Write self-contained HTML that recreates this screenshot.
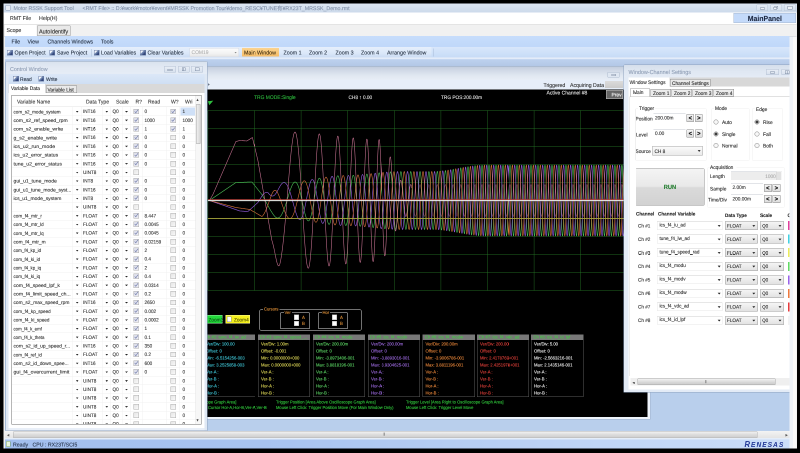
<!DOCTYPE html>
<html><head><meta charset="utf-8"><title>Motor RSSK Support Tool</title>
<style>
html,body{margin:0;padding:0;background:#000;overflow:hidden;}
body{width:800px;height:453px;position:relative;}
#s{position:absolute;left:0;top:0;width:1600px;height:906px;will-change:transform;transform:scale(0.5);filter:blur(0.6px);transform-origin:0 0;overflow:hidden;font-family:"Liberation Sans","Noto Sans CJK JP",sans-serif;}
#s div{position:absolute;}
.t{white-space:nowrap;-webkit-text-stroke:0.16px currentColor;}
</style></head><body><div id="s">
<div style="left:7px;top:7px;width:1587px;height:890.4px;background:#f0f0f0;"></div>
<div style="left:7px;top:7px;width:1587px;height:17.6px;background:linear-gradient(#dfe8f4,#d3dfee 60%,#cddaeb);"></div>
<div style="left:11px;top:10.4px;width:10px;height:10.8px;background:#e9eef6;border:0.5px solid #8fa0bb;border-radius:1px;box-sizing:border-box;"></div>
<div class="t" style="left:27.2px;top:9.3px;height:14.61px;line-height:14.61px;font-size:11.23px;color:#7f8da5;transform:scaleX(0.940) rotate(0.03deg);transform-origin:0 50%;">Motor RSSK Support Tool</div>
<div class="t jp" style="left:165px;top:9.3px;height:14.61px;line-height:14.61px;font-size:11.23px;color:#7f8da5;transform:scaleX(0.940) rotate(0.03deg);transform-origin:0 50%;">&lt;RMT File&gt; :: D:¥work¥motor¥event¥MRSSK Promotion Tour¥demo_RESC¥TUNE有¥RX23T_MRSSK_Demo.rmt</div>
<div style="left:1513px;top:8.6px;width:23.2px;height:13.8px;border:0.5px solid #b9c6d8;background:linear-gradient(#e6edf6,#d6e0ee);box-sizing:border-box;border-radius:1px;"></div>
<div style="left:1541px;top:8.6px;width:23.2px;height:13.8px;border:0.5px solid #b9c6d8;background:linear-gradient(#e6edf6,#d6e0ee);box-sizing:border-box;border-radius:1px;"></div>
<div style="left:1568.4px;top:8.6px;width:23.2px;height:13.8px;border:0.5px solid #b9c6d8;background:linear-gradient(#e6edf6,#d6e0ee);box-sizing:border-box;border-radius:1px;"></div>
<div style="left:1520px;top:14.8px;width:10px;height:4px;border:0.6px solid #7d8aa0;box-sizing:border-box;border-radius:0.8px;background:#eef2f8;"></div>
<div style="left:1549.2px;top:12.4px;width:7.2px;height:4.8px;border:0.6px solid #7d8aa0;box-sizing:border-box;background:#eef2f8;"></div>
<div style="left:1546.8px;top:14.4px;width:7.2px;height:4.8px;border:0.6px solid #7d8aa0;box-sizing:border-box;background:#eef2f8;"></div>
<div style="left:1575.2px;top:11.6px;width:9.6px;height:7.6px;border:0.7px solid #7d8aa0;box-sizing:border-box;background:#eef2f8;"></div>
<div style="left:8.4px;top:24.6px;width:1584.4px;height:24px;background:#fff;"></div>
<div class="t" style="left:19.8px;top:29.37px;height:14.47px;line-height:14.47px;font-size:11.13px;color:#333;transform:scaleX(0.940) rotate(0.03deg);transform-origin:0 50%;">RMT File</div>
<div class="t" style="left:77.8px;top:29.23px;height:14.74px;line-height:14.74px;font-size:11.34px;color:#333;transform:scaleX(0.940) rotate(0.03deg);transform-origin:0 50%;">Help(H)</div>
<div style="left:1467px;top:26.4px;width:125.4px;height:20px;background:#c4dafa;border:0.5px solid #a9b9cf;box-sizing:border-box;"></div>
<div class="t" style="left:1467px;top:27.84px;height:19.11px;line-height:19.11px;font-size:14.7px;color:#1c2740;width:125.4px;text-align:center;transform:scaleX(0.940) rotate(0.03deg);transform-origin:50% 50%;font-weight:bold;">MainPanel</div>
<div style="left:8.4px;top:48.6px;width:1584.4px;height:24px;background:#f1f1f1;border-top:0.5px solid #c9c9c9;border-bottom:0.5px solid #c4c8cf;box-sizing:border-box;"></div>
<div style="left:9.6px;top:49.6px;width:63.6px;height:23.6px;background:#fff;"></div>
<div class="t" style="left:13.4px;top:53.37px;height:14.47px;line-height:14.47px;font-size:11.13px;color:#222;transform:scaleX(0.940) rotate(0.03deg);transform-origin:0 50%;">Scope</div>
<div style="left:74px;top:51.2px;width:67.2px;height:20.4px;background:#e9e9e9;border:0.5px solid #9a9a9a;box-sizing:border-box;border-radius:1px 1px 0 0;"></div>
<div class="t" style="left:78.4px;top:54.56px;height:15.29px;line-height:15.29px;font-size:11.76px;color:#222;transform:scaleX(0.940) rotate(0.03deg);transform-origin:0 50%;">AutoIdentify</div>
<div style="left:9.6px;top:72.6px;width:1569px;height:824.8px;background:#b9cfec;"></div>
<div style="left:1578.6px;top:72.6px;width:7.8px;height:824.8px;background:#eef2f8;"></div>
<div style="left:1586.4px;top:72.6px;width:6.8px;height:824.8px;background:#fafafa;"></div>
<div style="left:9.6px;top:72px;width:1569px;height:22px;background:linear-gradient(#c7ddfc,#c0d8fa);"></div>
<div class="t" style="left:23.2px;top:76.43px;height:14.74px;line-height:14.74px;font-size:11.34px;color:#1e2a3c;transform:scaleX(0.940) rotate(0.03deg);transform-origin:0 50%;">File</div>
<div class="t" style="left:55.2px;top:76.43px;height:14.74px;line-height:14.74px;font-size:11.34px;color:#1e2a3c;transform:scaleX(0.940) rotate(0.03deg);transform-origin:0 50%;">View</div>
<div class="t" style="left:95.2px;top:76.43px;height:14.74px;line-height:14.74px;font-size:11.34px;color:#1e2a3c;transform:scaleX(0.940) rotate(0.03deg);transform-origin:0 50%;">Channels Windows</div>
<div class="t" style="left:201.6px;top:76.43px;height:14.74px;line-height:14.74px;font-size:11.34px;color:#1e2a3c;transform:scaleX(0.940) rotate(0.03deg);transform-origin:0 50%;">Tools</div>
<div style="left:9.6px;top:94px;width:1569px;height:21.6px;background:linear-gradient(#d9e7fb,#cde0f9 60%,#c6dbf6);"></div>
<div style="left:9.6px;top:94px;width:853.6px;height:21.2px;background:linear-gradient(#e6effc,#dbe8f9 60%,#cbdcf3);border-radius:0 1.5px 1.5px 0;"></div>
<div style="left:866.8px;top:97.2px;width:1px;height:15.6px;background:#a9bcd8;"></div>
<div style="left:14.4px;top:99.6px;width:11.2px;height:11.2px;background:linear-gradient(135deg,#f4f6fa 35%,#8aa0c4 36%,#31457a 75%);border:0.4px solid #6d7fa6;box-sizing:border-box;"></div>
<div class="t" style="left:28.8px;top:98.03px;height:14.74px;line-height:14.74px;font-size:11.34px;color:#1e2a3c;transform:scaleX(0.940) rotate(0.03deg);transform-origin:0 50%;">Open Project</div>
<div style="left:98.8px;top:99.6px;width:11.2px;height:11.2px;background:linear-gradient(135deg,#f4f6fa 35%,#8aa0c4 36%,#31457a 75%);border:0.4px solid #6d7fa6;box-sizing:border-box;"></div>
<div class="t" style="left:113.6px;top:98.03px;height:14.74px;line-height:14.74px;font-size:11.34px;color:#1e2a3c;transform:scaleX(0.940) rotate(0.03deg);transform-origin:0 50%;">Save Project</div>
<div style="left:182.4px;top:97.6px;width:1px;height:15.2px;background:#a8bcd8;"></div>
<div style="left:187.6px;top:99.6px;width:11.2px;height:11.2px;background:linear-gradient(135deg,#f4f6fa 35%,#8aa0c4 36%,#31457a 75%);border:0.4px solid #6d7fa6;box-sizing:border-box;"></div>
<div class="t" style="left:202.4px;top:98.03px;height:14.74px;line-height:14.74px;font-size:11.34px;color:#1e2a3c;transform:scaleX(0.940) rotate(0.03deg);transform-origin:0 50%;">Load Variables</div>
<div style="left:280.4px;top:99.6px;width:11.2px;height:11.2px;background:linear-gradient(135deg,#f4f6fa 35%,#8aa0c4 36%,#31457a 75%);border:0.4px solid #6d7fa6;box-sizing:border-box;"></div>
<div class="t" style="left:295.2px;top:98.03px;height:14.74px;line-height:14.74px;font-size:11.34px;color:#1e2a3c;transform:scaleX(0.940) rotate(0.03deg);transform-origin:0 50%;">Clear Variables</div>
<div style="left:379.2px;top:95.6px;width:98.4px;height:18.8px;background:linear-gradient(#fcfcfc,#f3f3f3 60%,#e6e6e6);border:0.4px solid #d5dce8;box-sizing:border-box;"></div>
<div class="t" style="left:382.8px;top:98.17px;height:13.65px;line-height:13.65px;font-size:10.5px;color:#b0b0b0;transform:scaleX(0.940) rotate(0.03deg);transform-origin:0 50%;">COM19</div>
<div style="left:468.6px;top:103.6px;width:5.2px;height:3.2px;background:#8a8a8a;clip-path:polygon(0 0,100% 0,50% 100%);"></div>
<div style="left:483.6px;top:96px;width:74px;height:17.2px;background:linear-gradient(#fbd490,#f8c676 60%,#f6bd68);border-radius:0.8px;"></div>
<div class="t" style="left:488.4px;top:98.03px;height:14.74px;line-height:14.74px;font-size:11.34px;color:#3a2a10;transform:scaleX(0.940) rotate(0.03deg);transform-origin:0 50%;">Main Window</div>
<div class="t" style="left:566.8px;top:98.03px;height:14.74px;line-height:14.74px;font-size:11.34px;color:#1e2a3c;transform:scaleX(0.940) rotate(0.03deg);transform-origin:0 50%;">Zoom 1</div>
<div class="t" style="left:618.4px;top:98.03px;height:14.74px;line-height:14.74px;font-size:11.34px;color:#1e2a3c;transform:scaleX(0.940) rotate(0.03deg);transform-origin:0 50%;">Zoom 2</div>
<div class="t" style="left:670.8px;top:98.03px;height:14.74px;line-height:14.74px;font-size:11.34px;color:#1e2a3c;transform:scaleX(0.940) rotate(0.03deg);transform-origin:0 50%;">Zoom 3</div>
<div class="t" style="left:722.4px;top:98.03px;height:14.74px;line-height:14.74px;font-size:11.34px;color:#1e2a3c;transform:scaleX(0.940) rotate(0.03deg);transform-origin:0 50%;">Zoom 4</div>
<div class="t" style="left:774.4px;top:98.03px;height:14.74px;line-height:14.74px;font-size:11.34px;color:#1e2a3c;transform:scaleX(0.940) rotate(0.03deg);transform-origin:0 50%;">Arrange Window</div>
<div style="left:9.6px;top:115.2px;width:1569px;height:16.8px;background:linear-gradient(#eaf1fb 0,#e2ebf9 16%,#bdd1ee 24%,#b3c8e7 100%);"></div>
<div style="left:9.6px;top:862px;width:1569px;height:14.4px;background:linear-gradient(#f4f4f4,#e4e4e4);"></div>
<div style="left:25.6px;top:862.8px;width:1489.2px;height:12.8px;background:linear-gradient(#f0f0f0,#dcdcdc 50%,#cfcfcf);border:0.5px solid #b4b4b4;box-sizing:border-box;border-radius:1px;"></div>
<div class="t" style="left:14.4px;top:863.52px;height:12.56px;line-height:12.56px;font-size:9.66px;color:#555;transform:scaleX(0.940) rotate(0.03deg);transform-origin:0 50%;">◂</div>
<div class="t" style="left:767.2px;top:864.49px;height:9.83px;line-height:9.83px;font-size:7.56px;color:#777;transform:scaleX(0.940) rotate(0.03deg);transform-origin:0 50%;">⦀</div>
<div class="t" style="left:1571.2px;top:863.52px;height:12.56px;line-height:12.56px;font-size:9.66px;color:#555;transform:scaleX(0.940) rotate(0.03deg);transform-origin:0 50%;">▸</div>
<div style="left:9.6px;top:876.4px;width:1569px;height:2.8px;background:#e4edf9;"></div>
<div style="left:9.6px;top:879.2px;width:1569px;height:18.2px;background:linear-gradient(90deg,#a3bfee 0,#a9c4f0 35%,#c0d5f6 75%,#cbddf9 100%);"></div>
<div style="left:12px;top:882px;width:8.8px;height:12.4px;background:#e8f4e0;border:0.6px solid #6f9a5c;box-sizing:border-box;border-radius:1.5px;"></div>
<div class="t" style="left:26px;top:881.77px;height:14.47px;line-height:14.47px;font-size:11.13px;color:#243148;transform:scaleX(0.940) rotate(0.03deg);transform-origin:0 50%;">Ready</div>
<div class="t" style="left:64.8px;top:881.77px;height:14.47px;line-height:14.47px;font-size:11.13px;color:#243148;transform:scaleX(0.940) rotate(0.03deg);transform-origin:0 50%;">CPU : RX23T/SCI5</div>
<div class="t" style="left:1489.2px;top:878.63px;height:20.75px;line-height:20.75px;font-size:15.96px;color:#2a3f9a;transform:scaleX(0.940) rotate(0.03deg);transform-origin:0 50%;font-weight:bold;font-style:italic;letter-spacing:2.3px;">R<span style="font-size:0.87em">ENESAS</span></div>
<div style="left:300px;top:132px;width:1000.8px;height:707.2px;background:#eef3fa;border:0.5px solid #9fb2cc;box-sizing:border-box;"></div>
<div style="left:300px;top:132.6px;width:1000px;height:27.4px;background:linear-gradient(#b4c1d4 0,#c6d0df 6%,#d4dce9 35%,#e2e9f2 70%,#e8eef7);"></div>
<div style="left:300px;top:160px;width:996px;height:19px;background:#e6eef9;"></div>
<div style="left:1215.2px;top:144px;width:24px;height:11.2px;border:0.5px solid #aebccf;background:#dfe7f2;box-sizing:border-box;border-radius:1px;"></div>
<div style="left:1222.8px;top:148.4px;width:9.2px;height:3.6px;border:0.5px solid #8a97ac;box-sizing:border-box;border-radius:0.8px;"></div>
<div class="t" style="left:1087.2px;top:162.7px;height:14.2px;line-height:14.2px;font-size:10.92px;color:#2a2a2a;transform:scaleX(0.940) rotate(0.03deg);transform-origin:0 50%;">Triggered</div>
<div class="t" style="left:1139.6px;top:162.63px;height:14.33px;line-height:14.33px;font-size:11.03px;color:#2a2a2a;transform:scaleX(0.940) rotate(0.03deg);transform-origin:0 50%;">Acquiring Data</div>
<div style="left:1210px;top:162px;width:36px;height:13.6px;background:linear-gradient(#dcdcdc,#cbcbcb);"></div>
<svg style="position:absolute;left:415.6px;top:165.6px;width:4px;height:6px" viewBox="0 0 4 6"><path d="M0.4 0.4L3.4 3L0.4 5.6Z" fill="#4a5668"/></svg>
<div style="left:415.2px;top:179px;width:880px;height:655.4px;background:#000;"></div>
<div class="t" style="left:508.4px;top:188.18px;height:13.65px;line-height:13.65px;font-size:10.5px;color:#2fbf3f;transform:scaleX(0.940) rotate(0.03deg);transform-origin:0 50%;">TRG MODE:Single</div>
<div class="t" style="left:696.8px;top:188.45px;height:13.1px;line-height:13.1px;font-size:10.08px;color:#e8e8e8;transform:scaleX(0.940) rotate(0.03deg);transform-origin:0 50%;">CH8 ↑ 0.00</div>
<div class="t" style="left:882px;top:188.45px;height:13.1px;line-height:13.1px;font-size:10.08px;color:#e8e8e8;transform:scaleX(0.940) rotate(0.03deg);transform-origin:0 50%;">TRG POS:200.00m</div>
<div class="t" style="left:1092.8px;top:178.84px;height:13.92px;line-height:13.92px;font-size:10.71px;color:#f0f0f0;transform:scaleX(0.940) rotate(0.03deg);transform-origin:0 50%;">Active Channel #8</div>
<div style="left:1212.4px;top:180px;width:33.6px;height:18.4px;background:#666;border:0.6px solid #c4c4c4;box-sizing:border-box;"></div>
<div class="t" style="left:1222.8px;top:182.97px;height:13.65px;line-height:13.65px;font-size:10.5px;color:#fff;transform:scaleX(0.940) rotate(0.03deg);transform-origin:0 50%;">Prev</div>
<svg style="position:absolute;left:415.2px;top:200px;width:880px;height:400px" viewBox="207.6 100 440 200" preserveAspectRatio="none" fill="none"><path d="M208.00 110.5V290.5M254.60 110.5V290.5M301.20 110.5V290.5M347.80 110.5V290.5M394.40 110.5V290.5M441.00 110.5V290.5M487.60 110.5V290.5M534.20 110.5V290.5M580.80 110.5V290.5M627.40 110.5V290.5M674.00 110.5V290.5M208.0 110.50H648M208.0 128.50H648M208.0 146.50H648M208.0 164.50H648M208.0 182.50H648M208.0 200.50H648M208.0 218.50H648M208.0 236.50H648M208.0 254.50H648M208.0 272.50H648M208.0 290.50H648" stroke="#2a802a" stroke-width="0.4"/><polyline points="209.5,200.5 209.7,200.4 209.9,200.2 210.1,200.1 210.3,200.0 210.5,199.8 210.7,199.7 210.9,199.5 211.1,199.4 211.3,199.3 211.5,199.1 211.7,199.0 211.9,198.9 212.1,198.7 212.3,198.6 212.5,198.5 212.7,198.3 212.9,198.2 213.1,198.1 213.3,197.9 213.5,197.8 213.7,197.6 213.9,197.5 214.1,197.4 214.3,197.2 214.5,197.1 214.7,197.0 214.9,196.8 215.1,196.7 215.3,196.6 215.5,196.4 215.7,196.3 215.9,196.2 216.1,196.0 216.3,195.9 216.5,195.7 216.7,195.6 216.9,195.5 217.1,195.3 217.3,195.2 217.5,195.1 217.7,194.9 217.9,194.8 218.1,194.7 218.3,194.5 218.5,194.4 218.7,194.3 218.9,194.1 219.1,194.0 219.3,193.8 219.5,193.7 219.7,193.6 219.9,193.4 220.1,193.3 220.3,193.2 220.5,193.0 220.7,192.9 220.9,192.8 221.1,192.6 221.3,192.5 221.5,192.3 221.7,192.2 221.9,192.1 222.1,191.9 222.3,191.8 222.5,191.7 222.7,191.5 222.9,191.4 223.1,191.3 223.3,191.1 223.5,191.0 223.7,190.9 223.9,190.7 224.1,190.6 224.3,190.4 224.5,190.3 224.7,190.2 224.9,190.0 225.1,189.9 225.3,189.8 225.5,189.6 225.7,189.5 225.9,189.4 226.1,189.2 226.3,189.1 226.5,189.0 226.7,188.8 226.9,188.7 227.1,188.5 227.3,188.4 227.5,188.3 227.7,188.1 227.9,188.0 228.1,187.9 228.3,187.7 228.5,187.6 228.7,187.5 228.9,187.3 229.1,187.2 229.3,187.1 229.5,186.9 229.7,186.8 229.9,186.6 230.1,186.5 230.3,186.4 230.5,186.2 230.7,186.1 230.9,186.0 231.1,185.8 231.3,185.7 231.5,185.6 231.7,185.4 231.9,185.3 232.1,185.1 232.3,185.0 232.5,184.9 232.7,184.7 232.9,184.6 233.1,184.5 233.3,184.3 233.5,184.2 233.7,184.1 233.9,183.9 234.1,183.8 234.3,183.7 234.5,183.5 234.7,183.4 234.9,183.2 235.1,183.1 235.3,183.0 235.5,182.8 235.7,182.7 235.9,182.6 236.1,182.5 236.3,182.5 236.5,182.5 236.7,182.5 236.9,182.5 237.1,182.5 237.3,182.5 237.5,182.5 237.7,182.4 237.9,182.4 238.1,182.4 238.3,182.4 238.5,182.4 238.7,182.4 238.9,182.4 239.1,182.4 239.3,182.4 239.5,182.4 239.7,182.4 239.9,182.4 240.1,182.4 240.3,182.4 240.5,182.4 240.7,182.4 240.9,182.3 241.1,182.3 241.3,182.3 241.5,182.3 241.7,182.3 241.9,182.3 242.1,182.3 242.3,182.3 242.5,182.3 242.7,182.3 242.9,182.3 243.1,182.3 243.3,182.3 243.5,182.3 243.7,182.3 243.9,182.3 244.1,182.2 244.3,182.2 244.5,182.2 244.7,182.2 244.9,182.2 245.1,182.2 245.3,182.2 245.5,182.2 245.7,182.2 245.9,182.2 246.1,182.2 246.3,182.2 246.5,182.2 246.7,182.2 246.9,182.2 247.1,182.2 247.3,182.1 247.5,182.1 247.7,182.1 247.9,182.1 248.1,182.1 248.3,182.1 248.5,182.1 248.7,182.1 248.9,182.1 249.1,182.1 249.3,182.1 249.5,182.1 249.7,182.1 249.9,182.1 250.1,182.1 250.3,182.1 250.5,182.0 250.7,182.0 250.9,182.0 251.1,182.0 251.3,182.0 251.5,182.0 251.7,182.0 251.9,182.0 252.1,182.1 252.3,182.4 252.5,182.6 252.7,182.9 252.9,183.1 253.1,183.4 253.3,183.6 253.5,183.9 253.7,184.1 253.9,184.4 254.1,184.6 254.3,184.9 254.5,185.1 254.7,185.4 254.9,185.6 255.1,185.9 255.3,186.1 255.5,186.4 255.7,186.6 255.9,186.9 256.1,187.1 256.3,187.4 256.5,187.6 256.7,187.9 256.9,188.1 257.1,188.4 257.3,188.6 257.5,188.9 257.7,189.1 257.9,189.4 258.1,189.6 258.3,189.9 258.5,190.1 258.7,190.4 258.9,190.6 259.1,190.9 259.3,191.1 259.5,191.4 259.7,191.6 259.9,191.9 260.1,192.1 260.3,192.4 260.5,192.6 260.7,192.9 260.9,193.1 261.1,193.4 261.3,193.6 261.5,193.9 261.7,194.1 261.9,194.4 262.1,194.7 262.3,195.0 262.5,195.4 262.7,195.7 262.9,196.1 263.1,196.5 263.3,196.8 263.5,197.2 263.7,197.5 263.9,197.9 264.1,198.3 264.3,198.6 264.5,199.0 264.7,199.4 264.9,199.7 265.1,200.1 265.3,200.5 265.5,200.8 265.7,201.2 265.9,201.6 266.1,202.0 266.3,202.3 266.5,202.7 266.7,203.1 266.9,203.4 267.1,203.8 267.3,204.2 267.5,204.6 267.7,204.9 267.9,205.3 268.1,205.7 268.3,206.0 268.5,206.4 268.7,206.8 268.9,207.2 269.1,207.5 269.3,207.9 269.5,208.3 269.7,208.6 269.9,209.0 270.1,209.3 270.3,209.7 270.5,210.0 270.7,210.3 270.9,210.6 271.1,211.0 271.3,211.3 271.5,211.6 271.7,211.9 271.9,212.2 272.1,212.5 272.3,212.9 272.5,213.2 272.7,213.5 272.9,213.8 273.1,214.1 273.3,214.4 273.5,214.7 273.7,214.9 273.9,215.2 274.1,215.5 274.3,215.7 274.5,216.0 274.7,216.2 274.9,216.4 275.1,216.6 275.3,216.8 275.5,217.0 275.7,217.2 275.9,217.4 276.1,217.5 276.3,217.6 276.5,217.7 276.7,217.8 276.9,217.8 277.1,217.9 277.3,217.9 277.5,218.0 277.7,218.0 277.9,218.0 278.1,218.0 278.3,217.9 278.5,217.9 278.7,217.8 278.9,217.7 279.1,217.6 279.3,217.5 279.5,217.4 279.7,217.2 279.9,217.0 280.1,216.8 280.3,216.6 280.5,216.4 280.7,216.1 280.9,215.9 281.1,215.6 281.3,215.3 281.5,215.0 281.7,214.6 281.9,214.3 282.1,213.9 282.3,213.5 282.5,213.1 282.7,212.7 282.9,212.3 283.1,211.9 283.3,211.4 283.5,210.9 283.7,210.4 283.9,209.9 284.1,209.4 284.3,208.9 284.5,208.3 284.7,207.8 284.9,207.2 285.1,206.6 285.3,206.0 285.5,205.4 285.7,204.8 285.9,204.2 286.1,203.6 286.3,203.0 286.5,202.3 286.7,201.7 286.9,201.0 287.1,200.4 287.3,199.7 287.5,199.1 287.7,198.4 287.9,197.8 288.1,197.1 288.3,196.5 288.5,195.8 288.7,195.2 288.9,194.5 289.1,193.9 289.3,193.3 289.5,192.6 289.7,192.0 289.9,191.4 290.1,190.8 290.3,190.2 290.5,189.6 290.7,189.1 290.9,188.5 291.1,188.0 291.3,187.5 291.5,187.0 291.7,186.5 291.9,186.0 292.1,185.6 292.3,185.2 292.5,184.8 292.7,184.4 292.9,184.0 293.1,183.7 293.3,183.4 293.5,183.1 293.7,182.9 293.9,182.7 294.1,182.5 294.3,182.3 294.5,182.2 294.7,182.1 294.9,182.0 295.1,182.0 295.3,182.0 295.5,182.0 295.7,182.1 295.9,182.2 296.1,182.3 296.3,182.5 296.5,182.7 296.7,182.9 296.9,183.2 297.1,183.5 297.3,183.8 297.5,184.2 297.7,184.6 297.9,185.0 298.1,185.5 298.3,186.0 298.5,186.5 298.7,187.1 298.9,187.7 299.1,188.3 299.3,189.0 299.5,189.7 299.7,190.4 299.9,191.1 300.1,191.9 300.3,192.7 300.5,193.5 300.7,194.3 300.9,195.2 301.1,196.0 301.3,196.9 301.5,197.8 301.7,198.7 301.9,199.6 302.1,200.5 302.3,201.4 302.5,202.4 302.7,203.3 302.9,204.2 303.1,205.2 303.3,206.1 303.5,207.0 303.7,207.9 303.9,208.8 304.1,209.7 304.3,210.5 304.5,211.4 304.7,212.2 304.9,213.0 305.1,213.8 305.3,214.5 305.5,215.2 305.7,215.9 305.9,216.5 306.1,217.1 306.3,217.7 306.5,218.2 306.7,218.7 306.9,219.2 307.1,219.6 307.3,219.9 307.5,220.2 307.7,220.4 307.9,220.6 308.1,220.8 308.3,220.8 308.5,220.9 308.7,220.8 308.9,220.8 309.1,220.6 309.3,220.4 309.5,220.1 309.7,219.8 309.9,219.5 310.1,219.0 310.3,218.5 310.5,218.0 310.7,217.4 310.9,216.7 311.1,216.0 311.3,215.3 311.5,214.5 311.7,213.6 311.9,212.7 312.1,211.8 312.3,210.8 312.5,209.8 312.7,208.7 312.9,207.6 313.1,206.5 313.3,205.4 313.5,204.2 313.7,203.0 313.9,201.8 314.1,200.6 314.3,199.4 314.5,198.2 314.7,197.0 314.9,195.8 315.1,194.6 315.3,193.4 315.5,192.2 315.7,191.0 315.9,189.9 316.1,188.8 316.3,187.7 316.5,186.7 316.7,185.7 316.9,184.8 317.1,183.9 317.3,183.0 317.5,182.3 317.7,181.5 317.9,180.9 318.1,180.3 318.3,179.8 318.5,179.3 318.7,178.9 318.9,178.6 319.1,178.4 319.3,178.3 319.5,178.2 319.7,178.2 319.9,178.4 320.1,178.6 320.3,178.8 320.5,179.2 320.7,179.6 320.9,180.2 321.1,180.8 321.3,181.5 321.5,182.3 321.7,183.1 321.9,184.0 322.1,185.0 322.3,186.1 322.5,187.2 322.7,188.4 322.9,189.6 323.1,190.9 323.3,192.2 323.5,193.6 323.7,195.0 323.9,196.5 324.1,197.9 324.3,199.4 324.5,200.9 324.7,202.4 324.9,203.9 325.1,205.4 325.3,206.9 325.5,208.3 325.7,209.8 325.9,211.2 326.1,212.5 326.3,213.9 326.5,215.1 326.7,216.3 326.9,217.5 327.1,218.5 327.3,219.5 327.5,220.4 327.7,221.3 327.9,222.0 328.1,222.6 328.3,223.2 328.5,223.6 328.7,223.9 328.9,224.2 329.1,224.3 329.3,224.3 329.5,224.2 329.7,224.0 329.9,223.6 330.1,223.2 330.3,222.6 330.5,221.9 330.7,221.2 330.9,220.3 331.1,219.3 331.3,218.2 331.5,217.1 331.7,215.8 331.9,214.5 332.1,213.1 332.3,211.6 332.5,210.0 332.7,208.4 332.9,206.8 333.1,205.1 333.3,203.4 333.5,201.7 333.7,199.9 333.9,198.2 334.1,196.4 334.3,194.7 334.5,193.0 334.7,191.3 334.9,189.7 335.1,188.1 335.3,186.6 335.5,185.1 335.7,183.7 335.9,182.5 336.1,181.3 336.3,180.2 336.5,179.2 336.7,178.3 336.9,177.6 337.1,176.9 337.3,176.4 337.5,176.1 337.7,175.9 337.9,175.8 338.1,175.8 338.3,176.0 338.5,176.4 338.7,176.8 338.9,177.4 339.1,178.2 339.3,179.1 339.5,180.1 339.7,181.2 339.9,182.5 340.1,183.8 340.3,185.3 340.5,186.8 340.7,188.5 340.9,190.2 341.1,192.0 341.3,193.8 341.5,195.7 341.7,197.6 341.9,199.6 342.1,201.5 342.3,203.5 342.5,205.4 342.7,207.4 342.9,209.2 343.1,211.1 343.3,212.8 343.5,214.5 343.7,216.1 343.9,217.6 344.1,219.0 344.3,220.3 344.5,221.5 344.7,222.5 344.9,223.4 345.1,224.1 345.3,224.7 345.5,225.1 345.7,225.4 345.9,225.5 346.1,225.4 346.3,225.2 346.5,224.8 346.7,224.3 346.9,223.5 347.1,222.7 347.3,221.7 347.5,220.5 347.7,219.2 347.9,217.7 348.1,216.2 348.3,214.5 348.5,212.7 348.7,210.9 348.9,208.9 349.1,206.9 349.3,204.9 349.5,202.8 349.7,200.7 349.9,198.5 350.1,196.4 350.3,194.4 350.5,192.3 350.7,190.3 350.9,188.4 351.1,186.6 351.3,184.8 351.5,183.2 351.7,181.7 351.9,180.3 352.1,179.1 352.3,178.0 352.5,177.1 352.7,176.4 352.9,175.8 353.1,175.5 353.3,175.3 353.5,175.3 353.7,175.5 353.9,175.9 354.1,176.5 354.3,177.2 354.5,178.2 354.7,179.3 354.9,180.6 355.1,182.1 355.3,183.7 355.5,185.4 355.7,187.3 355.9,189.2 356.1,191.3 356.3,193.4 356.5,195.7 356.7,197.9 356.9,200.2 357.1,202.5 357.3,204.8 357.5,207.0 357.7,209.2 357.9,211.4 358.1,213.4 358.3,215.4 358.5,217.2 358.7,218.9 358.9,220.5 359.1,221.9 359.3,223.1 359.5,224.1 359.7,225.0 359.9,225.6 360.1,226.0 360.3,226.2 360.5,226.2 360.7,226.0 360.9,225.5 361.1,224.9 361.3,224.0 361.5,222.9 361.7,221.6 361.9,220.1 362.1,218.4 362.3,216.6 362.5,214.6 362.7,212.5 362.9,210.3 363.1,208.0 363.3,205.6 363.5,203.2 363.7,200.7 363.9,198.2 364.1,195.8 364.3,193.3 364.5,191.0 364.7,188.7 364.9,186.5 365.1,184.4 365.3,182.5 365.5,180.7 365.7,179.1 365.9,177.7 366.1,176.5 366.3,175.6 366.5,174.8 366.7,174.4 366.9,174.1 367.1,174.1 367.3,174.4 367.5,174.9 367.7,175.7 367.9,176.7 368.1,177.9 368.3,179.4 368.5,181.0 368.7,182.9 368.9,185.0 369.1,187.2 369.3,189.5 369.5,192.0 369.7,194.5 369.9,197.1 370.1,199.8 370.3,202.5 370.5,205.1 370.7,207.8 370.9,210.3 371.1,212.8 371.3,215.2 371.5,217.4 371.7,219.4 371.9,221.3 372.1,222.9 372.3,224.3 372.5,225.5 372.7,226.4 372.9,227.1 373.1,227.5 373.3,227.6 373.5,227.4 373.7,226.9 373.9,226.2 374.1,225.1 374.3,223.8 374.5,222.3 374.7,220.5 374.9,218.5 375.1,216.3 375.3,213.9 375.5,211.4 375.7,208.7 375.9,206.0 376.1,203.1 376.3,200.3 376.5,197.4 376.7,194.5 376.9,191.8 377.1,189.1 377.3,186.5 377.5,184.0 377.7,181.8 377.9,179.7 378.1,177.9 378.3,176.3 378.5,175.0 378.7,174.0 378.9,173.3 379.1,172.9 379.3,172.8 379.5,173.0 379.7,173.5 379.9,174.4 380.1,175.6 380.3,177.0 380.5,178.7 380.7,180.7 380.9,183.0 381.1,185.4 381.3,188.0 381.5,190.8 381.7,193.7 381.9,196.7 382.1,199.7 382.3,202.8 382.5,205.8 382.7,208.8 382.9,211.7 383.1,214.5 383.3,217.1 383.5,219.5 383.7,221.7 383.9,223.6 384.1,225.3 384.3,226.6 384.5,227.7 384.7,228.4 384.9,228.7 385.1,228.7 385.3,228.4 385.5,227.7 385.7,226.6 385.9,225.3 386.1,223.6 386.3,221.6 386.5,219.4 386.7,216.9 386.9,214.1 387.1,211.2 387.3,208.2 387.5,205.1 387.7,201.8 387.9,198.6 388.1,195.4 388.3,192.2 388.5,189.2 388.7,186.2 388.9,183.5 389.1,181.0 389.3,178.7 389.5,176.7 389.7,175.0 389.9,173.7 390.1,172.7 390.3,172.1 390.5,171.8 390.7,172.0 390.9,172.5 391.1,173.4 391.3,174.7 391.5,176.3 391.7,178.3 391.9,180.5 392.1,183.1 392.3,185.9 392.5,188.8 392.7,192.0 392.9,195.3 393.1,198.7 393.3,202.1 393.5,205.4 393.7,208.8 393.9,212.0 394.1,215.0 394.3,217.9 394.5,220.5 394.7,222.8 394.9,224.9 395.1,226.5 395.3,227.9 395.5,228.8 395.7,229.3 395.9,229.4 396.1,229.1 396.3,228.4 396.5,227.3 396.7,225.8 396.9,223.9 397.1,221.6 397.3,219.1 397.5,216.3 397.7,213.2 397.9,210.0 398.1,206.6 398.3,203.1 398.5,199.6 398.7,196.1 398.9,192.6 399.1,189.2 399.3,186.1 399.5,183.1 399.7,180.4 399.9,178.0 400.1,175.9 400.3,174.2 400.5,172.9 400.7,172.0 400.9,171.6 401.1,171.6 401.3,172.0 401.5,172.9 401.7,174.2 401.9,175.9 402.1,178.0 402.3,180.4 402.5,183.2 402.7,186.2 402.9,189.5 403.1,193.0 403.3,196.5 403.5,200.2 403.7,203.8 403.9,207.4 404.1,210.9 404.3,214.2 404.5,217.3 404.7,220.2 404.9,222.7 405.1,224.9 405.3,226.7 405.5,228.1 405.7,229.0 405.9,229.4 406.1,229.4 406.3,229.0 406.5,228.0 406.7,226.6 406.9,224.8 407.1,222.5 407.3,219.9 407.5,217.0 407.7,213.8 407.9,210.4 408.1,206.8 408.3,203.1 408.5,199.3 408.7,195.6 408.9,191.9 409.1,188.4 409.3,185.1 409.5,182.0 409.7,179.3 409.9,176.9 410.1,174.9 410.3,173.3 410.5,172.2 410.7,171.6 410.9,171.5 411.1,171.9 411.3,172.8 411.5,174.2 411.7,176.0 411.9,178.3 412.1,180.9 412.3,183.9 412.5,187.2 412.7,190.7 412.9,194.5 413.1,198.3 413.3,202.1 413.5,206.0 413.7,209.7 413.9,213.3 414.1,216.7 414.3,219.7 414.5,222.5 414.7,224.8 414.9,226.7 415.1,228.1 415.3,229.1 415.5,229.5 415.7,229.4 415.9,228.7 416.1,227.6 416.3,225.9 416.5,223.8 416.7,221.2 416.9,218.2 417.1,215.0 417.3,211.4 417.5,207.7 417.7,203.8 417.9,199.8 418.1,195.8 418.3,192.0 418.5,188.3 418.7,184.8 418.9,181.6 419.1,178.7 419.3,176.3 419.5,174.3 419.7,172.9 419.9,171.9 420.1,171.5 420.3,171.7 420.5,172.4 420.7,173.6 420.9,175.4 421.1,177.7 421.3,180.4 421.5,183.5 421.7,186.9 421.9,190.6 422.1,194.5 422.3,198.6 422.5,202.6 422.7,206.7 422.9,210.6 423.1,214.3 423.3,217.7 423.5,220.8 423.7,223.6 423.9,225.8 424.1,227.6 424.3,228.8 424.5,229.4 424.7,229.5 424.9,228.9 425.1,227.8 425.3,226.2 425.5,224.0 425.7,221.3 425.9,218.2 426.1,214.8 426.3,211.0 426.5,207.0 426.7,202.9 426.9,198.8 427.1,194.6 427.3,190.6 427.5,186.8 427.7,183.3 427.9,180.1 428.1,177.3 428.3,175.0 428.5,173.3 428.7,172.1 428.9,171.6 429.1,171.6 429.3,172.2 429.5,173.5 429.7,175.3 429.9,177.7 430.1,180.5 430.3,183.8 430.5,187.5 430.7,191.4 430.9,195.5 431.1,199.8 431.3,204.0 431.5,208.2 431.7,212.2 431.9,216.0 432.1,219.4 432.3,222.5 432.5,225.0 432.7,227.1 432.9,228.5 433.1,229.3 433.3,229.5 433.5,229.0 433.7,228.0 433.9,226.3 434.1,224.0 434.3,221.2 434.5,217.9 434.7,214.3 434.9,210.3 435.1,206.1 435.3,201.8 435.5,197.4 435.7,193.1 435.9,188.9 436.1,185.0 436.3,181.5 436.5,178.4 436.7,175.8 436.9,173.7 437.1,172.3 437.3,171.5 437.5,171.3 437.7,171.9 437.9,173.1 438.1,174.9 438.3,177.4 438.5,180.4 438.7,183.8 438.9,187.7 439.1,191.8 439.3,196.2 439.5,200.7 439.7,205.2 439.9,209.6 440.1,213.8 440.3,217.7 440.5,221.2 440.7,224.2 440.9,226.6 441.1,228.4 441.3,229.6 441.5,230.0 441.7,229.8 441.9,228.9 442.1,227.2 442.3,224.9 442.5,222.0 442.7,218.6 442.9,214.8 443.1,210.5 443.3,206.1 443.5,201.4 443.7,196.8 443.9,192.2 444.1,187.8 444.3,183.7 444.5,180.0 444.7,176.8 444.9,174.2 445.1,172.3 445.3,171.0 445.5,170.5 445.7,170.7 445.9,171.6 446.1,173.3 446.3,175.7 446.5,178.7 446.7,182.3 446.9,186.4 447.1,190.8 447.3,195.5 447.5,200.3 447.7,205.1 447.9,209.8 448.1,214.3 448.3,218.5 448.5,222.2 448.7,225.4 448.9,227.9 449.1,229.8 449.3,230.9 449.5,231.1 449.7,230.6 449.9,229.4 450.1,227.3 450.3,224.6 450.5,221.2 450.7,217.2 450.9,212.8 451.1,208.1 451.3,203.1 451.5,198.1 451.7,193.1 451.9,188.3 452.1,183.8 452.3,179.7 452.5,176.2 452.7,173.3 452.9,171.2 453.1,169.8 453.3,169.2 453.5,169.5 453.7,170.6 453.9,172.5 454.1,175.2 454.3,178.6 454.5,182.6 454.7,187.1 454.9,192.0 455.1,197.1 455.3,202.4 455.5,207.6 455.7,212.6 455.9,217.3 456.1,221.5 456.3,225.2 456.5,228.3 456.7,230.5 456.9,231.9 457.1,232.5 457.3,232.2 457.5,230.9 457.7,228.8 457.9,226.0 458.1,222.4 458.3,218.1 458.5,213.4 458.7,208.2 458.9,202.9 459.1,197.4 459.3,192.0 459.5,186.9 459.7,182.1 459.9,177.8 460.1,174.2 460.3,171.3 460.5,169.3 460.7,168.1 460.9,167.8 461.1,168.6 461.3,170.2 461.5,172.7 461.7,176.1 461.9,180.1 462.1,184.8 462.3,189.9 462.5,195.4 462.7,201.0 462.9,206.7 463.1,212.1 463.3,217.3 463.5,221.9 463.7,226.0 463.9,229.3 464.1,231.7 464.3,233.3 464.5,233.8 464.7,233.4 464.9,232.0 465.1,229.6 465.3,226.4 465.5,222.3 465.7,217.6 465.9,212.4 466.1,206.8 466.3,200.9 466.5,195.1 466.7,189.4 466.9,184.0 467.1,179.1 467.3,174.9 467.5,171.4 467.7,168.8 467.9,167.2 468.1,166.6 468.3,167.0 468.5,168.5 468.7,170.9 468.9,174.3 469.1,178.5 469.3,183.5 469.5,188.9 469.7,194.7 469.9,200.8 470.1,206.8 470.3,212.6 470.5,218.1 470.7,223.1 470.9,227.3 471.1,230.7 471.3,233.2 471.5,234.6 471.7,235.0 471.9,234.2 472.1,232.4 472.3,229.5 472.5,225.8 472.7,221.2 472.9,215.9 473.1,210.1 473.3,204.0 473.5,197.8 473.7,191.6 473.9,185.8 474.1,180.4 474.3,175.6 474.5,171.6 474.7,168.6 474.9,166.6 475.1,165.6 475.3,165.8 475.5,167.2 475.7,169.5 475.9,172.9 476.1,177.2 476.3,182.3 476.5,187.9 476.7,193.9 476.9,200.2 477.1,206.5 477.3,212.6 477.5,218.3 477.7,223.4 477.9,227.8 478.1,231.4 478.3,233.9 478.5,235.4 478.7,235.7 478.9,234.9 479.1,233.0 479.3,230.1 479.5,226.2 479.7,221.4 479.9,216.0 480.1,210.1 480.3,203.9 480.5,197.5 480.7,191.3 480.9,185.3 481.1,179.8 481.3,175.0 481.5,171.0 481.7,168.0 481.9,166.0 482.1,165.1 482.3,165.4 482.5,166.7 482.7,169.2 482.9,172.7 483.1,177.1 483.3,182.2 483.5,187.9 483.7,194.1 483.9,200.4 484.1,206.8 484.3,212.9 484.5,218.7 484.7,223.8 484.9,228.2 485.1,231.7 485.3,234.3 485.5,235.7 485.7,236.0 485.9,235.1 486.1,233.1 486.3,230.1 486.5,226.2 486.7,221.4 486.9,215.9 487.1,209.9 487.3,203.7 487.5,197.3 487.7,191.0 487.9,185.1 488.1,179.6 488.3,174.8 488.5,170.8 488.7,167.8 488.9,165.9 489.1,165.0 489.3,165.3 489.5,166.8 489.7,169.3 489.9,172.8 490.1,177.2 490.3,182.4 490.5,188.1 490.7,194.3 490.9,200.6 491.1,207.0 491.3,213.1 491.5,218.8 491.7,224.0 491.9,228.4 492.1,231.8 492.3,234.3 492.5,235.7 492.7,236.0 492.9,235.1 493.1,233.1 493.3,230.0 493.5,226.0 493.7,221.2 493.9,215.7 494.1,209.7 494.3,203.4 494.5,197.1 494.7,190.8 494.9,184.9 495.1,179.4 495.3,174.6 495.5,170.7 495.7,167.7 495.9,165.8 496.1,165.0 496.3,165.4 496.5,166.8 496.7,169.4 496.9,173.0 497.1,177.4 497.3,182.6 497.5,188.4 497.7,194.5 497.9,200.9 498.1,207.2 498.3,213.3 498.5,219.0 498.7,224.2 498.9,228.5 499.1,232.0 499.3,234.4 499.5,235.7 499.7,235.9 499.9,235.0 500.1,233.0 500.3,229.9 500.5,225.8 500.7,221.0 500.9,215.5 501.1,209.5 501.3,203.2 501.5,196.8 501.7,190.6 501.9,184.7 502.1,179.2 502.3,174.5 502.5,170.6 502.7,167.7 502.9,165.8 503.1,165.0 503.3,165.4 503.5,166.9 503.7,169.5 503.9,173.1 504.1,177.6 504.3,182.8 504.5,188.6 504.7,194.7 504.9,201.1 505.1,207.4 505.3,213.5 505.5,219.2 505.7,224.3 505.9,228.6 506.1,232.1 506.3,234.5 506.5,235.8 506.7,235.9 506.9,235.0 507.1,232.9 507.3,229.8 507.5,225.7 507.7,220.8 507.9,215.3 508.1,209.3 508.3,203.0 508.5,196.6 508.7,190.4 508.9,184.5 509.1,179.1 509.3,174.3 509.5,170.5 509.7,167.6 509.9,165.7 510.1,165.0 510.3,165.4 510.5,167.0 510.7,169.6 510.9,173.2 511.1,177.7 511.3,183.0 511.5,188.8 511.7,195.0 511.9,201.3 512.1,207.6 512.3,213.7 512.5,219.4 512.7,224.5 512.9,228.8 513.1,232.2 513.3,234.5 513.5,235.8 513.7,235.9 513.9,234.9 514.1,232.8 514.3,229.6 514.5,225.5 514.7,220.6 514.9,215.1 515.1,209.1 515.3,202.8 515.5,196.4 515.7,190.2 515.9,184.3 516.1,178.9 516.3,174.2 516.5,170.4 516.7,167.5 516.9,165.7 517.1,165.0 517.3,165.5 517.5,167.1 517.7,169.7 517.9,173.4 518.1,177.9 518.3,183.2 518.5,189.0 518.7,195.2 518.9,201.5 519.1,207.9 519.3,214.0 519.5,219.6 519.7,224.6 519.9,228.9 520.1,232.3 520.3,234.6 520.5,235.8 520.7,235.9 520.9,234.8 521.1,232.7 521.3,229.5 521.5,225.4 521.7,220.4 521.9,214.9 522.1,208.8 522.3,202.5 522.5,196.2 522.7,189.9 522.9,184.1 523.1,178.7 523.3,174.0 523.5,170.2 523.7,167.4 523.9,165.6 524.1,165.0 524.3,165.5 524.5,167.1 524.7,169.8 524.9,173.5 525.1,178.1 525.3,183.4 525.5,189.2 525.7,195.4 525.9,201.8 526.1,208.1 526.3,214.2 526.5,219.8 526.7,224.8 526.9,229.0 527.1,232.4 527.3,234.6 527.5,235.8 527.7,235.9 527.9,234.8 528.1,232.6 528.3,229.4 528.5,225.2 528.7,220.3 528.9,214.7 529.1,208.6 529.3,202.3 529.5,196.0 529.7,189.7 529.9,183.9 530.1,178.5 530.3,173.9 530.5,170.1 530.7,167.3 530.9,165.6 531.1,165.0 531.3,165.5 531.5,167.2 531.7,169.9 531.9,173.7 532.1,178.3 532.3,183.6 532.5,189.4 532.7,195.6 532.9,202.0 533.1,208.3 533.3,214.4 533.5,220.0 533.7,225.0 533.9,229.2 534.1,232.5 534.3,234.7 534.5,235.9 534.7,235.9 534.9,234.7 535.1,232.5 535.3,229.2 535.5,225.1 535.7,220.1 535.9,214.5 536.1,208.4 536.3,202.1 536.5,195.7 536.7,189.5 536.9,183.7 537.1,178.3 537.3,173.7 537.5,170.0 537.7,167.2 537.9,165.6 538.1,165.0 538.3,165.6 538.5,167.3 538.7,170.1 538.9,173.8 539.1,178.4 539.3,183.8 539.5,189.6 539.7,195.8 539.9,202.2 540.1,208.5 540.3,214.6 540.5,220.2 540.7,225.1 540.9,229.3 541.1,232.5 541.3,234.8 541.5,235.9 541.7,235.8 541.9,234.7 542.1,232.4 542.3,229.1 542.5,224.9 542.7,219.9 542.9,214.3 543.1,208.2 543.3,201.9 543.5,195.5 543.7,189.3 543.9,183.5 544.1,178.2 544.3,173.6 544.5,169.9 544.7,167.2 544.9,165.5 545.1,165.0 545.3,165.6 545.5,167.4 545.7,170.2 545.9,174.0 546.1,178.6 546.3,184.0 546.5,189.8 546.7,196.1 546.9,202.4 547.1,208.7 547.3,214.8 547.5,220.4 547.7,225.3 547.9,229.4 548.1,232.6 548.3,234.8 548.5,235.9 548.7,235.8 548.9,234.6 549.1,232.3 549.3,229.0 549.5,224.7 549.7,219.7 549.9,214.1 550.1,208.0 550.3,201.6 550.5,195.3 550.7,189.1 550.9,183.3 551.1,178.0 551.3,173.5 551.5,169.8 551.7,167.1 551.9,165.5 552.1,165.0 552.3,165.7 552.5,167.4 552.7,170.3 552.9,174.1 553.1,178.8 553.3,184.2 553.5,190.1 553.7,196.3 553.9,202.7 554.1,208.9 554.3,215.0 554.5,220.5 554.7,225.5 554.9,229.6 555.1,232.7 555.3,234.9 555.5,235.9 555.7,235.8 555.9,234.5 556.1,232.2 556.3,228.8 556.5,224.6 556.7,219.5 556.9,213.8 557.1,207.8 557.3,201.4 557.5,195.1 557.7,188.9 557.9,183.1 558.1,177.8 558.3,173.3 558.5,169.7 558.7,167.0 558.9,165.4 559.1,165.0 559.3,165.7 559.5,167.5 559.7,170.4 559.9,174.3 560.1,179.0 560.3,184.4 560.5,190.3 560.7,196.5 560.9,202.9 561.1,209.2 561.3,215.2 561.5,220.7 561.7,225.6 561.9,229.7 562.1,232.8 562.3,234.9 562.5,235.9 562.7,235.8 562.9,234.5 563.1,232.1 563.3,228.7 563.5,224.4 563.7,219.3 563.9,213.6 564.1,207.5 564.3,201.2 564.5,194.8 564.7,188.7 564.9,182.9 565.1,177.7 565.3,173.2 565.5,169.6 565.7,166.9 565.9,165.4 566.1,165.0 566.3,165.8 566.5,167.6 566.7,170.5 566.9,174.4 567.1,179.1 567.3,184.6 567.5,190.5 567.7,196.7 567.9,203.1 568.1,209.4 568.3,215.4 568.5,220.9 568.7,225.8 568.9,229.8 569.1,232.9 569.3,235.0 569.5,235.9 569.7,235.7 569.9,234.4 570.1,232.0 570.3,228.6 570.5,224.2 570.7,219.1 570.9,213.4 571.1,207.3 571.3,201.0 571.5,194.6 571.7,188.5 571.9,182.7 572.1,177.5 572.3,173.0 572.5,169.5 572.7,166.9 572.9,165.4 573.1,165.0 573.3,165.8 573.5,167.7 573.7,170.7 573.9,174.6 574.1,179.3 574.3,184.8 574.5,190.7 574.7,196.9 574.9,203.3 575.1,209.6 575.3,215.6 575.5,221.1 575.7,225.9 575.9,229.9 576.1,233.0 576.3,235.0 576.5,235.9 576.7,235.7 576.9,234.4 577.1,231.9 577.3,228.4 577.5,224.1 577.7,218.9 577.9,213.2 578.1,207.1 578.3,200.8 578.5,194.4 578.7,188.3 578.9,182.5 579.1,177.3 579.3,172.9 579.5,169.3 579.7,166.8 579.9,165.3 580.1,165.0 580.3,165.8 580.5,167.8 580.7,170.8 580.9,174.7 581.1,179.5 581.3,185.0 581.5,190.9 581.7,197.2 581.9,203.5 582.1,209.8 582.3,215.8 582.5,221.3 582.7,226.1 582.9,230.1 583.1,233.1 583.3,235.1 583.5,236.0 583.7,235.7 583.9,234.3 584.1,231.8 584.3,228.3 584.5,223.9 584.7,218.8 584.9,213.0 585.1,206.9 585.3,200.5 585.5,194.2 585.7,188.0 585.9,182.3 586.1,177.1 586.3,172.7 586.5,169.2 586.7,166.7 586.9,165.3 587.1,165.0 587.3,165.9 587.5,167.9 587.7,170.9 587.9,174.9 588.1,179.7 588.3,185.2 588.5,191.1 588.7,197.4 588.9,203.8 589.1,210.0 589.3,216.0 589.5,221.4 589.7,226.2 589.9,230.2 590.1,233.2 590.3,235.1 590.5,236.0 590.7,235.7 590.9,234.2 591.1,231.7 591.3,228.2 591.5,223.7 591.7,218.6 591.9,212.8 592.1,206.7 592.3,200.3 592.5,194.0 592.7,187.8 592.9,182.1 593.1,177.0 593.3,172.6 593.5,169.1 593.7,166.7 593.9,165.3 594.1,165.0 594.3,165.9 594.5,168.0 594.7,171.0 594.9,175.0 595.1,179.9 595.3,185.4 595.5,191.3 595.7,197.6 595.9,204.0 596.1,210.2 596.3,216.2 596.5,221.6 596.7,226.4 596.9,230.3 597.1,233.3 597.3,235.2 597.5,236.0 597.7,235.6 597.9,234.1 598.1,231.6 598.3,228.0 598.5,223.6 598.7,218.4 598.9,212.6 599.1,206.4 599.3,200.1 599.5,193.7 599.7,187.6 599.9,181.9 600.1,176.8 600.3,172.5 600.5,169.0 600.7,166.6 600.9,165.3 601.1,165.1 601.3,166.0 601.5,168.0 601.7,171.1 601.9,175.2 602.1,180.0 602.3,185.6 602.5,191.6 602.7,197.8 602.9,204.2 603.1,210.5 603.3,216.4 603.5,221.8 603.7,226.5 603.9,230.4 604.1,233.4 604.3,235.2 604.5,236.0 604.7,235.6 604.9,234.1 605.1,231.5 605.3,227.9 605.5,223.4 605.7,218.2 605.9,212.4 606.1,206.2 606.3,199.9 606.5,193.5 606.7,187.4 606.9,181.7 607.1,176.6 607.3,172.3 607.5,168.9 607.7,166.5 607.9,165.2 608.1,165.1 608.3,166.1 608.5,168.1 608.7,171.3 608.9,175.3 609.1,180.2 609.3,185.8 609.5,191.8 609.7,198.1 609.9,204.4 610.1,210.7 610.3,216.6 610.5,222.0 610.7,226.7 610.9,230.6 611.1,233.4 611.3,235.3 611.5,236.0 611.7,235.6 611.9,234.0 612.1,231.4 612.3,227.7 612.5,223.2 612.7,218.0 612.9,212.2 613.1,206.0 613.3,199.6 613.5,193.3 613.7,187.2 613.9,181.5 614.1,176.5 614.3,172.2 614.5,168.8 614.7,166.5 614.9,165.2 615.1,165.1 615.3,166.1 615.5,168.2 615.7,171.4 615.9,175.5 616.1,180.4 616.3,186.0 616.5,192.0 616.7,198.3 616.9,204.7 617.1,210.9 617.3,216.8 617.5,222.2 617.7,226.8 617.9,230.7 618.1,233.5 618.3,235.3 618.5,236.0 618.7,235.5 618.9,233.9 619.1,231.3 619.3,227.6 619.5,223.1 619.7,217.8 619.9,212.0 620.1,205.8 620.3,199.4 620.5,193.1 620.7,187.0 620.9,181.4 621.1,176.3 621.3,172.1 621.5,168.7 621.7,166.4 621.9,165.2 622.1,165.1 622.3,166.2 622.5,168.3 622.7,171.5 622.9,175.7 623.1,180.6 623.3,186.2 623.5,192.2 623.7,198.5 623.9,204.9 624.1,211.1 624.3,217.0 624.5,222.3 624.7,227.0 624.9,230.8 625.1,233.6 625.3,235.4 625.5,236.0 625.7,235.5 625.9,233.9 626.1,231.1 626.3,227.4 626.5,222.9 626.7,217.6 626.9,211.8 627.1,205.6 627.3,199.2 627.5,192.9 627.7,186.8 627.9,181.2 628.1,176.2 628.3,171.9 628.5,168.6 628.7,166.3 628.9,165.2 629.1,165.1 629.3,166.2 629.5,168.4 629.7,171.7 629.9,175.8 630.1,180.8 630.3,186.4 630.5,192.4 630.7,198.7 630.9,205.1 631.1,211.3 631.3,217.2 631.5,222.5 631.7,227.1 631.9,230.9 632.1,233.7 632.3,235.4 632.5,236.0 632.7,235.5 632.9,233.8 633.1,231.0 633.3,227.3 633.5,222.7 633.7,217.4 633.9,211.5 634.1,205.3 634.3,199.0 634.5,192.7 634.7,186.6 634.9,181.0 635.1,176.0 635.3,171.8 635.5,168.5 635.7,166.3 635.9,165.1 636.1,165.1 636.3,166.3 636.5,168.5 636.7,171.8 636.9,176.0 637.1,181.0 637.3,186.6 637.5,192.6 637.7,198.9 637.9,205.3 638.1,211.5 638.3,217.4 638.5,222.7 638.7,227.3 638.9,231.0 639.1,233.8 639.3,235.4 639.5,236.0 639.7,235.4 639.9,233.7 640.1,230.9 640.3,227.2 640.5,222.5 640.7,217.2 640.9,211.3 641.1,205.1 641.3,198.8 641.5,192.4 641.7,186.4 641.9,180.8 642.1,175.8 642.3,171.7 642.5,168.4 642.7,166.2 642.9,165.1 643.1,165.2 643.3,166.3 643.5,168.6 643.7,171.9 643.9,176.1 644.1,181.1 644.3,186.8 644.5,192.9 644.7,199.2 644.9,205.5 645.1,211.7 645.3,217.6 645.5,222.9 645.7,227.4 645.9,231.1 646.1,233.8 646.3,235.5 646.5,236.0 646.7,235.4 646.9,233.6 647.1,230.8 647.3,227.0 647.5,222.4 647.7,217.0 647.9,211.1" stroke="#4cc058" stroke-width="0.6" stroke-opacity="1.0" stroke-linejoin="round"/><polyline points="209.5,200.5 209.7,200.6 209.9,200.6 210.1,200.7 210.3,200.8 210.5,200.8 210.7,200.9 210.9,201.0 211.1,201.1 211.3,201.1 211.5,201.2 211.7,201.3 211.9,201.3 212.1,201.4 212.3,201.5 212.5,201.5 212.7,201.6 212.9,201.7 213.1,201.7 213.3,201.8 213.5,201.9 213.7,201.9 213.9,202.0 214.1,202.1 214.3,202.2 214.5,202.2 214.7,202.3 214.9,202.4 215.1,202.4 215.3,202.5 215.5,202.6 215.7,202.6 215.9,202.7 216.1,202.8 216.3,202.8 216.5,202.9 216.7,203.0 216.9,203.0 217.1,203.1 217.3,203.2 217.5,203.3 217.7,203.3 217.9,203.4 218.1,203.5 218.3,203.5 218.5,203.6 218.7,203.7 218.9,203.7 219.1,203.8 219.3,203.9 219.5,203.9 219.7,204.0 219.9,204.1 220.1,204.1 220.3,204.2 220.5,204.3 220.7,204.4 220.9,204.4 221.1,204.5 221.3,204.6 221.5,204.6 221.7,204.7 221.9,204.8 222.1,204.8 222.3,204.9 222.5,205.0 222.7,205.0 222.9,205.1 223.1,205.2 223.3,205.3 223.5,205.3 223.7,205.4 223.9,205.5 224.1,205.5 224.3,205.6 224.5,205.7 224.7,205.7 224.9,205.8 225.1,205.9 225.3,205.9 225.5,206.0 225.7,206.1 225.9,206.1 226.1,206.2 226.3,206.3 226.5,206.4 226.7,206.4 226.9,206.5 227.1,206.6 227.3,206.6 227.5,206.7 227.7,206.8 227.9,206.8 228.1,206.9 228.3,207.0 228.5,207.0 228.7,207.1 228.9,207.2 229.1,207.2 229.3,207.3 229.5,207.4 229.7,207.5 229.9,207.5 230.1,207.6 230.3,207.7 230.5,207.7 230.7,207.8 230.9,207.9 231.1,207.9 231.3,208.0 231.5,208.1 231.7,208.1 231.9,208.2 232.1,208.3 232.3,208.3 232.5,208.4 232.7,208.5 232.9,208.6 233.1,208.6 233.3,208.7 233.5,208.8 233.7,208.8 233.9,208.9 234.1,209.0 234.3,209.0 234.5,209.1 234.7,209.2 234.9,209.2 235.1,209.3 235.3,209.4 235.5,209.5 235.7,209.5 235.9,209.6 236.1,209.7 236.3,209.7 236.5,209.8 236.7,209.9 236.9,209.9 237.1,210.0 237.3,210.1 237.5,210.1 237.7,210.2 237.9,210.3 238.1,210.3 238.3,210.4 238.5,210.5 238.7,210.6 238.9,210.6 239.1,210.7 239.3,210.8 239.5,210.8 239.7,210.9 239.9,211.0 240.1,211.0 240.3,211.0 240.5,211.0 240.7,211.0 240.9,211.1 241.1,211.1 241.3,211.1 241.5,211.1 241.7,211.1 241.9,211.1 242.1,211.1 242.3,211.1 242.5,211.2 242.7,211.2 242.9,211.2 243.1,211.2 243.3,211.2 243.5,211.2 243.7,211.2 243.9,211.2 244.1,211.3 244.3,211.3 244.5,211.3 244.7,211.3 244.9,211.3 245.1,211.3 245.3,211.3 245.5,211.3 245.7,211.4 245.9,211.4 246.1,211.4 246.3,211.4 246.5,211.4 246.7,211.4 246.9,211.4 247.1,211.4 247.3,211.5 247.5,211.5 247.7,211.5 247.9,211.5 248.1,211.4 248.3,211.2 248.5,211.1 248.7,210.9 248.9,210.7 249.1,210.5 249.3,210.3 249.5,210.2 249.7,210.0 249.9,209.8 250.1,209.6 250.3,209.4 250.5,209.3 250.7,209.1 250.9,208.9 251.1,208.7 251.3,208.5 251.5,208.4 251.7,208.2 251.9,208.0 252.1,207.8 252.3,207.6 252.5,207.5 252.7,207.3 252.9,207.1 253.1,206.9 253.3,206.7 253.5,206.6 253.7,206.4 253.9,206.2 254.1,206.0 254.3,205.8 254.5,205.7 254.7,205.5 254.9,205.3 255.1,205.1 255.3,204.9 255.5,204.8 255.7,204.6 255.9,204.4 256.1,204.2 256.3,204.0 256.5,203.9 256.7,203.7 256.9,203.5 257.1,203.3 257.3,203.1 257.5,203.0 257.7,202.8 257.9,202.6 258.1,202.3 258.3,202.0 258.5,201.7 258.7,201.4 258.9,201.1 259.1,200.7 259.3,200.4 259.5,200.1 259.7,199.8 259.9,199.5 260.1,199.1 260.3,198.8 260.5,198.5 260.7,198.2 260.9,197.9 261.1,197.5 261.3,197.2 261.5,196.9 261.7,196.6 261.9,196.3 262.1,195.9 262.3,195.6 262.5,195.3 262.7,195.1 262.9,194.8 263.1,194.5 263.3,194.3 263.5,194.1 263.7,193.9 263.9,193.7 264.1,193.5 264.3,193.4 264.5,193.2 264.7,193.1 264.9,192.9 265.1,192.8 265.3,192.7 265.5,192.7 265.7,192.6 265.9,192.5 266.1,192.5 266.3,192.5 266.5,192.4 266.7,192.4 266.9,192.4 267.1,192.4 267.3,192.5 267.5,192.5 267.7,192.5 267.9,192.6 268.1,192.7 268.3,193.0 268.5,193.2 268.7,193.4 268.9,193.7 269.1,193.9 269.3,194.1 269.5,194.3 269.7,194.5 269.9,194.7 270.1,194.9 270.3,195.1 270.5,195.2 270.7,195.4 270.9,195.5 271.1,195.6 271.3,195.7 271.5,195.8 271.7,195.9 271.9,196.0 272.1,196.0 272.3,196.0 272.5,196.1 272.7,196.0 272.9,196.0 273.1,196.0 273.3,195.9 273.5,195.8 273.7,195.8 273.9,195.6 274.1,195.5 274.3,195.4 274.5,195.2 274.7,195.0 274.9,194.8 275.1,194.6 275.3,194.4 275.5,194.1 275.7,193.9 275.9,193.6 276.1,193.3 276.3,193.0 276.5,192.7 276.7,192.4 276.9,192.0 277.1,191.7 277.3,191.3 277.5,191.0 277.7,190.6 277.9,190.2 278.1,189.9 278.3,189.5 278.5,189.1 278.7,188.7 278.9,188.4 279.1,188.0 279.3,187.6 279.5,187.2 279.7,186.9 279.9,186.5 280.1,186.2 280.3,185.9 280.5,185.5 280.7,185.2 280.9,184.9 281.1,184.7 281.3,184.4 281.5,184.1 281.7,183.9 281.9,183.7 282.1,183.5 282.3,183.3 282.5,183.1 282.7,183.0 282.9,182.9 283.1,182.8 283.3,182.7 283.5,182.6 283.7,182.5 283.9,182.5 284.1,182.5 284.3,182.5 284.5,182.6 284.7,182.6 284.9,182.7 285.1,182.8 285.3,182.9 285.5,183.0 285.7,183.2 285.9,183.4 286.1,183.6 286.3,183.8 286.5,184.1 286.7,184.3 286.9,184.6 287.1,184.9 287.3,185.3 287.5,185.6 287.7,186.0 287.9,186.4 288.1,186.8 288.3,187.3 288.5,187.7 288.7,188.2 288.9,188.7 289.1,189.2 289.3,189.8 289.5,190.3 289.7,190.9 289.9,191.5 290.1,192.1 290.3,192.7 290.5,193.3 290.7,194.0 290.9,194.6 291.1,195.3 291.3,196.0 291.5,196.7 291.7,197.4 291.9,198.1 292.1,198.8 292.3,199.5 292.5,200.3 292.7,201.0 292.9,201.8 293.1,202.5 293.3,203.2 293.5,204.0 293.7,204.7 293.9,205.5 294.1,206.2 294.3,206.9 294.5,207.7 294.7,208.4 294.9,209.1 295.1,209.8 295.3,210.4 295.5,211.1 295.7,211.8 295.9,212.4 296.1,213.0 296.3,213.6 296.5,214.2 296.7,214.7 296.9,215.3 297.1,215.8 297.3,216.3 297.5,216.7 297.7,217.1 297.9,217.5 298.1,217.9 298.3,218.2 298.5,218.5 298.7,218.8 298.9,219.0 299.1,219.2 299.3,219.4 299.5,219.5 299.7,219.5 299.9,219.6 300.1,219.6 300.3,219.5 300.5,219.4 300.7,219.3 300.9,219.2 301.1,218.9 301.3,218.7 301.5,218.4 301.7,218.1 301.9,217.7 302.1,217.3 302.3,216.8 302.5,216.3 302.7,215.8 302.9,215.2 303.1,214.6 303.3,213.9 303.5,213.3 303.7,212.5 303.9,211.8 304.1,211.0 304.3,210.2 304.5,209.3 304.7,208.5 304.9,207.6 305.1,206.6 305.3,205.7 305.5,204.7 305.7,203.8 305.9,202.8 306.1,201.8 306.3,200.8 306.5,199.7 306.7,198.7 306.9,197.7 307.1,196.7 307.3,195.6 307.5,194.6 307.7,193.6 307.9,192.6 308.1,191.6 308.3,190.7 308.5,189.7 308.7,188.8 308.9,187.9 309.1,187.1 309.3,186.3 309.5,185.5 309.7,184.7 309.9,184.0 310.1,183.3 310.3,182.7 310.5,182.1 310.7,181.6 310.9,181.1 311.1,180.7 311.3,180.4 311.5,180.1 311.7,179.8 311.9,179.6 312.1,179.5 312.3,179.5 312.5,179.5 312.7,179.6 312.9,179.7 313.1,179.9 313.3,180.2 313.5,180.5 313.7,180.9 313.9,181.4 314.1,181.9 314.3,182.5 314.5,183.2 314.7,183.9 314.9,184.7 315.1,185.6 315.3,186.5 315.5,187.4 315.7,188.4 315.9,189.4 316.1,190.5 316.3,191.7 316.5,192.8 316.7,194.0 316.9,195.3 317.1,196.5 317.3,197.8 317.5,199.1 317.7,200.4 317.9,201.7 318.1,203.0 318.3,204.3 318.5,205.6 318.7,206.9 318.9,208.2 319.1,209.5 319.3,210.7 319.5,211.9 319.7,213.1 319.9,214.2 320.1,215.3 320.3,216.3 320.5,217.3 320.7,218.2 320.9,219.1 321.1,219.8 321.3,220.6 321.5,221.2 321.7,221.8 321.9,222.2 322.1,222.6 322.3,222.9 322.5,223.2 322.7,223.3 322.9,223.3 323.1,223.3 323.3,223.1 323.5,222.9 323.7,222.6 323.9,222.1 324.1,221.6 324.3,221.0 324.5,220.3 324.7,219.5 324.9,218.6 325.1,217.7 325.3,216.7 325.5,215.5 325.7,214.4 325.9,213.1 326.1,211.8 326.3,210.4 326.5,209.0 326.7,207.6 326.9,206.1 327.1,204.5 327.3,203.0 327.5,201.4 327.7,199.8 327.9,198.2 328.1,196.7 328.3,195.1 328.5,193.5 328.7,192.0 328.9,190.5 329.1,189.0 329.3,187.6 329.5,186.2 329.7,185.0 329.9,183.7 330.1,182.6 330.3,181.5 330.5,180.5 330.7,179.6 330.9,178.8 331.1,178.1 331.3,177.5 331.5,177.1 331.7,176.7 331.9,176.5 332.1,176.3 332.3,176.3 332.5,176.5 332.7,176.7 332.9,177.1 333.1,177.5 333.3,178.2 333.5,178.9 333.7,179.7 333.9,180.7 334.1,181.7 334.3,182.9 334.5,184.1 334.7,185.5 334.9,186.9 335.1,188.4 335.3,190.0 335.5,191.7 335.7,193.4 335.9,195.1 336.1,196.9 336.3,198.7 336.5,200.5 336.7,202.3 336.9,204.1 337.1,206.0 337.3,207.7 337.5,209.5 337.7,211.2 337.9,212.8 338.1,214.4 338.3,215.9 338.5,217.4 338.7,218.7 338.9,219.9 339.1,221.1 339.3,222.1 339.5,223.0 339.7,223.7 339.9,224.3 340.1,224.8 340.3,225.2 340.5,225.3 340.7,225.4 340.9,225.3 341.1,225.0 341.3,224.6 341.5,224.1 341.7,223.4 341.9,222.5 342.1,221.6 342.3,220.5 342.5,219.2 342.7,217.9 342.9,216.4 343.1,214.8 343.3,213.2 343.5,211.4 343.7,209.6 343.9,207.7 344.1,205.8 344.3,203.8 344.5,201.8 344.7,199.8 344.9,197.8 345.1,195.8 345.3,193.8 345.5,191.9 345.7,190.0 345.9,188.2 346.1,186.5 346.3,184.8 346.5,183.3 346.7,181.9 346.9,180.6 347.1,179.4 347.3,178.3 347.5,177.5 347.7,176.7 347.9,176.2 348.1,175.8 348.3,175.5 348.5,175.5 348.7,175.6 348.9,175.9 349.1,176.3 349.3,176.9 349.5,177.7 349.7,178.7 349.9,179.8 350.1,181.1 350.3,182.5 350.5,184.0 350.7,185.7 350.9,187.5 351.1,189.4 351.3,191.3 351.5,193.3 351.7,195.4 351.9,197.6 352.1,199.7 352.3,201.9 352.5,204.1 352.7,206.2 352.9,208.3 353.1,210.4 353.3,212.4 353.5,214.3 353.7,216.1 353.9,217.8 354.1,219.3 354.3,220.7 354.5,222.0 354.7,223.1 354.9,224.0 355.1,224.8 355.3,225.4 355.5,225.7 355.7,225.9 355.9,225.9 356.1,225.6 356.3,225.2 356.5,224.6 356.7,223.7 356.9,222.7 357.1,221.5 357.3,220.1 357.5,218.6 357.7,216.9 357.9,215.1 358.1,213.1 358.3,211.1 358.5,208.9 358.7,206.7 358.9,204.4 359.1,202.1 359.3,199.7 359.5,197.4 359.7,195.0 359.9,192.7 360.1,190.5 360.3,188.3 360.5,186.3 360.7,184.3 360.9,182.5 361.1,180.9 361.3,179.4 361.5,178.1 361.7,177.0 361.9,176.0 362.1,175.3 362.3,174.8 362.5,174.6 362.7,174.5 362.9,174.7 363.1,175.2 363.3,175.8 363.5,176.7 363.7,177.8 363.9,179.1 364.1,180.6 364.3,182.3 364.5,184.2 364.7,186.2 364.9,188.4 365.1,190.6 365.3,193.0 365.5,195.5 365.7,198.0 365.9,200.5 366.1,203.1 366.3,205.6 366.5,208.1 366.7,210.5 366.9,212.8 367.1,215.1 367.3,217.2 367.5,219.1 367.7,220.9 367.9,222.5 368.1,223.8 368.3,225.0 368.5,225.9 368.7,226.6 368.9,227.0 369.1,227.1 369.3,227.0 369.5,226.7 369.7,226.0 369.9,225.1 370.1,224.0 370.3,222.6 370.5,221.0 370.7,219.2 370.9,217.2 371.1,215.0 371.3,212.7 371.5,210.2 371.7,207.6 371.9,205.0 372.1,202.3 372.3,199.5 372.5,196.8 372.7,194.1 372.9,191.4 373.1,188.9 373.3,186.4 373.5,184.1 373.7,182.0 373.9,180.0 374.1,178.3 374.3,176.7 374.5,175.5 374.7,174.5 374.9,173.8 375.1,173.3 375.3,173.2 375.5,173.4 375.7,173.8 375.9,174.5 376.1,175.6 376.3,176.9 376.5,178.4 376.7,180.3 376.9,182.3 377.1,184.6 377.3,187.0 377.5,189.6 377.7,192.3 377.9,195.2 378.1,198.1 378.3,201.0 378.5,203.9 378.7,206.8 378.9,209.7 379.1,212.4 379.3,215.0 379.5,217.5 379.7,219.8 379.9,221.8 380.1,223.6 380.3,225.2 380.5,226.4 380.7,227.4 380.9,228.0 381.1,228.4 381.3,228.4 381.5,228.0 381.7,227.4 381.9,226.4 382.1,225.1 382.3,223.5 382.5,221.7 382.7,219.5 382.9,217.2 383.1,214.6 383.3,211.9 383.5,209.0 383.7,206.0 383.9,202.9 384.1,199.8 384.3,196.6 384.5,193.6 384.7,190.6 384.9,187.7 385.1,184.9 385.3,182.4 385.5,180.1 385.7,178.0 385.9,176.2 386.1,174.7 386.3,173.5 386.5,172.7 386.7,172.2 386.9,172.1 387.1,172.3 387.3,172.9 387.5,173.9 387.7,175.2 387.9,176.8 388.1,178.8 388.3,181.0 388.5,183.5 388.7,186.2 388.9,189.1 389.1,192.2 389.3,195.4 389.5,198.6 389.7,201.9 389.9,205.2 390.1,208.4 390.3,211.6 390.5,214.6 390.7,217.4 390.9,219.9 391.1,222.3 391.3,224.3 391.5,226.0 391.7,227.4 391.9,228.4 392.1,229.0 392.3,229.3 392.5,229.1 392.7,228.6 392.9,227.6 393.1,226.3 393.3,224.7 393.5,222.6 393.7,220.3 393.9,217.7 394.1,214.8 394.3,211.8 394.5,208.6 394.7,205.2 394.9,201.8 395.1,198.3 395.3,194.9 395.5,191.6 395.7,188.3 395.9,185.3 396.1,182.4 396.3,179.9 396.5,177.6 396.7,175.6 396.9,174.0 397.1,172.8 397.3,172.0 397.5,171.6 397.7,171.6 397.9,172.0 398.1,172.9 398.3,174.2 398.5,175.9 398.7,177.9 398.9,180.3 399.1,183.0 399.3,185.9 399.5,189.1 399.7,192.5 399.9,195.9 400.1,199.5 400.3,203.1 400.5,206.6 400.7,210.1 400.9,213.4 401.1,216.5 401.3,219.4 401.5,221.9 401.7,224.2 401.9,226.1 402.1,227.6 402.3,228.7 402.5,229.3 402.7,229.5 402.9,229.2 403.1,228.5 403.3,227.4 403.5,225.8 403.7,223.8 403.9,221.4 404.1,218.8 404.3,215.8 404.5,212.5 404.7,209.1 404.9,205.5 405.1,201.9 405.3,198.2 405.5,194.5 405.7,191.0 405.9,187.6 406.1,184.4 406.3,181.4 406.5,178.8 406.7,176.5 406.9,174.6 407.1,173.2 407.3,172.1 407.5,171.6 407.7,171.5 407.9,171.9 408.1,172.8 408.3,174.2 408.5,176.0 408.7,178.2 408.9,180.8 409.1,183.7 409.3,186.9 409.5,190.4 409.7,194.0 409.9,197.8 410.1,201.6 410.3,205.3 410.5,209.0 410.7,212.6 410.9,215.9 411.1,219.0 411.3,221.8 411.5,224.2 411.7,226.2 411.9,227.7 412.1,228.8 412.3,229.4 412.5,229.5 412.7,229.0 412.9,228.1 413.1,226.7 413.3,224.8 413.5,222.4 413.7,219.7 413.9,216.6 414.1,213.3 414.3,209.7 414.5,205.9 414.7,202.0 414.9,198.1 415.1,194.3 415.3,190.5 415.5,186.9 415.7,183.6 415.9,180.6 416.1,177.9 416.3,175.7 416.5,173.9 416.7,172.6 416.9,171.8 417.1,171.5 417.3,171.8 417.5,172.6 417.7,173.9 417.9,175.7 418.1,178.0 418.3,180.8 418.5,183.9 418.7,187.3 418.9,190.9 419.1,194.8 419.3,198.7 419.5,202.7 419.7,206.7 419.9,210.6 420.1,214.2 420.3,217.6 420.5,220.7 420.7,223.4 420.9,225.6 421.1,227.4 421.3,228.6 421.5,229.3 421.7,229.5 421.9,229.1 422.1,228.1 422.3,226.5 422.5,224.5 422.7,222.0 422.9,219.0 423.1,215.7 423.3,212.1 423.5,208.2 423.7,204.2 423.9,200.1 424.1,196.0 424.3,192.0 424.5,188.2 424.7,184.6 424.9,181.3 425.1,178.4 425.3,176.0 425.5,174.0 425.7,172.6 425.9,171.8 426.1,171.5 426.3,171.8 426.5,172.8 426.7,174.3 426.9,176.3 427.1,178.8 427.3,181.8 427.5,185.2 427.7,188.9 427.9,192.9 428.1,197.0 428.3,201.2 428.5,205.4 428.7,209.5 428.9,213.4 429.1,217.0 429.3,220.3 429.5,223.2 429.7,225.5 429.9,227.4 430.1,228.7 430.3,229.4 430.5,229.5 430.7,228.9 430.9,227.7 431.1,226.0 431.3,223.7 431.5,220.9 431.7,217.6 431.9,214.0 432.1,210.0 432.3,205.9 432.5,201.6 432.7,197.3 432.9,193.1 433.1,189.0 433.3,185.2 433.5,181.7 433.7,178.6 433.9,176.0 434.1,174.0 434.3,172.5 434.5,171.7 434.7,171.5 434.9,171.9 435.1,173.0 435.3,174.7 435.5,177.0 435.7,179.9 435.9,183.2 436.1,186.9 436.3,190.9 436.5,195.1 436.7,199.5 436.9,203.9 437.1,208.3 437.3,212.4 437.5,216.3 437.7,219.9 437.9,223.0 438.1,225.6 438.3,227.6 438.5,229.0 438.7,229.7 438.9,229.7 439.1,229.1 439.3,227.8 439.5,225.8 439.7,223.3 439.9,220.2 440.1,216.6 440.3,212.6 440.5,208.4 440.7,203.9 440.9,199.3 441.1,194.8 441.3,190.4 441.5,186.2 441.7,182.4 441.9,179.0 442.1,176.1 442.3,173.7 442.5,172.1 442.7,171.1 442.9,170.8 443.1,171.2 443.3,172.4 443.5,174.3 443.7,176.8 443.9,179.8 444.1,183.5 444.3,187.5 444.5,191.9 444.7,196.5 444.9,201.2 445.1,205.9 445.3,210.5 445.5,214.8 445.7,218.8 445.9,222.4 446.1,225.4 446.3,227.8 446.5,229.5 446.7,230.5 446.9,230.7 447.1,230.2 447.3,228.9 447.5,226.9 447.7,224.2 447.9,220.9 448.1,217.0 448.3,212.8 448.5,208.2 448.7,203.3 448.9,198.4 449.1,193.6 449.3,188.9 449.5,184.5 449.7,180.4 449.9,176.9 450.1,174.0 450.3,171.8 450.5,170.4 450.7,169.7 450.9,169.8 451.1,170.7 451.3,172.5 451.5,174.9 451.7,178.1 451.9,181.9 452.1,186.1 452.3,190.8 452.5,195.7 452.7,200.8 452.9,205.9 453.1,210.9 453.3,215.6 453.5,219.9 453.7,223.7 453.9,226.9 454.1,229.3 454.3,231.0 454.5,231.9 454.7,231.9 454.9,231.1 455.1,229.4 455.3,226.9 455.5,223.7 455.7,219.9 455.9,215.5 456.1,210.6 456.3,205.5 456.5,200.2 456.7,194.9 456.9,189.8 457.1,184.9 457.3,180.4 457.5,176.5 457.7,173.3 457.9,170.8 458.1,169.1 458.3,168.3 458.5,168.5 458.7,169.5 458.9,171.4 459.1,174.1 459.3,177.6 459.5,181.8 459.7,186.5 459.9,191.6 460.1,197.0 460.3,202.6 460.5,208.0 460.7,213.3 460.9,218.2 461.1,222.6 461.3,226.4 461.5,229.5 461.7,231.7 461.9,233.0 462.1,233.4 462.3,232.8 462.5,231.3 462.7,228.8 462.9,225.5 463.1,221.5 463.3,216.8 463.5,211.7 463.7,206.2 463.9,200.5 464.1,194.8 464.3,189.2 464.5,184.0 464.7,179.2 464.9,175.1 465.1,171.7 465.3,169.2 465.5,167.6 465.7,167.0 465.9,167.4 466.1,168.8 466.3,171.1 466.5,174.4 466.7,178.5 466.9,183.2 467.1,188.5 467.3,194.2 467.5,200.1 467.7,206.0 467.9,211.8 468.1,217.2 468.3,222.1 468.5,226.4 468.7,229.9 468.9,232.5 469.1,234.1 469.3,234.6 469.5,234.1 469.7,232.6 469.9,230.0 470.1,226.5 470.3,222.2 470.5,217.2 470.7,211.6 470.9,205.7 471.1,199.6 471.3,193.5 471.5,187.7 471.7,182.2 471.9,177.3 472.1,173.1 472.3,169.8 472.5,167.4 472.7,166.1 472.9,165.9 473.1,166.9 473.3,168.9 473.5,171.9 473.7,175.8 473.9,180.6 474.1,186.0 474.3,191.9 474.5,198.0 474.7,204.3 474.9,210.4 475.1,216.3 475.3,221.6 475.5,226.2 475.7,230.1 475.9,233.0 476.1,234.8 476.3,235.5 476.5,235.1 476.7,233.6 476.9,231.0 477.1,227.5 477.3,223.0 477.5,217.9 477.7,212.1 477.9,206.0 478.1,199.7 478.3,193.4 478.5,187.4 478.7,181.7 478.9,176.7 479.1,172.4 479.3,169.0 479.5,166.7 479.7,165.4 479.9,165.3 480.1,166.2 480.3,168.3 480.5,171.5 480.7,175.5 480.9,180.4 481.1,185.9 481.3,191.9 481.5,198.2 481.7,204.6 481.9,210.8 482.1,216.7 482.3,222.1 482.5,226.8 482.7,230.6 482.9,233.5 483.1,235.3 483.3,236.0 483.5,235.5 483.7,233.9 483.9,231.3 484.1,227.6 484.3,223.1 484.5,217.8 484.7,212.0 484.9,205.8 485.1,199.5 485.3,193.2 485.5,187.1 485.7,181.4 485.9,176.4 486.1,172.1 486.3,168.8 486.5,166.4 486.7,165.2 486.9,165.1 487.1,166.1 487.3,168.3 487.5,171.5 487.7,175.6 487.9,180.5 488.1,186.1 488.3,192.1 488.5,198.4 488.7,204.8 488.9,211.0 489.1,216.9 489.3,222.3 489.5,226.9 489.7,230.8 489.9,233.6 490.1,235.4 490.3,236.0 490.5,235.5 490.7,233.9 490.9,231.2 491.1,227.5 491.3,222.9 491.5,217.6 491.7,211.8 491.9,205.6 492.1,199.3 492.3,192.9 492.5,186.9 492.7,181.2 492.9,176.2 493.1,172.0 493.3,168.7 493.5,166.4 493.7,165.2 493.9,165.1 494.1,166.2 494.3,168.4 494.5,171.6 494.7,175.8 494.9,180.7 495.1,186.3 495.3,192.4 495.5,198.7 495.7,205.0 495.9,211.3 496.1,217.1 496.3,222.5 496.5,227.1 496.7,230.9 496.9,233.7 497.1,235.4 497.3,236.0 497.5,235.5 497.7,233.8 497.9,231.1 498.1,227.3 498.3,222.8 498.5,217.4 498.7,211.6 498.9,205.4 499.1,199.0 499.3,192.7 499.5,186.7 499.7,181.0 499.9,176.0 500.1,171.8 500.3,168.6 500.5,166.3 500.7,165.1 500.9,165.1 501.1,166.3 501.3,168.5 501.5,171.8 501.7,175.9 501.9,180.9 502.1,186.5 502.3,192.6 502.5,198.9 502.7,205.3 502.9,211.5 503.1,217.3 503.3,222.6 503.5,227.2 503.7,231.0 503.9,233.7 504.1,235.4 504.3,236.0 504.5,235.4 504.7,233.7 504.9,230.9 505.1,227.2 505.3,222.6 505.5,217.3 505.7,211.4 505.9,205.2 506.1,198.8 506.3,192.5 506.5,186.4 506.7,180.8 506.9,175.9 507.1,171.7 507.3,168.5 507.5,166.2 507.7,165.1 507.9,165.2 508.1,166.3 508.3,168.6 508.5,171.9 508.7,176.1 508.9,181.1 509.1,186.7 509.3,192.8 509.5,199.1 509.7,205.5 509.9,211.7 510.1,217.5 510.3,222.8 510.5,227.4 510.7,231.1 510.9,233.8 511.1,235.5 511.3,236.0 511.5,235.4 511.7,233.6 511.9,230.8 512.1,227.0 512.3,222.4 512.5,217.1 512.7,211.2 512.9,205.0 513.1,198.6 513.3,192.3 513.5,186.2 513.7,180.7 513.9,175.7 514.1,171.6 514.3,168.4 514.5,166.2 514.7,165.1 514.9,165.2 515.1,166.4 515.3,168.7 515.5,172.0 515.7,176.3 515.9,181.3 516.1,186.9 516.3,193.0 516.5,199.3 516.7,205.7 516.9,211.9 517.1,217.7 517.3,223.0 517.5,227.5 517.7,231.2 517.9,233.9 518.1,235.5 518.3,236.0 518.5,235.3 518.7,233.6 518.9,230.7 519.1,226.9 519.3,222.2 519.5,216.9 519.7,211.0 519.9,204.7 520.1,198.4 520.3,192.1 520.5,186.0 520.7,180.5 520.9,175.6 521.1,171.4 521.3,168.3 521.5,166.1 521.7,165.1 521.9,165.2 522.1,166.4 522.3,168.8 522.5,172.1 522.7,176.4 522.9,181.5 523.1,187.1 523.3,193.2 523.5,199.6 523.7,205.9 523.9,212.1 524.1,217.9 524.3,223.2 524.5,227.7 524.7,231.3 524.9,234.0 525.1,235.5 525.3,236.0 525.5,235.3 525.7,233.5 525.9,230.6 526.1,226.7 526.3,222.0 526.5,216.7 526.7,210.8 526.9,204.5 527.1,198.1 527.3,191.8 527.5,185.8 527.7,180.3 527.9,175.4 528.1,171.3 528.3,168.2 528.5,166.1 528.7,165.1 528.9,165.2 529.1,166.5 529.3,168.9 529.5,172.3 529.7,176.6 529.9,181.7 530.1,187.3 530.3,193.4 530.5,199.8 530.7,206.1 530.9,212.3 531.1,218.1 531.3,223.3 531.5,227.8 531.7,231.4 531.9,234.0 532.1,235.6 532.3,236.0 532.5,235.2 532.7,233.4 532.9,230.5 533.1,226.6 533.3,221.9 533.5,216.5 533.7,210.5 533.9,204.3 534.1,197.9 534.3,191.6 534.5,185.6 534.7,180.1 534.9,175.2 535.1,171.2 535.3,168.1 535.5,166.0 535.7,165.1 535.9,165.3 536.1,166.6 536.3,169.0 536.5,172.4 536.7,176.8 536.9,181.9 537.1,187.6 537.3,193.7 537.5,200.0 537.7,206.4 537.9,212.5 538.1,218.3 538.3,223.5 538.5,228.0 538.7,231.5 538.9,234.1 539.1,235.6 539.3,236.0 539.5,235.2 539.7,233.3 539.9,230.4 540.1,226.4 540.3,221.7 540.5,216.3 540.7,210.3 540.9,204.1 541.1,197.7 541.3,191.4 541.5,185.4 541.7,179.9 541.9,175.1 542.1,171.1 542.3,168.0 542.5,166.0 542.7,165.1 542.9,165.3 543.1,166.6 543.3,169.1 543.5,172.6 543.7,176.9 543.9,182.0 544.1,187.8 544.3,193.9 544.5,200.2 544.7,206.6 544.9,212.7 545.1,218.5 545.3,223.7 545.5,228.1 545.7,231.6 545.9,234.2 546.1,235.6 546.3,236.0 546.5,235.2 546.7,233.2 546.9,230.2 547.1,226.3 547.3,221.5 547.5,216.1 547.7,210.1 547.9,203.8 548.1,197.5 548.3,191.2 548.5,185.2 548.7,179.7 548.9,174.9 549.1,170.9 549.3,167.9 549.5,165.9 549.7,165.0 549.9,165.3 550.1,166.7 550.3,169.2 550.5,172.7 550.7,177.1 550.9,182.2 551.1,188.0 551.3,194.1 551.5,200.5 551.7,206.8 551.9,212.9 552.1,218.7 552.3,223.8 552.5,228.2 552.7,231.8 552.9,234.3 553.1,235.7 553.3,236.0 553.5,235.1 553.7,233.1 553.9,230.1 554.1,226.1 554.3,221.3 554.5,215.9 554.7,209.9 554.9,203.6 555.1,197.3 555.3,191.0 555.5,185.0 555.7,179.6 555.9,174.8 556.1,170.8 556.3,167.8 556.5,165.9 556.7,165.0 556.9,165.3 557.1,166.8 557.3,169.3 557.5,172.8 557.7,177.3 557.9,182.4 558.1,188.2 558.3,194.3 558.5,200.7 558.7,207.0 558.9,213.1 559.1,218.9 559.3,224.0 559.5,228.4 559.7,231.9 559.9,234.3 560.1,235.7 560.3,236.0 560.5,235.1 560.7,233.0 560.9,230.0 561.1,226.0 561.3,221.2 561.5,215.7 561.7,209.7 561.9,203.4 562.1,197.0 562.3,190.8 562.5,184.8 562.7,179.4 562.9,174.6 563.1,170.7 563.3,167.7 563.5,165.8 563.7,165.0 563.9,165.4 564.1,166.8 564.3,169.4 564.5,173.0 564.7,177.4 564.9,182.6 565.1,188.4 565.3,194.5 565.5,200.9 565.7,207.2 565.9,213.4 566.1,219.1 566.3,224.2 566.5,228.5 566.7,232.0 566.9,234.4 567.1,235.7 567.3,235.9 567.5,235.0 567.7,233.0 567.9,229.9 568.1,225.8 568.3,221.0 568.5,215.5 568.7,209.5 568.9,203.2 569.1,196.8 569.3,190.6 569.5,184.6 569.7,179.2 569.9,174.5 570.1,170.6 570.3,167.6 570.5,165.8 570.7,165.0 570.9,165.4 571.1,166.9 571.3,169.5 571.5,173.1 571.7,177.6 571.9,182.8 572.1,188.6 572.3,194.8 572.5,201.1 572.7,207.5 572.9,213.6 573.1,219.3 573.3,224.3 573.5,228.7 573.7,232.1 573.9,234.5 574.1,235.8 574.3,235.9 574.5,235.0 574.7,232.9 574.9,229.7 575.1,225.7 575.3,220.8 575.5,215.3 575.7,209.2 575.9,203.0 576.1,196.6 576.3,190.3 576.5,184.4 576.7,179.0 576.9,174.3 577.1,170.5 577.3,167.6 577.5,165.7 577.7,165.0 577.9,165.4 578.1,167.0 578.3,169.6 578.5,173.3 578.7,177.8 578.9,183.0 579.1,188.8 579.3,195.0 579.5,201.3 579.7,207.7 579.9,213.8 580.1,219.4 580.3,224.5 580.5,228.8 580.7,232.2 580.9,234.5 581.1,235.8 581.3,235.9 581.5,234.9 581.7,232.8 581.9,229.6 582.1,225.5 582.3,220.6 582.5,215.1 582.7,209.0 582.9,202.7 583.1,196.4 583.3,190.1 583.5,184.2 583.7,178.9 583.9,174.2 584.1,170.3 584.3,167.5 584.5,165.7 584.7,165.0 584.9,165.5 585.1,167.1 585.3,169.7 585.5,173.4 585.7,177.9 585.9,183.2 586.1,189.0 586.3,195.2 586.5,201.6 586.7,207.9 586.9,214.0 587.1,219.6 587.3,224.7 587.5,228.9 587.7,232.3 587.9,234.6 588.1,235.8 588.3,235.9 588.5,234.8 588.7,232.7 588.9,229.5 589.1,225.4 589.3,220.4 589.5,214.8 589.7,208.8 589.9,202.5 590.1,196.1 590.3,189.9 590.5,184.0 590.7,178.7 590.9,174.0 591.1,170.2 591.3,167.4 591.5,165.6 591.7,165.0 591.9,165.5 592.1,167.1 592.3,169.9 592.5,173.5 592.7,178.1 592.9,183.4 593.1,189.2 593.3,195.4 593.5,201.8 593.7,208.1 593.9,214.2 594.1,219.8 594.3,224.8 594.5,229.1 594.7,232.4 594.9,234.7 595.1,235.8 595.3,235.9 595.5,234.8 595.7,232.6 595.9,229.4 596.1,225.2 596.3,220.2 596.5,214.6 596.7,208.6 596.9,202.3 597.1,195.9 597.3,189.7 597.5,183.8 597.7,178.5 597.9,173.9 598.1,170.1 598.3,167.3 598.5,165.6 598.7,165.0 598.9,165.5 599.1,167.2 599.3,170.0 599.5,173.7 599.7,178.3 599.9,183.6 600.1,189.4 600.3,195.6 600.5,202.0 600.7,208.3 600.9,214.4 601.1,220.0 601.3,225.0 601.5,229.2 601.7,232.5 601.9,234.7 602.1,235.9 602.3,235.9 602.5,234.7 602.7,232.5 602.9,229.2 603.1,225.0 603.3,220.0 603.5,214.4 603.7,208.4 603.9,202.1 604.1,195.7 604.3,189.5 604.5,183.6 604.7,178.3 604.9,173.7 605.1,170.0 605.3,167.2 605.5,165.6 605.7,165.0 605.9,165.6 606.1,167.3 606.3,170.1 606.5,173.8 606.7,178.5 606.9,183.8 607.1,189.7 607.3,195.9 607.5,202.2 607.7,208.5 607.9,214.6 608.1,220.2 608.3,225.2 608.5,229.3 608.7,232.6 608.9,234.8 609.1,235.9 609.3,235.8 609.5,234.7 609.7,232.4 609.9,229.1 610.1,224.9 610.3,219.9 610.5,214.2 610.7,208.2 610.9,201.8 611.1,195.5 611.3,189.3 611.5,183.4 611.7,178.2 611.9,173.6 612.1,169.9 612.3,167.2 612.5,165.5 612.7,165.0 612.9,165.6 613.1,167.4 613.3,170.2 613.5,174.0 613.7,178.6 613.9,184.0 614.1,189.9 614.3,196.1 614.5,202.5 614.7,208.8 614.9,214.8 615.1,220.4 615.3,225.3 615.5,229.5 615.7,232.7 615.9,234.8 616.1,235.9 616.3,235.8 616.5,234.6 616.7,232.3 616.9,229.0 617.1,224.7 617.3,219.7 617.5,214.0 617.7,207.9 617.9,201.6 618.1,195.3 618.3,189.1 618.5,183.2 618.7,178.0 618.9,173.4 619.1,169.8 619.3,167.1 619.5,165.5 619.7,165.0 619.9,165.7 620.1,167.5 620.3,170.3 620.5,174.1 620.7,178.8 620.9,184.2 621.1,190.1 621.3,196.3 621.5,202.7 621.7,209.0 621.9,215.0 622.1,220.6 622.3,225.5 622.5,229.6 622.7,232.8 622.9,234.9 623.1,235.9 623.3,235.8 623.5,234.5 623.7,232.2 623.9,228.8 624.1,224.5 624.3,219.5 624.5,213.8 624.7,207.7 624.9,201.4 625.1,195.0 625.3,188.9 625.5,183.1 625.7,177.8 625.9,173.3 626.1,169.7 626.3,167.0 626.5,165.4 626.7,165.0 626.9,165.7 627.1,167.5 627.3,170.4 627.5,174.3 627.7,179.0 627.9,184.4 628.1,190.3 628.3,196.5 628.5,202.9 628.7,209.2 628.9,215.2 629.1,220.7 629.3,225.6 629.5,229.7 629.7,232.8 629.9,234.9 630.1,235.9 630.3,235.8 630.5,234.5 630.7,232.1 630.9,228.7 631.1,224.4 631.3,219.3 631.5,213.6 631.7,207.5 631.9,201.2 632.1,194.8 632.3,188.6 632.5,182.9 632.7,177.6 632.9,173.1 633.1,169.5 633.3,166.9 633.5,165.4 633.7,165.0 633.9,165.8 634.1,167.6 634.3,170.5 634.5,174.4 634.7,179.2 634.9,184.6 635.1,190.5 635.3,196.8 635.5,203.1 635.7,209.4 635.9,215.4 636.1,220.9 636.3,225.8 636.5,229.8 636.7,232.9 636.9,235.0 637.1,235.9 637.3,235.7 637.5,234.4 637.7,232.0 637.9,228.6 638.1,224.2 638.3,219.1 638.5,213.4 638.7,207.3 638.9,201.0 639.1,194.6 639.3,188.4 639.5,182.7 639.7,177.5 639.9,173.0 640.1,169.4 640.3,166.9 640.5,165.4 640.7,165.0 640.9,165.8 641.1,167.7 641.3,170.7 641.5,174.6 641.7,179.3 641.9,184.8 642.1,190.7 642.3,197.0 642.5,203.3 642.7,209.6 642.9,215.6 643.1,221.1 643.3,225.9 643.5,230.0 643.7,233.0 643.9,235.0 644.1,236.0 644.3,235.7 644.5,234.3 644.7,231.9 644.9,228.4 645.1,224.0 645.3,218.9 645.5,213.2 645.7,207.1 645.9,200.7 646.1,194.4 646.3,188.2 646.5,182.5 646.7,177.3 646.9,172.9 647.1,169.3 647.3,166.8 647.5,165.3 647.7,165.0 647.9,165.9" stroke="#965fe2" stroke-width="0.6" stroke-opacity="1.0" stroke-linejoin="round"/><polyline points="209.5,200.5 209.7,200.6 209.9,200.6 210.1,200.7 210.3,200.7 210.5,200.8 210.7,200.8 210.9,200.9 211.1,200.9 211.3,201.0 211.5,201.0 211.7,201.1 211.9,201.1 212.1,201.2 212.3,201.2 212.5,201.3 212.7,201.3 212.9,201.4 213.1,201.5 213.3,201.5 213.5,201.6 213.7,201.6 213.9,201.7 214.1,201.7 214.3,201.8 214.5,201.8 214.7,201.9 214.9,201.9 215.1,202.0 215.3,202.0 215.5,202.1 215.7,202.1 215.9,202.2 216.1,202.2 216.3,202.3 216.5,202.3 216.7,202.4 216.9,202.5 217.1,202.5 217.3,202.6 217.5,202.6 217.7,202.7 217.9,202.7 218.1,202.8 218.3,202.8 218.5,202.9 218.7,202.9 218.9,203.0 219.1,203.0 219.3,203.1 219.5,203.1 219.7,203.2 219.9,203.2 220.1,203.3 220.3,203.4 220.5,203.4 220.7,203.5 220.9,203.5 221.1,203.6 221.3,203.6 221.5,203.7 221.7,203.7 221.9,203.8 222.1,203.8 222.3,203.9 222.5,203.9 222.7,204.0 222.9,204.0 223.1,204.1 223.3,204.1 223.5,204.2 223.7,204.3 223.9,204.3 224.1,204.4 224.3,204.4 224.5,204.5 224.7,204.5 224.9,204.6 225.1,204.6 225.3,204.7 225.5,204.7 225.7,204.8 225.9,204.8 226.1,204.9 226.3,204.9 226.5,205.0 226.7,205.0 226.9,205.1 227.1,205.1 227.3,205.2 227.5,205.3 227.7,205.3 227.9,205.4 228.1,205.4 228.3,205.5 228.5,205.5 228.7,205.6 228.9,205.6 229.1,205.7 229.3,205.7 229.5,205.8 229.7,205.8 229.9,205.9 230.1,205.9 230.3,206.0 230.5,206.0 230.7,206.1 230.9,206.2 231.1,206.2 231.3,206.3 231.5,206.3 231.7,206.4 231.9,206.4 232.1,206.5 232.3,206.5 232.5,206.6 232.7,206.6 232.9,206.7 233.1,206.7 233.3,206.8 233.5,206.8 233.7,206.9 233.9,206.9 234.1,207.0 234.3,207.1 234.5,207.1 234.7,207.2 234.9,207.2 235.1,207.3 235.3,207.3 235.5,207.4 235.7,207.4 235.9,207.5 236.1,207.5 236.3,207.5 236.5,207.6 236.7,207.6 236.9,207.6 237.1,207.7 237.3,207.7 237.5,207.7 237.7,207.7 237.9,207.8 238.1,207.8 238.3,207.8 238.5,207.9 238.7,207.9 238.9,207.9 239.1,207.9 239.3,208.0 239.5,208.0 239.7,208.0 239.9,208.1 240.1,208.1 240.3,208.1 240.5,208.1 240.7,208.2 240.9,208.2 241.1,208.2 241.3,208.3 241.5,208.3 241.7,208.3 241.9,208.3 242.1,208.4 242.3,208.4 242.5,208.4 242.7,208.5 242.9,208.5 243.1,208.5 243.3,208.5 243.5,208.6 243.7,208.6 243.9,208.6 244.1,208.7 244.3,208.7 244.5,208.7 244.7,208.7 244.9,208.8 245.1,208.8 245.3,208.8 245.5,208.9 245.7,208.9 245.9,208.9 246.1,208.9 246.3,209.0 246.5,209.0 246.7,209.0 246.9,209.1 247.1,209.1 247.3,209.1 247.5,209.1 247.7,209.2 247.9,209.2 248.1,209.2 248.3,209.3 248.5,209.3 248.7,209.3 248.9,209.3 249.1,209.4 249.3,209.4 249.5,209.4 249.7,209.5 249.9,209.5 250.1,209.6 250.3,209.7 250.5,209.8 250.7,209.9 250.9,210.0 251.1,210.1 251.3,210.3 251.5,210.4 251.7,210.5 251.9,210.6 252.1,210.7 252.3,210.8 252.5,211.0 252.7,211.1 252.9,211.2 253.1,211.3 253.3,211.4 253.5,211.5 253.7,211.7 253.9,211.8 254.1,211.9 254.3,212.0 254.5,212.1 254.7,212.2 254.9,212.4 255.1,212.5 255.3,212.6 255.5,212.7 255.7,212.8 255.9,212.9 256.1,213.1 256.3,213.2 256.5,213.3 256.7,213.4 256.9,213.5 257.1,213.6 257.3,213.8 257.5,213.9 257.7,214.0 257.9,214.1 258.1,214.2 258.3,214.3 258.5,214.5 258.7,214.6 258.9,214.7 259.1,214.8 259.3,214.9 259.5,215.0 259.7,215.2 259.9,215.3 260.1,215.4 260.3,215.5 260.5,215.6 260.7,215.7 260.9,215.9 261.1,216.0 261.3,216.1 261.5,216.2 261.7,216.3 261.9,216.4 262.1,216.4 262.3,216.3 262.5,216.1 262.7,215.9 262.9,215.6 263.1,215.4 263.3,215.1 263.5,214.8 263.7,214.5 263.9,214.2 264.1,213.9 264.3,213.5 264.5,213.2 264.7,212.8 264.9,212.4 265.1,212.0 265.3,211.6 265.5,211.1 265.7,210.7 265.9,210.2 266.1,209.8 266.3,209.3 266.5,208.8 266.7,208.3 266.9,207.8 267.1,207.3 267.3,206.8 267.5,206.2 267.7,205.7 267.9,205.2 268.1,204.6 268.3,204.1 268.5,203.6 268.7,203.0 268.9,202.5 269.1,201.9 269.3,201.4 269.5,200.9 269.7,200.3 269.9,199.8 270.1,199.2 270.3,198.6 270.5,198.0 270.7,197.4 270.9,196.8 271.1,196.3 271.3,195.7 271.5,195.2 271.7,194.7 271.9,194.2 272.1,193.8 272.3,193.4 272.5,193.0 272.7,192.6 272.9,192.2 273.1,191.9 273.3,191.6 273.5,191.3 273.7,191.1 273.9,190.9 274.1,190.7 274.3,190.6 274.5,190.4 274.7,190.4 274.9,190.3 275.1,190.3 275.3,190.3 275.5,190.3 275.7,190.4 275.9,190.5 276.1,190.6 276.3,190.8 276.5,191.0 276.7,191.2 276.9,191.5 277.1,191.7 277.3,192.0 277.5,192.4 277.7,192.7 277.9,193.1 278.1,193.5 278.3,194.0 278.5,194.4 278.7,194.9 278.9,195.4 279.1,195.9 279.3,196.4 279.5,196.9 279.7,197.4 279.9,197.9 280.1,198.5 280.3,199.0 280.5,199.6 280.7,200.1 280.9,200.7 281.1,201.2 281.3,201.8 281.5,202.4 281.7,202.9 281.9,203.5 282.1,204.1 282.3,204.6 282.5,205.2 282.7,205.8 282.9,206.3 283.1,206.9 283.3,207.4 283.5,208.0 283.7,208.5 283.9,209.1 284.1,209.6 284.3,210.1 284.5,210.6 284.7,211.1 284.9,211.6 285.1,212.1 285.3,212.6 285.5,213.0 285.7,213.5 285.9,213.9 286.1,214.3 286.3,214.7 286.5,215.1 286.7,215.5 286.9,215.8 287.1,216.2 287.3,216.5 287.5,216.8 287.7,217.1 287.9,217.3 288.1,217.5 288.3,217.8 288.5,218.0 288.7,218.1 288.9,218.3 289.1,218.4 289.3,218.5 289.5,218.6 289.7,218.6 289.9,218.6 290.1,218.6 290.3,218.6 290.5,218.5 290.7,218.5 290.9,218.3 291.1,218.2 291.3,218.0 291.5,217.8 291.7,217.6 291.9,217.4 292.1,217.1 292.3,216.8 292.5,216.5 292.7,216.1 292.9,215.7 293.1,215.3 293.3,214.9 293.5,214.4 293.7,213.9 293.9,213.4 294.1,212.8 294.3,212.3 294.5,211.7 294.7,211.1 294.9,210.4 295.1,209.8 295.3,209.1 295.5,208.4 295.7,207.7 295.9,206.9 296.1,206.2 296.3,205.4 296.5,204.7 296.7,203.9 296.9,203.1 297.1,202.3 297.3,201.4 297.5,200.6 297.7,199.8 297.9,199.0 298.1,198.1 298.3,197.3 298.5,196.4 298.7,195.6 298.9,194.8 299.1,194.0 299.3,193.2 299.5,192.4 299.7,191.6 299.9,190.8 300.1,190.0 300.3,189.3 300.5,188.6 300.7,187.9 300.9,187.2 301.1,186.5 301.3,185.9 301.5,185.3 301.7,184.7 301.9,184.2 302.1,183.7 302.3,183.2 302.5,182.8 302.7,182.4 302.9,182.1 303.1,181.7 303.3,181.5 303.5,181.3 303.7,181.1 303.9,180.9 304.1,180.8 304.3,180.8 304.5,180.8 304.7,180.8 304.9,181.0 305.1,181.1 305.3,181.3 305.5,181.5 305.7,181.8 305.9,182.2 306.1,182.6 306.3,183.0 306.5,183.5 306.7,184.1 306.9,184.7 307.1,185.3 307.3,186.0 307.5,186.7 307.7,187.5 307.9,188.3 308.1,189.1 308.3,190.0 308.5,190.9 308.7,191.8 308.9,192.8 309.1,193.8 309.3,194.8 309.5,195.9 309.7,197.0 309.9,198.0 310.1,199.1 310.3,200.3 310.5,201.4 310.7,202.5 310.9,203.6 311.1,204.7 311.3,205.9 311.5,207.0 311.7,208.1 311.9,209.1 312.1,210.2 312.3,211.2 312.5,212.2 312.7,213.2 312.9,214.2 313.1,215.1 313.3,215.9 313.5,216.7 313.7,217.5 313.9,218.2 314.1,218.9 314.3,219.5 314.5,220.1 314.7,220.6 314.9,221.0 315.1,221.4 315.3,221.7 315.5,221.9 315.7,222.1 315.9,222.2 316.1,222.2 316.3,222.1 316.5,222.0 316.7,221.8 316.9,221.5 317.1,221.1 317.3,220.7 317.5,220.2 317.7,219.6 317.9,218.9 318.1,218.2 318.3,217.4 318.5,216.6 318.7,215.6 318.9,214.6 319.1,213.6 319.3,212.5 319.5,211.4 319.7,210.2 319.9,208.9 320.1,207.7 320.3,206.3 320.5,205.0 320.7,203.6 320.9,202.3 321.1,200.9 321.3,199.5 321.5,198.0 321.7,196.6 321.9,195.2 322.1,193.8 322.3,192.5 322.5,191.1 322.7,189.8 322.9,188.5 323.1,187.3 323.3,186.1 323.5,185.0 323.7,183.9 323.9,182.9 324.1,182.0 324.3,181.1 324.5,180.3 324.7,179.6 324.9,178.9 325.1,178.4 325.3,178.0 325.5,177.6 325.7,177.4 325.9,177.2 326.1,177.1 326.3,177.2 326.5,177.4 326.7,177.6 326.9,178.0 327.1,178.4 327.3,179.0 327.5,179.7 327.7,180.4 327.9,181.3 328.1,182.2 328.3,183.3 328.5,184.4 328.7,185.6 328.9,186.9 329.1,188.2 329.3,189.6 329.5,191.1 329.7,192.6 329.9,194.2 330.1,195.8 330.3,197.4 330.5,199.0 330.7,200.7 330.9,202.4 331.1,204.1 331.3,205.7 331.5,207.4 331.7,209.0 331.9,210.6 332.1,212.1 332.3,213.6 332.5,215.0 332.7,216.4 332.9,217.6 333.1,218.8 333.3,219.9 333.5,221.0 333.7,221.9 333.9,222.7 334.1,223.4 334.3,223.9 334.5,224.4 334.7,224.7 334.9,224.9 335.1,225.0 335.3,224.9 335.5,224.7 335.7,224.4 335.9,224.0 336.1,223.4 336.3,222.7 336.5,221.8 336.7,220.9 336.9,219.8 337.1,218.6 337.3,217.3 337.5,215.9 337.7,214.4 337.9,212.9 338.1,211.2 338.3,209.5 338.5,207.8 338.7,206.0 338.9,204.1 339.1,202.2 339.3,200.4 339.5,198.5 339.7,196.6 339.9,194.7 340.1,192.9 340.3,191.1 340.5,189.3 340.7,187.6 340.9,186.0 341.1,184.5 341.3,183.0 341.5,181.7 341.7,180.5 341.9,179.4 342.1,178.4 342.3,177.5 342.5,176.8 342.7,176.3 342.9,175.9 343.1,175.6 343.3,175.5 343.5,175.6 343.7,175.8 343.9,176.2 344.1,176.7 344.3,177.4 344.5,178.2 344.7,179.2 344.9,180.3 345.1,181.6 345.3,183.0 345.5,184.5 345.7,186.1 345.9,187.8 346.1,189.6 346.3,191.4 346.5,193.4 346.7,195.4 346.9,197.4 347.1,199.4 347.3,201.5 347.5,203.6 347.7,205.6 347.9,207.6 348.1,209.6 348.3,211.5 348.5,213.3 348.7,215.1 348.9,216.7 349.1,218.3 349.3,219.7 349.5,221.0 349.7,222.1 349.9,223.1 350.1,224.0 350.3,224.7 350.5,225.2 350.7,225.5 350.9,225.6 351.1,225.6 351.3,225.4 351.5,225.0 351.7,224.4 351.9,223.6 352.1,222.7 352.3,221.6 352.5,220.3 352.7,218.9 352.9,217.4 353.1,215.7 353.3,213.9 353.5,211.9 353.7,209.9 353.9,207.9 354.1,205.7 354.3,203.5 354.5,201.3 354.7,199.1 354.9,196.9 355.1,194.7 355.3,192.5 355.5,190.4 355.7,188.4 355.9,186.4 356.1,184.6 356.3,182.9 356.5,181.3 356.7,179.9 356.9,178.6 357.1,177.5 357.3,176.6 357.5,175.9 357.7,175.3 357.9,175.0 358.1,174.9 358.3,175.0 358.5,175.3 358.7,175.9 358.9,176.6 359.1,177.5 359.3,178.7 359.5,180.0 359.7,181.5 359.9,183.1 360.1,185.0 360.3,186.9 360.5,189.0 360.7,191.2 360.9,193.4 361.1,195.8 361.3,198.1 361.5,200.6 361.7,203.0 361.9,205.4 362.1,207.7 362.3,210.0 362.5,212.3 362.7,214.4 362.9,216.4 363.1,218.3 363.3,220.0 363.5,221.6 363.7,223.0 363.9,224.1 364.1,225.1 364.3,225.8 364.5,226.4 364.7,226.6 364.9,226.7 365.1,226.5 365.3,226.0 365.5,225.3 365.7,224.4 365.9,223.3 366.1,221.9 366.3,220.3 366.5,218.6 366.7,216.6 366.9,214.5 367.1,212.3 367.3,209.9 367.5,207.5 367.7,205.0 367.9,202.4 368.1,199.8 368.3,197.2 368.5,194.6 368.7,192.0 368.9,189.6 369.1,187.2 369.3,185.0 369.5,182.9 369.7,181.0 369.9,179.2 370.1,177.7 370.3,176.4 370.5,175.3 370.7,174.5 370.9,174.0 371.1,173.7 371.3,173.7 371.5,173.9 371.7,174.5 371.9,175.3 372.1,176.3 372.3,177.6 372.5,179.2 372.7,181.0 372.9,183.0 373.1,185.2 373.3,187.5 373.5,190.0 373.7,192.6 373.9,195.3 374.1,198.1 374.3,200.9 374.5,203.7 374.7,206.5 374.9,209.2 375.1,211.9 375.3,214.4 375.5,216.8 375.7,219.0 375.9,221.0 376.1,222.8 376.3,224.4 376.5,225.7 376.7,226.7 376.9,227.4 377.1,227.9 377.3,228.0 377.5,227.9 377.7,227.4 377.9,226.6 378.1,225.5 378.3,224.2 378.5,222.5 378.7,220.7 378.9,218.5 379.1,216.2 379.3,213.7 379.5,211.0 379.7,208.2 379.9,205.3 380.1,202.3 380.3,199.3 380.5,196.3 380.7,193.4 380.9,190.5 381.1,187.7 381.3,185.1 381.5,182.7 381.7,180.4 381.9,178.4 382.1,176.6 382.3,175.2 382.5,174.0 382.7,173.1 382.9,172.6 383.1,172.4 383.3,172.5 383.5,173.0 383.7,173.9 383.9,175.0 384.1,176.5 384.3,178.2 384.5,180.3 384.7,182.6 384.9,185.1 385.1,187.8 385.3,190.7 385.5,193.7 385.7,196.9 385.9,200.0 386.1,203.2 386.3,206.4 386.5,209.5 386.7,212.4 386.9,215.3 387.1,217.9 387.3,220.4 387.5,222.6 387.7,224.5 387.9,226.1 388.1,227.4 388.3,228.3 388.5,228.9 388.7,229.1 388.9,228.9 389.1,228.3 389.3,227.4 389.5,226.2 389.7,224.6 389.9,222.6 390.1,220.4 390.3,217.9 390.5,215.1 390.7,212.2 390.9,209.1 391.1,205.8 391.3,202.5 391.5,199.2 391.7,195.9 391.9,192.6 392.1,189.4 392.3,186.4 392.5,183.5 392.7,180.9 392.9,178.6 393.1,176.5 393.3,174.8 393.5,173.4 393.7,172.4 393.9,171.8 394.1,171.6 394.3,171.8 394.5,172.4 394.7,173.5 394.9,174.9 395.1,176.6 395.3,178.7 395.5,181.1 395.7,183.8 395.9,186.8 396.1,189.9 396.3,193.2 396.5,196.7 396.7,200.1 396.9,203.6 397.1,207.1 397.3,210.4 397.5,213.7 397.7,216.7 397.9,219.5 398.1,222.0 398.3,224.2 398.5,226.1 398.7,227.5 398.9,228.6 399.1,229.3 399.3,229.5 399.5,229.3 399.7,228.6 399.9,227.6 400.1,226.1 400.3,224.2 400.5,222.0 400.7,219.4 400.9,216.6 401.1,213.5 401.3,210.2 401.5,206.7 401.7,203.1 401.9,199.5 402.1,195.9 402.3,192.4 402.5,189.0 402.7,185.8 402.9,182.8 403.1,180.0 403.3,177.6 403.5,175.6 403.7,173.9 403.9,172.7 404.1,171.9 404.3,171.5 404.5,171.6 404.7,172.2 404.9,173.3 405.1,174.7 405.3,176.6 405.5,178.9 405.7,181.5 405.9,184.5 406.1,187.7 406.3,191.1 406.5,194.7 406.7,198.4 406.9,202.1 407.1,205.8 407.3,209.4 407.5,212.9 407.7,216.2 407.9,219.2 408.1,221.9 408.3,224.2 408.5,226.2 408.7,227.7 408.9,228.8 409.1,229.4 409.3,229.5 409.5,229.1 409.7,228.2 409.9,226.9 410.1,225.1 410.3,222.8 410.5,220.2 410.7,217.3 410.9,214.0 411.1,210.6 411.3,206.9 411.5,203.1 411.7,199.3 411.9,195.5 412.1,191.8 412.3,188.2 412.5,184.8 412.7,181.7 412.9,179.0 413.1,176.6 413.3,174.6 413.5,173.1 413.7,172.1 413.9,171.6 414.1,171.6 414.3,172.1 414.5,173.1 414.7,174.7 414.9,176.7 415.1,179.1 415.3,181.9 415.5,185.1 415.7,188.5 415.9,192.2 416.1,196.0 416.3,199.9 416.5,203.9 416.7,207.7 416.9,211.5 417.1,215.0 417.3,218.3 417.5,221.3 417.7,223.8 417.9,226.0 418.1,227.6 418.3,228.8 418.5,229.4 418.7,229.5 418.9,229.0 419.1,228.0 419.3,226.4 419.5,224.4 419.7,221.9 419.9,219.0 420.1,215.8 420.3,212.2 420.5,208.4 420.7,204.5 420.9,200.5 421.1,196.4 421.3,192.5 421.5,188.7 421.7,185.1 421.9,181.8 422.1,178.9 422.3,176.4 422.5,174.4 422.7,172.9 422.9,171.9 423.1,171.5 423.3,171.7 423.5,172.4 423.7,173.7 423.9,175.6 424.1,177.9 424.3,180.7 424.5,183.9 424.7,187.5 424.9,191.3 425.1,195.3 425.3,199.4 425.5,203.5 425.7,207.6 425.9,211.5 426.1,215.2 426.3,218.7 426.5,221.7 426.7,224.3 426.9,226.4 427.1,228.0 427.3,229.1 427.5,229.5 427.7,229.3 427.9,228.5 428.1,227.2 428.3,225.3 428.5,222.8 428.7,219.9 428.9,216.6 429.1,212.9 429.3,209.0 429.5,204.8 429.7,200.6 429.9,196.4 430.1,192.3 430.3,188.3 430.5,184.6 430.7,181.2 430.9,178.2 431.1,175.8 431.3,173.8 431.5,172.4 431.7,171.7 431.9,171.5 432.1,172.0 432.3,173.1 432.5,174.8 432.7,177.1 432.9,179.9 433.1,183.2 433.3,186.8 433.5,190.7 433.7,194.9 433.9,199.2 434.1,203.5 434.3,207.8 434.5,211.9 434.7,215.8 434.9,219.3 435.1,222.4 435.3,225.0 435.5,227.1 435.7,228.6 435.9,229.4 436.1,229.6 436.3,229.1 436.5,228.0 436.7,226.2 436.9,223.9 437.1,221.0 437.3,217.6 437.5,213.8 437.7,209.7 437.9,205.4 438.1,201.0 438.3,196.5 438.5,192.2 438.7,188.0 438.9,184.1 439.1,180.6 439.3,177.5 439.5,175.0 439.7,173.0 439.9,171.7 440.1,171.1 440.3,171.2 440.5,172.0 440.7,173.5 440.9,175.6 441.1,178.3 441.3,181.5 441.5,185.2 441.7,189.3 441.9,193.7 442.1,198.2 442.3,202.8 442.5,207.4 442.7,211.8 442.9,215.9 443.1,219.7 443.3,223.0 443.5,225.8 443.7,228.0 443.9,229.5 444.1,230.3 444.3,230.3 444.5,229.6 444.7,228.2 444.9,226.1 445.1,223.4 445.3,220.0 445.5,216.2 445.7,212.0 445.9,207.5 446.1,202.8 446.3,198.0 446.5,193.2 446.7,188.7 446.9,184.4 447.1,180.5 447.3,177.1 447.5,174.3 447.7,172.2 447.9,170.8 448.1,170.1 448.3,170.2 448.5,171.1 448.7,172.8 448.9,175.1 449.1,178.2 449.3,181.8 449.5,185.9 449.7,190.4 449.9,195.2 450.1,200.1 450.3,205.1 450.5,210.0 450.7,214.6 450.9,218.9 451.1,222.7 451.3,225.9 451.5,228.5 451.7,230.3 451.9,231.3 452.1,231.6 452.3,231.0 452.5,229.6 452.7,227.4 452.9,224.4 453.1,220.9 453.3,216.7 453.5,212.1 453.7,207.2 453.9,202.1 454.1,196.9 454.3,191.8 454.5,187.0 454.7,182.5 454.9,178.4 455.1,175.0 455.3,172.2 455.5,170.2 455.7,169.0 455.9,168.7 456.1,169.3 456.3,170.8 456.5,173.0 456.7,176.1 456.9,179.8 457.1,184.1 457.3,188.9 457.5,194.0 457.7,199.4 457.9,204.8 458.1,210.0 458.3,215.0 458.5,219.7 458.7,223.8 458.9,227.2 459.1,229.9 459.3,231.8 459.5,232.8 459.7,232.9 459.9,232.0 460.1,230.3 460.3,227.6 460.5,224.2 460.7,220.1 460.9,215.4 461.1,210.3 461.3,204.9 461.5,199.3 461.7,193.7 461.9,188.4 462.1,183.3 462.3,178.8 462.5,174.8 462.7,171.6 462.9,169.3 463.1,167.9 463.3,167.4 463.5,167.9 463.7,169.3 463.9,171.7 464.1,175.0 464.3,179.0 464.5,183.7 464.7,188.9 464.9,194.4 465.1,200.2 465.3,206.0 465.5,211.6 465.7,216.9 465.9,221.8 466.1,226.0 466.3,229.4 466.5,232.0 466.7,233.6 466.9,234.2 467.1,233.8 467.3,232.4 467.5,230.0 467.7,226.7 467.9,222.6 468.1,217.7 468.3,212.4 468.5,206.6 468.7,200.7 468.9,194.7 469.1,188.9 469.3,183.4 469.5,178.5 469.7,174.2 469.9,170.7 470.1,168.2 470.3,166.7 470.5,166.2 470.7,166.8 470.9,168.5 471.1,171.2 471.3,174.8 471.5,179.2 471.7,184.4 471.9,190.0 472.1,196.0 472.3,202.2 472.5,208.3 472.7,214.2 472.9,219.7 473.1,224.5 473.3,228.6 473.5,231.8 473.7,234.0 473.9,235.1 474.1,235.1 474.3,234.0 474.5,231.8 474.7,228.6 474.9,224.5 475.1,219.6 475.3,214.1 475.5,208.1 475.7,201.9 475.9,195.6 476.1,189.5 476.3,183.7 476.5,178.5 476.7,173.9 476.9,170.3 477.1,167.5 477.3,165.9 477.5,165.4 477.7,165.9 477.9,167.7 478.1,170.4 478.3,174.2 478.5,178.8 478.7,184.0 478.9,189.9 479.1,196.1 479.3,202.4 479.5,208.7 479.7,214.7 479.9,220.2 480.1,225.2 480.3,229.3 480.5,232.5 480.7,234.7 480.9,235.8 481.1,235.7 481.3,234.5 481.5,232.2 481.7,228.9 481.9,224.7 482.1,219.7 482.3,214.1 482.5,208.0 482.7,201.7 482.9,195.3 483.1,189.1 483.3,183.3 483.5,178.0 483.7,173.5 483.9,169.8 484.1,167.1 484.3,165.5 484.5,165.0 484.7,165.7 484.9,167.4 485.1,170.3 485.3,174.1 485.5,178.8 485.7,184.1 485.9,190.0 486.1,196.3 486.3,202.6 486.5,208.9 486.7,214.9 486.9,220.5 487.1,225.4 487.3,229.5 487.5,232.7 487.7,234.9 487.9,235.9 488.1,235.8 488.3,234.6 488.5,232.2 488.7,228.9 488.9,224.6 489.1,219.5 489.3,213.9 489.5,207.8 489.7,201.5 489.9,195.1 490.1,188.9 490.3,183.1 490.5,177.9 490.7,173.3 490.9,169.7 491.1,167.0 491.3,165.5 491.5,165.0 491.7,165.7 491.9,167.5 492.1,170.4 492.3,174.2 492.5,178.9 492.7,184.3 492.9,190.2 493.1,196.5 493.3,202.8 493.5,209.1 493.7,215.2 493.9,220.7 494.1,225.6 494.3,229.7 494.5,232.8 494.7,234.9 494.9,235.9 495.1,235.8 495.3,234.5 495.5,232.1 495.7,228.7 495.9,224.4 496.1,219.3 496.3,213.7 496.5,207.6 496.7,201.2 496.9,194.9 497.1,188.7 497.3,182.9 497.5,177.7 497.7,173.2 497.9,169.6 498.1,167.0 498.3,165.4 498.5,165.0 498.7,165.7 498.9,167.6 499.1,170.5 499.3,174.4 499.5,179.1 499.7,184.5 499.9,190.4 500.1,196.7 500.3,203.1 500.5,209.4 500.7,215.4 500.9,220.9 501.1,225.7 501.3,229.8 501.5,232.9 501.7,235.0 501.9,235.9 502.1,235.7 502.3,234.4 502.5,232.0 502.7,228.6 502.9,224.3 503.1,219.2 503.3,213.5 503.5,207.3 503.7,201.0 503.9,194.7 504.1,188.5 504.3,182.7 504.5,177.5 504.7,173.0 504.9,169.5 505.1,166.9 505.3,165.4 505.5,165.0 505.7,165.8 505.9,167.7 506.1,170.6 506.3,174.5 506.5,179.3 506.7,184.7 506.9,190.7 507.1,196.9 507.3,203.3 507.5,209.6 507.7,215.6 507.9,221.1 508.1,225.9 508.3,229.9 508.5,233.0 508.7,235.0 508.9,235.9 509.1,235.7 509.3,234.4 509.5,231.9 509.7,228.5 509.9,224.1 510.1,219.0 510.3,213.3 510.5,207.1 510.7,200.8 510.9,194.4 511.1,188.3 511.3,182.5 511.5,177.3 511.7,172.9 511.9,169.4 512.1,166.8 512.3,165.4 512.5,165.0 512.7,165.8 512.9,167.8 513.1,170.8 513.3,174.7 513.5,179.5 513.7,184.9 513.9,190.9 514.1,197.1 514.3,203.5 514.5,209.8 514.7,215.8 514.9,221.2 515.1,226.1 515.3,230.0 515.5,233.1 515.7,235.1 515.9,236.0 516.1,235.7 516.3,234.3 516.5,231.8 516.7,228.3 516.9,223.9 517.1,218.8 517.3,213.0 517.5,206.9 517.7,200.6 517.9,194.2 518.1,188.1 518.3,182.3 518.5,177.2 518.7,172.8 518.9,169.3 519.1,166.7 519.3,165.3 519.5,165.0 519.7,165.9 519.9,167.9 520.1,170.9 520.3,174.9 520.5,179.7 520.7,185.1 520.9,191.1 521.1,197.4 521.3,203.7 521.5,210.0 521.7,216.0 521.9,221.4 522.1,226.2 522.3,230.2 522.5,233.2 522.7,235.1 522.9,236.0 523.1,235.7 523.3,234.2 523.5,231.7 523.7,228.2 523.9,223.8 524.1,218.6 524.3,212.8 524.5,206.7 524.7,200.3 524.9,194.0 525.1,187.9 525.3,182.1 525.5,177.0 525.7,172.6 525.9,169.1 526.1,166.7 526.3,165.3 526.5,165.0 526.7,165.9 526.9,167.9 527.1,171.0 527.3,175.0 527.5,179.8 527.7,185.3 527.9,191.3 528.1,197.6 528.3,204.0 528.5,210.2 528.7,216.2 528.9,221.6 529.1,226.4 529.3,230.3 529.5,233.3 529.7,235.2 529.9,236.0 530.1,235.6 530.3,234.2 530.5,231.6 530.7,228.0 530.9,223.6 531.1,218.4 531.3,212.6 531.5,206.5 531.7,200.1 531.9,193.8 532.1,187.7 532.3,181.9 532.5,176.8 532.7,172.5 532.9,169.0 533.1,166.6 533.3,165.3 533.5,165.1 533.7,166.0 533.9,168.0 534.1,171.1 534.3,175.2 534.5,180.0 534.7,185.5 534.9,191.5 535.1,197.8 535.3,204.2 535.5,210.4 535.7,216.4 535.9,221.8 536.1,226.5 536.3,230.4 536.5,233.3 536.7,235.2 536.9,236.0 537.1,235.6 537.3,234.1 537.5,231.5 537.7,227.9 537.9,223.4 538.1,218.2 538.3,212.4 538.5,206.2 538.7,199.9 538.9,193.6 539.1,187.4 539.3,181.8 539.5,176.7 539.7,172.4 539.9,168.9 540.1,166.5 540.3,165.2 540.5,165.1 540.7,166.0 540.9,168.1 541.1,171.3 541.3,175.3 541.5,180.2 541.7,185.7 541.9,191.7 542.1,198.0 542.3,204.4 542.5,210.6 542.7,216.6 542.9,222.0 543.1,226.7 543.3,230.5 543.5,233.4 543.7,235.3 543.9,236.0 544.1,235.6 544.3,234.0 544.5,231.4 544.7,227.8 544.9,223.2 545.1,218.0 545.3,212.2 545.5,206.0 545.7,199.7 545.9,193.3 546.1,187.2 546.3,181.6 546.5,176.5 546.7,172.2 546.9,168.8 547.1,166.5 547.3,165.2 547.5,165.1 547.7,166.1 547.9,168.2 548.1,171.4 548.3,175.5 548.5,180.4 548.7,185.9 548.9,192.0 549.1,198.3 549.3,204.6 549.5,210.9 549.7,216.8 549.9,222.1 550.1,226.8 550.3,230.7 550.5,233.5 550.7,235.3 550.9,236.0 551.1,235.5 551.3,233.9 551.5,231.3 551.7,227.6 551.9,223.1 552.1,217.8 552.3,212.0 552.5,205.8 552.7,199.4 552.9,193.1 553.1,187.0 553.3,181.4 553.5,176.3 553.7,172.1 553.9,168.7 554.1,166.4 554.3,165.2 554.5,165.1 554.7,166.2 554.9,168.3 555.1,171.5 555.3,175.6 555.5,180.6 555.7,186.1 555.9,192.2 556.1,198.5 556.3,204.8 556.5,211.1 556.7,217.0 556.9,222.3 557.1,227.0 557.3,230.8 557.5,233.6 557.7,235.4 557.9,236.0 558.1,235.5 558.3,233.9 558.5,231.2 558.7,227.5 558.9,222.9 559.1,217.6 559.3,211.8 559.5,205.6 559.7,199.2 559.9,192.9 560.1,186.8 560.3,181.2 560.5,176.2 560.7,171.9 560.9,168.6 561.1,166.4 561.3,165.2 561.5,165.1 561.7,166.2 561.9,168.4 562.1,171.6 562.3,175.8 562.5,180.8 562.7,186.3 562.9,192.4 563.1,198.7 563.3,205.1 563.5,211.3 563.7,217.2 563.9,222.5 564.1,227.1 564.3,230.9 564.5,233.7 564.7,235.4 564.9,236.0 565.1,235.5 565.3,233.8 565.5,231.0 565.7,227.3 565.9,222.7 566.1,217.4 566.3,211.6 566.5,205.4 566.7,199.0 566.9,192.7 567.1,186.6 567.3,181.0 567.5,176.0 567.7,171.8 567.9,168.5 568.1,166.3 568.3,165.1 568.5,165.1 568.7,166.3 568.9,168.5 569.1,171.8 569.3,176.0 569.5,180.9 569.7,186.5 569.9,192.6 570.1,198.9 570.3,205.3 570.5,211.5 570.7,217.4 570.9,222.7 571.1,227.3 571.3,231.0 571.5,233.8 571.7,235.4 571.9,236.0 572.1,235.4 572.3,233.7 572.5,230.9 572.7,227.2 572.9,222.6 573.1,217.2 573.3,211.4 573.5,205.1 573.7,198.8 573.9,192.5 574.1,186.4 574.3,180.8 574.5,175.9 574.7,171.7 574.9,168.4 575.1,166.2 575.3,165.1 575.5,165.2 575.7,166.3 575.9,168.6 576.1,171.9 576.3,176.1 576.5,181.1 576.7,186.8 576.9,192.8 577.1,199.1 577.3,205.5 577.5,211.7 577.7,217.5 577.9,222.8 578.1,227.4 578.3,231.1 578.5,233.8 578.7,235.5 578.9,236.0 579.1,235.4 579.3,233.6 579.5,230.8 579.7,227.0 579.9,222.4 580.1,217.0 580.3,211.1 580.5,204.9 580.7,198.6 580.9,192.3 581.1,186.2 581.3,180.6 581.5,175.7 581.7,171.6 581.9,168.3 582.1,166.2 582.3,165.1 582.5,165.2 582.7,166.4 582.9,168.7 583.1,172.0 583.3,176.3 583.5,181.3 583.7,187.0 583.9,193.0 584.1,199.4 584.3,205.7 584.5,211.9 584.7,217.7 584.9,223.0 585.1,227.6 585.3,231.2 585.5,233.9 585.7,235.5 585.9,236.0 586.1,235.3 586.3,233.5 586.5,230.7 586.7,226.9 586.9,222.2 587.1,216.8 587.3,210.9 587.5,204.7 587.7,198.3 587.9,192.0 588.1,186.0 588.3,180.5 588.5,175.5 588.7,171.4 588.9,168.3 589.1,166.1 589.3,165.1 589.5,165.2 589.7,166.5 589.9,168.8 590.1,172.2 590.3,176.4 590.5,181.5 590.7,187.2 590.9,193.3 591.1,199.6 591.3,205.9 591.5,212.1 591.7,217.9 591.9,223.2 592.1,227.7 592.3,231.3 592.5,234.0 592.7,235.6 592.9,236.0 593.1,235.3 593.3,233.5 593.5,230.6 593.7,226.7 593.9,222.0 594.1,216.6 594.3,210.7 594.5,204.5 594.7,198.1 594.9,191.8 595.1,185.8 595.3,180.3 595.5,175.4 595.7,171.3 595.9,168.2 596.1,166.1 596.3,165.1 596.5,165.2 596.7,166.5 596.9,168.9 597.1,172.3 597.3,176.6 597.5,181.7 597.7,187.4 597.9,193.5 598.1,199.8 598.3,206.2 598.5,212.3 598.7,218.1 598.9,223.4 599.1,227.8 599.3,231.4 599.5,234.1 599.7,235.6 599.9,236.0 600.1,235.2 600.3,233.4 600.5,230.5 600.7,226.6 600.9,221.8 601.1,216.4 601.3,210.5 601.5,204.3 601.7,197.9 601.9,191.6 602.1,185.6 602.3,180.1 602.5,175.2 602.7,171.2 602.9,168.1 603.1,166.0 603.3,165.1 603.5,165.3 603.7,166.6 603.9,169.0 604.1,172.4 604.3,176.8 604.5,181.9 604.7,187.6 604.9,193.7 605.1,200.0 605.3,206.4 605.5,212.5 605.7,218.3 605.9,223.5 606.1,228.0 606.3,231.6 606.5,234.1 606.7,235.6 606.9,236.0 607.1,235.2 607.3,233.3 607.5,230.3 607.7,226.4 607.9,221.7 608.1,216.2 608.3,210.3 608.5,204.0 608.7,197.7 608.9,191.4 609.1,185.4 609.3,179.9 609.5,175.1 609.7,171.0 609.9,168.0 610.1,166.0 610.3,165.1 610.5,165.3 610.7,166.7 610.9,169.1 611.1,172.6 611.3,176.9 611.5,182.1 611.7,187.8 611.9,193.9 612.1,200.3 612.3,206.6 612.5,212.8 612.7,218.5 612.9,223.7 613.1,228.1 613.3,231.7 613.5,234.2 613.7,235.7 613.9,236.0 614.1,235.1 614.3,233.2 614.5,230.2 614.7,226.3 614.9,221.5 615.1,216.0 615.3,210.1 615.5,203.8 615.7,197.4 615.9,191.2 616.1,185.2 616.3,179.7 616.5,174.9 616.7,170.9 616.9,167.9 617.1,165.9 617.3,165.0 617.5,165.3 617.7,166.7 617.9,169.2 618.1,172.7 618.3,177.1 618.5,182.3 618.7,188.0 618.9,194.1 619.1,200.5 619.3,206.8 619.5,213.0 619.7,218.7 619.9,223.9 620.1,228.3 620.3,231.8 620.5,234.3 620.7,235.7 620.9,236.0 621.1,235.1 621.3,233.1 621.5,230.1 621.7,226.1 621.9,221.3 622.1,215.8 622.3,209.9 622.5,203.6 622.7,197.2 622.9,191.0 623.1,185.0 623.3,179.5 623.5,174.8 623.7,170.8 623.9,167.8 624.1,165.9 624.3,165.0 624.5,165.3 624.7,166.8 624.9,169.3 625.1,172.9 625.3,177.3 625.5,182.5 625.7,188.2 625.9,194.4 626.1,200.7 626.3,207.0 626.5,213.2 626.7,218.9 626.9,224.0 627.1,228.4 627.3,231.9 627.5,234.3 627.7,235.7 627.9,236.0 628.1,235.0 628.3,233.0 628.5,230.0 628.7,226.0 628.9,221.1 629.1,215.6 629.3,209.6 629.5,203.4 629.7,197.0 629.9,190.7 630.1,184.8 630.3,179.4 630.5,174.6 630.7,170.7 630.9,167.7 631.1,165.8 631.3,165.0 631.5,165.4 631.7,166.9 631.9,169.4 632.1,173.0 632.3,177.4 632.5,182.6 632.7,188.4 632.9,194.6 633.1,200.9 633.3,207.3 633.5,213.4 633.7,219.1 633.9,224.2 634.1,228.5 634.3,232.0 634.5,234.4 634.7,235.7 634.9,235.9 635.1,235.0 635.3,232.9 635.5,229.8 635.7,225.8 635.9,220.9 636.1,215.4 636.3,209.4 636.5,203.1 636.7,196.8 636.9,190.5 637.1,184.6 637.3,179.2 637.5,174.5 637.7,170.6 637.9,167.6 638.1,165.8 638.3,165.0 638.5,165.4 638.7,166.9 638.9,169.5 639.1,173.1 639.3,177.6 639.5,182.8 639.7,188.6 639.9,194.8 640.1,201.2 640.3,207.5 640.5,213.6 640.7,219.3 640.9,224.4 641.1,228.7 641.3,232.1 641.5,234.5 641.7,235.8 641.9,235.9 642.1,234.9 642.3,232.9 642.5,229.7 642.7,225.6 642.9,220.8 643.1,215.2 643.3,209.2 643.5,202.9 643.7,196.6 643.9,190.3 644.1,184.4 644.3,179.0 644.5,174.3 644.7,170.4 644.9,167.5 645.1,165.7 645.3,165.0 645.5,165.4 645.7,167.0 645.9,169.6 646.1,173.3 646.3,177.8 646.5,183.0 646.7,188.8 646.9,195.0 647.1,201.4 647.3,207.7 647.5,213.8 647.7,219.5 647.9,224.5" stroke="#d8743c" stroke-width="0.6" stroke-opacity="1.0" stroke-linejoin="round"/><polyline points="209.5,200.5 209.7,200.2 209.9,199.8 210.1,199.5 210.3,199.1 210.5,198.8 210.7,198.4 210.9,198.1 211.1,197.8 211.3,197.4 211.5,197.1 211.7,196.7 211.9,196.4 212.1,196.0 212.3,195.7 212.5,195.4 212.7,195.0 212.9,194.7 213.1,194.3 213.3,193.8 213.5,193.3 213.7,192.9 213.9,192.4 214.1,192.0 214.3,191.5 214.5,191.0 214.7,190.6 214.9,190.1 215.1,189.7 215.3,189.2 215.5,188.7 215.7,188.3 215.9,187.8 216.1,187.4 216.3,186.9 216.5,186.4 216.7,186.0 216.9,185.5 217.1,185.1 217.3,184.6 217.5,184.1 217.7,183.7 217.9,183.2 218.1,182.7 218.3,182.3 218.5,181.8 218.7,181.4 218.9,180.9 219.1,180.4 219.3,180.0 219.5,179.5 219.7,179.1 219.9,178.6 220.1,178.1 220.3,177.7 220.5,177.2 220.7,176.8 220.9,176.3 221.1,175.8 221.3,175.4 221.5,174.9 221.7,174.5 221.9,174.0 222.1,173.5 222.3,173.1 222.5,172.6 222.7,172.1 222.9,171.7 223.1,171.2 223.3,170.8 223.5,170.3 223.7,169.8 223.9,169.4 224.1,168.9 224.3,168.5 224.5,168.0 224.7,167.5 224.9,167.1 225.1,166.6 225.3,166.2 225.5,165.7 225.7,165.2 225.9,164.8 226.1,164.3 226.3,163.9 226.5,163.4 226.7,162.9 226.9,162.5 227.1,162.0 227.3,161.5 227.5,161.1 227.7,160.6 227.9,160.2 228.1,159.7 228.3,159.2 228.5,158.8 228.7,158.3 228.9,157.9 229.1,157.4 229.3,156.9 229.5,156.5 229.7,156.0 229.9,155.6 230.1,155.1 230.3,154.6 230.5,154.2 230.7,153.7 230.9,153.3 231.1,152.8 231.3,152.3 231.5,151.9 231.7,151.4 231.9,150.9 232.1,150.5 232.3,150.0 232.5,149.6 232.7,149.1 232.9,148.6 233.1,148.2 233.3,147.7 233.5,147.3 233.7,146.8 233.9,146.3 234.1,145.9 234.3,145.4 234.5,145.0 234.7,144.5 234.9,144.0 235.1,143.6 235.3,143.1 235.5,142.7 235.7,142.2 235.9,141.7 236.1,141.5 236.3,141.4 236.5,141.4 236.7,141.3 236.9,141.3 237.1,141.2 237.3,141.2 237.5,141.1 237.7,141.1 237.9,141.0 238.1,141.0 238.3,140.9 238.5,140.9 238.7,140.8 238.9,140.8 239.1,140.7 239.3,140.7 239.5,140.6 239.7,140.6 239.9,140.5 240.1,140.5 240.3,140.5 240.5,140.5 240.7,140.5 240.9,140.6 241.1,140.6 241.3,140.6 241.5,140.6 241.7,140.6 241.9,140.6 242.1,140.6 242.3,140.7 242.5,140.7 242.7,140.7 242.9,140.7 243.1,140.7 243.3,140.7 243.5,140.7 243.7,140.8 243.9,140.8 244.1,140.8 244.3,140.8 244.5,140.8 244.7,140.8 244.9,140.8 245.1,140.9 245.3,140.9 245.5,140.9 245.7,140.9 245.9,140.9 246.1,140.9 246.3,140.9 246.5,141.0 246.7,141.0 246.9,141.0 247.1,140.9 247.3,140.8 247.5,140.7 247.7,140.6 247.9,140.4 248.1,140.3 248.3,140.2 248.5,140.0 248.7,139.9 248.9,139.8 249.1,139.7 249.3,139.5 249.5,139.4 249.7,139.3 249.9,139.2 250.1,139.0 250.3,138.9 250.5,138.8 250.7,138.6 250.9,138.5 251.1,138.4 251.3,138.3 251.5,138.1 251.7,138.0 251.9,137.9 252.1,137.8 252.3,137.6 252.5,137.5 252.7,138.3 252.9,139.2 253.1,140.0 253.3,140.8 253.5,141.7 253.7,142.5 253.9,143.4 254.1,144.2 254.3,145.0 254.5,145.9 254.7,146.7 254.9,147.5 255.1,148.4 255.3,149.2 255.5,150.0 255.7,150.9 255.9,151.7 256.1,152.6 256.3,153.4 256.5,154.2 256.7,155.1 256.9,155.9 257.1,156.7 257.3,157.6 257.5,158.4 257.7,159.2 257.9,160.1 258.1,161.1 258.3,162.2 258.5,163.4 258.7,164.5 258.9,165.6 259.1,166.8 259.3,167.9 259.5,169.1 259.7,170.2 259.9,171.4 260.1,172.5 260.3,173.6 260.5,174.8 260.7,175.9 260.9,177.1 261.1,178.2 261.3,179.4 261.5,180.5 261.7,181.6 261.9,182.8 262.1,183.9 262.3,185.1 262.5,186.2 262.7,187.4 262.9,188.5 263.1,189.6 263.3,190.8 263.5,191.9 263.7,193.1 263.9,194.2 264.1,195.4 264.3,196.5 264.5,197.6 264.7,198.8 264.9,199.9 265.1,201.1 265.3,202.2 265.5,203.4 265.7,204.5 265.9,205.6 266.1,206.8 266.3,207.9 266.5,209.1 266.7,210.2 266.9,211.4 267.1,212.5 267.3,213.6 267.5,214.8 267.7,215.9 267.9,217.1 268.1,218.2 268.3,219.4 268.5,220.5 268.7,221.6 268.9,222.8 269.1,223.9 269.3,225.1 269.5,226.2 269.7,227.4 269.9,228.5 270.1,229.6 270.3,230.8 270.5,231.9 270.7,233.1 270.9,234.2 271.1,235.4 271.3,236.5 271.5,237.6 271.7,238.8 271.9,239.9 272.1,240.8 272.3,241.4 272.5,242.1 272.7,242.8 272.9,243.5 273.1,244.3 273.3,245.1 273.5,245.9 273.7,246.8 273.9,247.7 274.1,248.6 274.3,249.5 274.5,250.5 274.7,251.5 274.9,252.5 275.1,253.5 275.3,254.5 275.5,255.5 275.7,256.4 275.9,257.4 276.1,258.4 276.3,259.3 276.5,260.2 276.7,261.0 276.9,261.8 277.1,262.6 277.3,263.3 277.5,263.9 277.7,264.4 277.9,264.9 278.1,265.3 278.3,265.6 278.5,265.8 278.7,265.8 278.9,265.8 279.1,265.7 279.3,265.5 279.5,265.1 279.7,264.7 279.9,264.1 280.1,263.4 280.3,262.6 280.5,261.7 280.7,260.7 280.9,259.6 281.1,258.5 281.3,257.3 281.5,256.0 281.7,254.6 281.9,253.2 282.1,251.8 282.3,250.3 282.5,248.8 282.7,247.2 282.9,245.5 283.1,243.8 283.3,242.0 283.5,240.2 283.7,238.3 283.9,236.3 284.1,234.4 284.3,232.3 284.5,230.3 284.7,228.1 284.9,226.0 285.1,223.8 285.3,221.5 285.5,219.3 285.7,216.9 285.9,214.6 286.1,212.2 286.3,209.8 286.5,207.4 286.7,205.0 286.9,202.5 287.1,200.1 287.3,197.6 287.5,195.1 287.7,192.7 287.9,190.2 288.1,187.7 288.3,185.2 288.5,182.8 288.7,180.3 288.9,177.9 289.1,175.5 289.3,173.1 289.5,170.7 289.7,168.4 289.9,166.1 290.1,163.9 290.3,161.7 290.5,159.5 290.7,157.4 290.9,155.4 291.1,153.4 291.3,151.5 291.5,149.7 291.7,147.9 291.9,146.2 292.1,144.6 292.3,143.1 292.5,141.6 292.7,140.3 292.9,139.0 293.1,137.8 293.3,136.8 293.5,135.8 293.7,134.9 293.9,134.2 294.1,133.5 294.3,133.0 294.5,132.6 294.7,132.3 294.9,132.1 295.1,132.1 295.3,132.1 295.5,132.3 295.7,132.6 295.9,133.1 296.1,133.6 296.3,134.3 296.5,135.2 296.7,136.1 296.9,137.2 297.1,138.3 297.3,139.7 297.5,141.1 297.7,142.7 297.9,144.3 298.1,146.1 298.3,148.0 298.5,150.0 298.7,152.2 298.9,154.4 299.1,156.7 299.3,159.2 299.5,161.7 299.7,164.3 299.9,167.0 300.1,169.8 300.3,172.6 300.5,175.5 300.7,178.5 300.9,181.5 301.1,184.6 301.3,187.7 301.5,190.9 301.7,194.1 301.9,197.3 302.1,200.6 302.3,203.8 302.5,207.1 302.7,210.3 302.9,213.5 303.1,216.7 303.3,219.9 303.5,223.1 303.7,226.2 303.9,229.2 304.1,232.2 304.3,235.1 304.5,237.9 304.7,240.7 304.9,243.4 305.1,245.9 305.3,248.4 305.5,250.7 305.7,253.0 305.9,255.0 306.1,257.0 306.3,258.8 306.5,260.5 306.7,262.0 306.9,263.4 307.1,264.6 307.3,265.6 307.5,266.5 307.7,267.2 307.9,267.7 308.1,268.0 308.3,268.2 308.5,268.1 308.7,267.9 308.9,267.5 309.1,266.9 309.3,266.1 309.5,265.1 309.7,264.0 309.9,262.6 310.1,261.1 310.3,259.4 310.5,257.5 310.7,255.4 310.9,253.2 311.1,250.8 311.3,248.3 311.5,245.6 311.7,242.8 311.9,239.8 312.1,236.7 312.3,233.5 312.5,230.2 312.7,226.8 312.9,223.3 313.1,219.7 313.3,216.0 313.5,212.3 313.7,208.5 313.9,204.8 314.1,200.9 314.3,197.1 314.5,193.3 314.7,189.5 314.9,185.7 315.1,182.0 315.3,178.3 315.5,174.7 315.7,171.2 315.9,167.7 316.1,164.4 316.3,161.1 316.5,158.1 316.7,155.1 316.9,152.3 317.1,149.7 317.3,147.2 317.5,144.9 317.7,142.8 317.9,140.9 318.1,139.2 318.3,137.8 318.5,136.5 318.7,135.5 318.9,134.8 319.1,134.2 319.3,133.9 319.5,133.9 319.7,134.1 319.9,134.6 320.1,135.3 320.3,136.2 320.5,137.4 320.7,138.8 320.9,140.5 321.1,142.4 321.3,144.6 321.5,146.9 321.7,149.5 321.9,152.3 322.1,155.3 322.3,158.5 322.5,161.8 322.7,165.3 322.9,168.9 323.1,172.7 323.3,176.6 323.5,180.6 323.7,184.7 323.9,188.9 324.1,193.1 324.3,197.4 324.5,201.7 324.7,205.9 324.9,210.2 325.1,214.4 325.3,218.6 325.5,222.7 325.7,226.7 325.9,230.7 326.1,234.4 326.3,238.1 326.5,241.6 326.7,244.9 326.9,248.0 327.1,250.9 327.3,253.6 327.5,256.1 327.7,258.3 327.9,260.2 328.1,261.9 328.3,263.3 328.5,264.4 328.7,265.2 328.9,265.8 329.1,266.0 329.3,265.9 329.5,265.5 329.7,264.8 329.9,263.8 330.1,262.5 330.3,260.8 330.5,258.9 330.7,256.7 330.9,254.3 331.1,251.6 331.3,248.6 331.5,245.3 331.7,241.9 331.9,238.2 332.1,234.4 332.3,230.3 332.5,226.1 332.7,221.8 332.9,217.4 333.1,212.9 333.3,208.3 333.5,203.6 333.7,198.9 333.9,194.3 334.1,189.6 334.3,185.0 334.5,180.5 334.7,176.1 334.9,171.8 335.1,167.7 335.3,163.7 335.5,159.9 335.7,156.3 335.9,153.0 336.1,149.9 336.3,147.1 336.5,144.6 336.7,142.4 336.9,140.5 337.1,138.9 337.3,137.7 337.5,136.8 337.7,136.3 337.9,136.1 338.1,136.3 338.3,136.9 338.5,137.8 338.7,139.1 338.9,140.8 339.1,142.7 339.3,145.1 339.5,147.7 339.7,150.7 339.9,154.0 340.1,157.5 340.3,161.3 340.5,165.4 340.7,169.6 340.9,174.0 341.1,178.7 341.3,183.4 341.5,188.3 341.7,193.2 341.9,198.2 342.1,203.2 342.3,208.2 342.5,213.1 342.7,218.0 342.9,222.8 343.1,227.4 343.3,231.9 343.5,236.2 343.7,240.3 343.9,244.1 344.1,247.6 344.3,250.9 344.5,253.8 344.7,256.4 344.9,258.6 345.1,260.5 345.3,262.0 345.5,263.0 345.7,263.7 345.9,263.9 346.1,263.7 346.3,263.1 346.5,262.1 346.7,260.7 346.9,258.8 347.1,256.6 347.3,254.0 347.5,251.0 347.7,247.6 347.9,244.0 348.1,240.0 348.3,235.8 348.5,231.3 348.7,226.6 348.9,221.7 349.1,216.6 349.3,211.5 349.5,206.2 349.7,200.9 349.9,195.6 350.1,190.3 350.3,185.1 350.5,180.0 350.7,175.0 350.9,170.2 351.1,165.7 351.3,161.3 351.5,157.3 351.7,153.6 351.9,150.2 352.1,147.2 352.3,144.5 352.5,142.3 352.7,140.5 352.9,139.2 353.1,138.3 353.3,137.9 353.5,138.0 353.7,138.6 353.9,139.6 354.1,141.1 354.3,143.0 354.5,145.4 354.7,148.2 354.9,151.5 355.1,155.1 355.3,159.1 355.5,163.4 355.7,168.0 355.9,172.9 356.1,178.0 356.3,183.2 356.5,188.7 356.7,194.2 356.9,199.8 357.1,205.4 357.3,210.9 357.5,216.4 357.7,221.7 357.9,226.9 358.1,231.9 358.3,236.6 358.5,241.1 358.7,245.2 358.9,248.9 359.1,252.2 359.3,255.1 359.5,257.6 359.7,259.5 359.9,261.0 360.1,262.0 360.3,262.4 360.5,262.3 360.7,261.7 360.9,260.5 361.1,258.8 361.3,256.7 361.5,254.0 361.7,250.8 361.9,247.2 362.1,243.2 362.3,238.9 362.5,234.1 362.7,229.1 362.9,223.8 363.1,218.3 363.3,212.6 363.5,206.8 363.7,201.0 363.9,195.1 364.1,189.3 364.3,183.6 364.5,178.0 364.7,172.6 364.9,167.5 365.1,162.7 365.3,158.2 365.5,154.1 365.7,150.4 365.9,147.2 366.1,144.5 366.3,142.3 366.5,140.7 366.7,139.6 366.9,139.1 367.1,139.2 367.3,139.9 367.5,141.1 367.7,142.9 367.9,145.3 368.1,148.2 368.3,151.7 368.5,155.6 368.7,159.9 368.9,164.7 369.1,169.8 369.3,175.2 369.5,180.9 369.7,186.8 369.9,192.8 370.1,198.9 370.3,205.0 370.5,211.1 370.7,217.1 370.9,222.9 371.1,228.5 371.3,233.9 371.5,238.9 371.7,243.5 371.9,247.7 372.1,251.4 372.3,254.5 372.5,257.2 372.7,259.2 372.9,260.6 373.1,261.4 373.3,261.6 373.5,261.1 373.7,260.0 373.9,258.3 374.1,255.9 374.3,252.9 374.5,249.4 374.7,245.4 374.9,240.8 375.1,235.9 375.3,230.5 375.5,224.8 375.7,218.9 375.9,212.7 376.1,206.4 376.3,200.0 376.5,193.6 376.7,187.3 376.9,181.1 377.1,175.1 377.3,169.4 377.5,164.0 377.7,159.1 377.9,154.6 378.1,150.6 378.3,147.1 378.5,144.3 378.7,142.1 378.9,140.6 379.1,139.7 379.3,139.5 379.5,140.1 379.7,141.4 379.9,143.3 380.1,146.0 380.3,149.3 380.5,153.1 380.7,157.6 380.9,162.5 381.1,167.9 381.3,173.6 381.5,179.7 381.7,186.0 381.9,192.4 382.1,198.9 382.3,205.3 382.5,211.7 382.7,217.9 382.9,223.9 383.1,229.5 383.3,234.7 383.5,239.5 383.7,243.7 383.9,247.4 384.1,250.4 384.3,252.8 384.5,254.5 384.7,255.6 384.9,255.9 385.1,255.6 385.3,254.5 385.5,252.8 385.7,250.4 385.9,247.4 386.1,243.9 386.3,239.9 386.5,235.4 386.7,230.5 386.9,225.3 387.1,219.9 387.3,214.3 387.5,208.6 387.7,202.9 387.9,197.2 388.1,191.7 388.3,186.4 388.5,181.3 388.7,176.6 388.9,172.4 389.1,168.5 389.3,165.2 389.5,162.3 389.7,160.1 389.9,158.4 390.1,157.4 390.3,156.9 390.5,157.0 390.7,157.8 390.9,159.0 391.1,160.9 391.3,163.2 391.5,166.0 391.7,169.2 391.9,172.7 392.1,176.6 392.3,180.7 392.5,184.9 392.7,189.3 392.9,193.7 393.1,198.1 393.3,202.5 393.5,206.7 393.7,210.7 393.9,214.4 394.1,217.9 394.3,221.0 394.5,223.7 394.7,226.0 394.9,227.9 395.1,229.4 395.3,230.4 395.5,230.9 395.7,231.0 395.9,230.7 396.1,229.9 396.3,228.7 396.5,227.1 396.7,225.2 396.9,223.0 397.1,220.5 397.3,217.8 397.5,215.0 397.7,212.0 397.9,208.9 398.1,205.8 398.3,202.7 398.5,199.7 398.7,196.8 398.9,194.0 399.1,191.5 399.3,189.1 399.5,187.0 399.7,185.1 399.9,183.5 400.1,182.3 400.3,181.3 400.5,180.7 400.7,180.3 400.9,180.3 401.1,180.6 401.3,181.2 401.5,182.1 401.7,183.2 401.9,184.5 402.1,186.1 402.3,187.8 402.5,189.7 402.7,191.7 402.9,193.8 403.1,196.0 403.3,198.1 403.5,200.3 403.7,202.4 403.9,204.5 404.1,206.5 404.3,208.3 404.5,210.0 404.7,211.6 404.9,212.9 405.1,214.1 405.3,215.0 405.5,215.7 405.7,216.2 405.9,216.5 406.1,216.5 406.3,216.2 406.5,215.7 406.7,214.9 406.9,213.9 407.1,212.7 407.3,211.2 407.5,209.6 407.7,207.8 407.9,205.9 408.1,204.0 408.3,201.9 408.5,199.8 408.7,197.8 408.9,195.8 409.1,193.8 409.3,192.0 409.5,190.3 409.7,188.8 409.9,187.5 410.1,186.4 410.3,185.5 410.5,184.9 410.7,184.6 410.9,184.5 411.1,184.7 411.3,185.2 411.5,186.0 411.7,187.0 411.9,188.2" stroke="#d67a9c" stroke-width="0.56" stroke-opacity="0.95" stroke-linejoin="round"/><polyline points="412.1,189.7 412.3,191.4 412.5,193.2 412.7,195.1 412.9,197.2 413.1,199.3 413.3,201.4 413.5,203.5 413.7,205.6 413.9,207.6 414.1,209.4 414.3,211.1 414.5,212.6 414.7,213.9 414.9,215.0 415.1,215.8 415.3,216.3 415.5,216.5 415.7,216.4 415.9,216.1 416.1,215.4 416.3,214.5 416.5,213.3 416.7,211.9 416.9,210.3 417.1,208.5 417.3,206.5 417.5,204.4 417.7,202.3 417.9,200.1 418.1,197.9 418.3,195.8 418.5,193.7 418.7,191.8 418.9,190.1 419.1,188.5 419.3,187.2 419.5,186.1 419.7,185.3 419.9,184.7 420.1,184.5 420.3,184.6 420.5,185.0 420.7,185.7 420.9,186.7 421.1,187.9 421.3,189.4 421.5,191.1 421.7,193.0 421.9,195.1 422.1,197.2 422.3,199.4 422.5,201.7 422.7,203.9 422.9,206.1 423.1,208.1 423.3,210.0 423.5,211.7 423.7,213.2 423.9,214.5 424.1,215.4 424.3,216.1 424.5,216.4 424.7,216.5 424.9,216.2 425.1,215.6 425.3,214.7 425.5,213.5 425.7,212.0 425.9,210.3 426.1,208.4 426.3,206.3 426.5,204.1 426.7,201.8 426.9,199.5 427.1,197.3 427.3,195.0 427.5,192.9 427.7,191.0 427.9,189.2 428.1,187.7 428.3,186.5 428.5,185.5 428.7,184.8 428.9,184.5 429.1,184.6 429.3,184.9 429.5,185.6 429.7,186.6 429.9,187.9 430.1,189.5 430.3,191.3 430.5,193.3 430.7,195.5 430.9,197.8 431.1,200.1 431.3,202.4 431.5,204.8 431.7,207.0 431.9,209.1 432.1,211.0 432.3,212.6 432.5,214.0 432.7,215.1 432.9,215.9 433.1,216.4 433.3,216.5 433.5,216.2 433.7,215.6 433.9,214.7 434.1,213.4 434.3,211.9 434.5,210.1 434.7,208.1 434.9,205.9 435.1,203.6 435.3,201.2 435.5,198.8 435.7,196.4 435.9,194.1 436.1,192.0 436.3,190.1 436.5,188.4 436.7,186.9 436.9,185.8 437.1,185.0 437.3,184.6 437.5,184.5 437.7,184.8 437.9,185.5 438.1,186.5 438.3,187.9 438.5,189.5 438.7,191.4 438.9,193.5 439.1,195.8 439.3,198.2 439.5,200.6 439.7,203.1 439.9,205.5 440.1,207.7 440.3,209.8 440.5,211.7 440.7,213.3 440.9,214.7 441.1,215.6 441.3,216.3 441.5,216.5 441.7,216.4 441.9,215.8 442.1,214.9 442.3,213.7 442.5,212.1 442.7,210.3 442.9,208.2 443.1,205.9 443.3,203.5 443.5,201.0 443.7,198.5 443.9,196.0 444.1,193.7 444.3,191.5 444.5,189.5 444.7,187.8 444.9,186.5 445.1,185.4 445.3,184.8 445.5,184.5 445.7,184.6 445.9,185.2 446.1,186.1 446.3,187.4 446.5,189.0 446.7,190.9 446.9,193.0 447.1,195.4 447.3,197.8 447.5,200.4 447.7,202.9 447.9,205.4 448.1,207.8 448.3,210.0 448.5,211.9 448.7,213.6 448.9,214.9 449.1,215.8 449.3,216.4 449.5,216.5 449.7,216.2 449.9,215.5 450.1,214.4 450.3,213.0 450.5,211.2 450.7,209.2 450.9,206.9 451.1,204.4 451.3,201.9 451.5,199.3 451.7,196.7 451.9,194.2 452.1,191.9 452.3,189.8 452.5,188.0 452.7,186.6 452.9,185.5 453.1,184.8 453.3,184.5 453.5,184.7 453.7,185.3 453.9,186.3 454.1,187.6 454.3,189.4 454.5,191.4 454.7,193.7 454.9,196.2 455.1,198.8 455.3,201.4 455.5,204.1 455.7,206.6 455.9,209.0 456.1,211.1 456.3,212.9 456.5,214.4 456.7,215.5 456.9,216.2 457.1,216.5 457.3,216.3 457.5,215.7 457.7,214.6 457.9,213.2 458.1,211.4 458.3,209.2 458.5,206.9 458.7,204.3 458.9,201.7 459.1,199.0 459.3,196.3 459.5,193.8 459.7,191.4 459.9,189.3 460.1,187.6 460.3,186.2 460.5,185.2 460.7,184.6 460.9,184.5 461.1,184.9 461.3,185.7 461.5,186.9 461.7,188.6 461.9,190.6 462.1,192.9 462.3,195.4 462.5,198.0 462.7,200.8 462.9,203.5 463.1,206.1 463.3,208.6 463.5,210.8 463.7,212.8 463.9,214.4 464.1,215.5 464.3,216.2 464.5,216.5 464.7,216.3 464.9,215.6 465.1,214.4 465.3,212.9 465.5,210.9 465.7,208.7 465.9,206.2 466.1,203.5 466.3,200.7 466.5,197.9 466.7,195.2 466.9,192.7 467.1,190.4 467.3,188.4 467.5,186.7 467.7,185.5 467.9,184.8 468.1,184.5 468.3,184.7 468.5,185.4 468.7,186.6 468.9,188.2 469.1,190.2 469.3,192.5 469.5,195.1 469.7,197.8 469.9,200.6 470.1,203.4 470.3,206.2 470.5,208.7 470.7,211.0 470.9,213.0 471.1,214.6 471.3,215.7 471.5,216.3 471.7,216.5 471.9,216.1 472.1,215.3 472.3,213.9 472.5,212.2 472.7,210.1 472.9,207.6 473.1,204.9 473.3,202.1 473.5,199.2 473.7,196.4 473.9,193.7 474.1,191.2 474.3,189.1 474.5,187.2 474.7,185.9 474.9,184.9 475.1,184.5 475.3,184.6 475.5,185.2 475.7,186.3 475.9,187.9 476.1,189.9 476.3,192.2 476.5,194.7 476.7,197.5 476.9,200.4 477.1,203.2 477.3,206.0 477.5,208.6 477.7,210.9 477.9,212.9 478.1,214.5 478.3,215.7 478.5,216.3 478.7,216.5 478.9,216.1 479.1,215.3 479.3,213.9 479.5,212.1 479.7,210.0 479.9,207.5 480.1,204.8 480.3,202.0 480.5,199.1 480.7,196.3 480.9,193.6 481.1,191.2 481.3,189.0 481.5,187.2 481.7,185.8 481.9,184.9 482.1,184.5 482.3,184.6 482.5,185.3 482.7,186.4 482.9,188.0 483.1,189.9 483.3,192.3 483.5,194.8 483.7,197.6 483.9,200.5 484.1,203.3 484.3,206.1 484.5,208.7 484.7,211.0 484.9,213.0 485.1,214.6 485.3,215.7 485.5,216.4 485.7,216.5 485.9,216.1 486.1,215.2 486.3,213.9 486.5,212.1 486.7,209.9 486.9,207.4 487.1,204.7 487.3,201.9 487.5,199.0 487.7,196.2 487.9,193.5 488.1,191.1 488.3,188.9 488.5,187.1 488.7,185.8 488.9,184.9 489.1,184.5 489.3,184.7 489.5,185.3 489.7,186.4 489.9,188.0 490.1,190.0 490.3,192.3 490.5,194.9 490.7,197.7 490.9,200.6 491.1,203.4 491.3,206.2 491.5,208.8 491.7,211.1 491.9,213.1 492.1,214.6 492.3,215.7 492.5,216.4 492.7,216.5 492.9,216.1 493.1,215.2 493.3,213.8 493.5,212.0 493.7,209.8 493.9,207.3 494.1,204.6 494.3,201.8 494.5,198.9 494.7,196.1 494.9,193.4 495.1,191.0 495.3,188.8 495.5,187.1 495.7,185.7 495.9,184.9 496.1,184.5 496.3,184.7 496.5,185.3 496.7,186.5 496.9,188.1 497.1,190.1 497.3,192.4 497.5,195.0 497.7,197.8 497.9,200.7 498.1,203.5 498.3,206.3 498.5,208.9 498.7,211.2 498.9,213.1 499.1,214.7 499.3,215.8 499.5,216.4 499.7,216.5 499.9,216.1 500.1,215.1 500.3,213.7 500.5,211.9 500.7,209.7 500.9,207.3 501.1,204.6 501.3,201.7 501.5,198.8 501.7,196.0 501.9,193.4 502.1,190.9 502.3,188.8 502.5,187.0 502.7,185.7 502.9,184.9 503.1,184.5 503.3,184.7 503.5,185.4 503.7,186.5 503.9,188.1 504.1,190.2 504.3,192.5 504.5,195.1 504.7,197.9 504.9,200.8 505.1,203.6 505.3,206.4 505.5,208.9 505.7,211.2 505.9,213.2 506.1,214.7 506.3,215.8 506.5,216.4 506.7,216.5 506.9,216.0 507.1,215.1 507.3,213.7 507.5,211.9 507.7,209.7 507.9,207.2 508.1,204.5 508.3,201.6 508.5,198.7 508.7,195.9 508.9,193.3 509.1,190.8 509.3,188.7 509.5,187.0 509.7,185.7 509.9,184.8 510.1,184.5 510.3,184.7 510.5,185.4 510.7,186.6 510.9,188.2 511.1,190.2 511.3,192.6 511.5,195.2 511.7,198.0 511.9,200.9 512.1,203.7 512.3,206.5 512.5,209.0 512.7,211.3 512.9,213.2 513.1,214.8 513.3,215.8 513.5,216.4 513.7,216.5 513.9,216.0 514.1,215.1 514.3,213.6 514.5,211.8 514.7,209.6 514.9,207.1 515.1,204.4 515.3,201.5 515.5,198.6 515.7,195.8 515.9,193.2 516.1,190.8 516.3,188.6 516.5,186.9 516.7,185.6 516.9,184.8 517.1,184.5 517.3,184.7 517.5,185.4 517.7,186.6 517.9,188.3 518.1,190.3 518.3,192.7 518.5,195.3 518.7,198.1 518.9,201.0 519.1,203.8 519.3,206.6 519.5,209.1 519.7,211.4 519.9,213.3 520.1,214.8 520.3,215.9 520.5,216.4 520.7,216.5 520.9,216.0 521.1,215.0 521.3,213.6 521.5,211.7 521.7,209.5 521.9,207.0 522.1,204.3 522.3,201.4 522.5,198.5 522.7,195.7 522.9,193.1 523.1,190.7 523.3,188.6 523.5,186.9 523.7,185.6 523.9,184.8 524.1,184.5 524.3,184.7 524.5,185.5 524.7,186.7 524.9,188.3 525.1,190.4 525.3,192.8 525.5,195.4 525.7,198.2 525.9,201.1 526.1,203.9 526.3,206.7 526.5,209.2 526.7,211.5 526.9,213.4 527.1,214.9 527.3,215.9 527.5,216.4 527.7,216.4 527.9,216.0 528.1,215.0 528.3,213.5 528.5,211.6 528.7,209.4 528.9,206.9 529.1,204.2 529.3,201.3 529.5,198.4 529.7,195.6 529.9,193.0 530.1,190.6 530.3,188.5 530.5,186.8 530.7,185.5 530.9,184.8 531.1,184.5 531.3,184.7 531.5,185.5 531.7,186.7 531.9,188.4 532.1,190.5 532.3,192.9 532.5,195.5 532.7,198.3 532.9,201.2 533.1,204.0 533.3,206.7 533.5,209.3 533.7,211.5 533.9,213.4 534.1,214.9 534.3,215.9 534.5,216.4 534.7,216.4 534.9,215.9 535.1,214.9 535.3,213.5 535.5,211.6 535.7,209.3 535.9,206.8 536.1,204.1 536.3,201.2 536.5,198.4 536.7,195.6 536.9,192.9 537.1,190.5 537.3,188.4 537.5,186.8 537.7,185.5 537.9,184.8 538.1,184.5 538.3,184.8 538.5,185.5 538.7,186.8 538.9,188.5 539.1,190.6 539.3,193.0 539.5,195.6 539.7,198.4 539.9,201.3 540.1,204.1 540.3,206.8 540.5,209.4 540.7,211.6 540.9,213.5 541.1,214.9 541.3,215.9 541.5,216.4 541.7,216.4 541.9,215.9 542.1,214.9 542.3,213.4 542.5,211.5 542.7,209.2 542.9,206.7 543.1,204.0 543.3,201.1 543.5,198.3 543.7,195.5 543.9,192.8 544.1,190.4 544.3,188.4 544.5,186.7 544.7,185.5 544.9,184.7 545.1,184.5 545.3,184.8 545.5,185.6 545.7,186.8 545.9,188.5 546.1,190.6 546.3,193.0 546.5,195.7 546.7,198.5 546.9,201.4 547.1,204.2 547.3,206.9 547.5,209.4 547.7,211.7 547.9,213.5 548.1,215.0 548.3,216.0 548.5,216.5 548.7,216.4 548.9,215.9 549.1,214.8 549.3,213.3 549.5,211.4 549.7,209.2 549.9,206.6 550.1,203.9 550.3,201.0 550.5,198.2 550.7,195.4 550.9,192.7 551.1,190.4 551.3,188.3 551.5,186.7 551.7,185.4 551.9,184.7 552.1,184.5 552.3,184.8 552.5,185.6 552.7,186.9 552.9,188.6 553.1,190.7 553.3,193.1 553.5,195.8 553.7,198.6 553.9,201.5 554.1,204.3 554.3,207.0 554.5,209.5 554.7,211.7 554.9,213.6 555.1,215.0 555.3,216.0 555.5,216.5 555.7,216.4 555.9,215.8 556.1,214.8 556.3,213.3 556.5,211.3 556.7,209.1 556.9,206.5 557.1,203.8 557.3,200.9 557.5,198.1 557.7,195.3 557.9,192.6 558.1,190.3 558.3,188.2 558.5,186.6 558.7,185.4 558.9,184.7 559.1,184.5 559.3,184.8 559.5,185.6 559.7,186.9 559.9,188.7 560.1,190.8 560.3,193.2 560.5,195.9 560.7,198.7 560.9,201.6 561.1,204.4 561.3,207.1 561.5,209.6 561.7,211.8 561.9,213.7 562.1,215.1 562.3,216.0 562.5,216.5 562.7,216.4 562.9,215.8 563.1,214.7 563.3,213.2 563.5,211.3 563.7,209.0 563.9,206.4 564.1,203.7 564.3,200.8 564.5,198.0 564.7,195.2 564.9,192.6 565.1,190.2 565.3,188.2 565.5,186.6 565.7,185.4 565.9,184.7 566.1,184.5 566.3,184.8 566.5,185.7 566.7,187.0 566.9,188.7 567.1,190.9 567.3,193.3 567.5,196.0 567.7,198.8 567.9,201.7 568.1,204.5 568.3,207.2 568.5,209.7 568.7,211.9 568.9,213.7 569.1,215.1 569.3,216.0 569.5,216.5 569.7,216.4 569.9,215.8 570.1,214.7 570.3,213.2 570.5,211.2 570.7,208.9 570.9,206.3 571.1,203.6 571.3,200.7 571.5,197.9 571.7,195.1 571.9,192.5 572.1,190.1 572.3,188.1 572.5,186.5 572.7,185.3 572.9,184.7 573.1,184.5 573.3,184.9 573.5,185.7 573.7,187.0 573.9,188.8 574.1,191.0 574.3,193.4 574.5,196.1 574.7,198.9 574.9,201.8 575.1,204.6 575.3,207.3 575.5,209.8 575.7,212.0 575.9,213.8 576.1,215.2 576.3,216.1 576.5,216.5 576.7,216.4 576.9,215.8 577.1,214.7 577.3,213.1 577.5,211.1 577.7,208.8 577.9,206.2 578.1,203.5 578.3,200.6 578.5,197.8 578.7,195.0 578.9,192.4 579.1,190.1 579.3,188.1 579.5,186.5 579.7,185.3 579.9,184.7 580.1,184.5 580.3,184.9 580.5,185.8 580.7,187.1 580.9,188.9 581.1,191.0 581.3,193.5 581.5,196.2 581.7,199.0 581.9,201.9 582.1,204.7 582.3,207.4 582.5,209.9 582.7,212.0 582.9,213.8 583.1,215.2 583.3,216.1 583.5,216.5 583.7,216.4 583.9,215.7 584.1,214.6 584.3,213.0 584.5,211.0 584.7,208.7 584.9,206.1 585.1,203.4 585.3,200.5 585.5,197.7 585.7,194.9 585.9,192.3 586.1,190.0 586.3,188.0 586.5,186.4 586.7,185.3 586.9,184.6 587.1,184.5 587.3,184.9 587.5,185.8 587.7,187.2 587.9,189.0 588.1,191.1 588.3,193.6 588.5,196.3 588.7,199.1 588.9,202.0 589.1,204.8 589.3,207.5 589.5,209.9 589.7,212.1 589.9,213.9 590.1,215.2 590.3,216.1 590.5,216.5 590.7,216.3 590.9,215.7 591.1,214.6 591.3,213.0 591.5,211.0 591.7,208.6 591.9,206.0 592.1,203.3 592.3,200.4 592.5,197.6 592.7,194.8 592.9,192.2 593.1,189.9 593.3,187.9 593.5,186.4 593.7,185.3 593.9,184.6 594.1,184.5 594.3,184.9 594.5,185.8 594.7,187.2 594.9,189.0 595.1,191.2 595.3,193.7 595.5,196.4 595.7,199.2 595.9,202.1 596.1,204.9 596.3,207.6 596.5,210.0 596.7,212.2 596.9,213.9 597.1,215.3 597.3,216.1 597.5,216.5 597.7,216.3 597.9,215.7 598.1,214.5 598.3,212.9 598.5,210.9 598.7,208.6 598.9,206.0 599.1,203.2 599.3,200.3 599.5,197.5 599.7,194.7 599.9,192.1 600.1,189.8 600.3,187.9 600.5,186.3 600.7,185.2 600.9,184.6 601.1,184.5 601.3,185.0 601.5,185.9 601.7,187.3 601.9,189.1 602.1,191.3 602.3,193.8 602.5,196.5 602.7,199.3 602.9,202.2 603.1,205.0 603.3,207.7 603.5,210.1 603.7,212.2 603.9,214.0 604.1,215.3 604.3,216.2 604.5,216.5 604.7,216.3 604.9,215.6 605.1,214.5 605.3,212.8 605.5,210.8 605.7,208.5 605.9,205.9 606.1,203.1 606.3,200.2 606.5,197.4 606.7,194.6 606.9,192.0 607.1,189.8 607.3,187.8 607.5,186.3 607.7,185.2 607.9,184.6 608.1,184.5 608.3,185.0 608.5,185.9 608.7,187.3 608.9,189.2 609.1,191.4 609.3,193.9 609.5,196.6 609.7,199.4 609.9,202.3 610.1,205.1 610.3,207.8 610.5,210.2 610.7,212.3 610.9,214.0 611.1,215.3 611.3,216.2 611.5,216.5 611.7,216.3 611.9,215.6 612.1,214.4 612.3,212.8 612.5,210.7 612.7,208.4 612.9,205.8 613.1,203.0 613.3,200.1 613.5,197.3 613.7,194.5 613.9,192.0 614.1,189.7 614.3,187.7 614.5,186.2 614.7,185.2 614.9,184.6 615.1,184.5 615.3,185.0 615.5,186.0 615.7,187.4 615.9,189.2 616.1,191.4 616.3,193.9 616.5,196.7 616.7,199.5 616.9,202.4 617.1,205.2 617.3,207.8 617.5,210.3 617.7,212.4 617.9,214.1 618.1,215.4 618.3,216.2 618.5,216.5 618.7,216.3 618.9,215.6 619.1,214.4 619.3,212.7 619.5,210.7 619.7,208.3 619.9,205.7 620.1,202.9 620.3,200.0 620.5,197.2 620.7,194.4 620.9,191.9 621.1,189.6 621.3,187.7 621.5,186.2 621.7,185.1 621.9,184.6 622.1,184.5 622.3,185.0 622.5,186.0 622.7,187.4 622.9,189.3 623.1,191.5 623.3,194.0 623.5,196.8 623.7,199.6 623.9,202.5 624.1,205.3 624.3,207.9 624.5,210.3 624.7,212.4 624.9,214.2 625.1,215.4 625.3,216.2 625.5,216.5 625.7,216.3 625.9,215.5 626.1,214.3 626.3,212.6 626.5,210.6 626.7,208.2 626.9,205.6 627.1,202.8 627.3,199.9 627.5,197.1 627.7,194.3 627.9,191.8 628.1,189.5 628.3,187.6 628.5,186.1 628.7,185.1 628.9,184.6 629.1,184.6 629.3,185.0 629.5,186.0 629.7,187.5 629.9,189.4 630.1,191.6 630.3,194.1 630.5,196.9 630.7,199.7 630.9,202.6 631.1,205.4 631.3,208.0 631.5,210.4 631.7,212.5 631.9,214.2 632.1,215.5 632.3,216.2 632.5,216.5 632.7,216.3 632.9,215.5 633.1,214.3 633.3,212.6 633.5,210.5 633.7,208.1 633.9,205.5 634.1,202.7 634.3,199.8 634.5,197.0 634.7,194.2 634.9,191.7 635.1,189.5 635.3,187.6 635.5,186.1 635.7,185.1 635.9,184.6 636.1,184.6 636.3,185.1 636.5,186.1 636.7,187.6 636.9,189.4 637.1,191.7 637.3,194.2 637.5,197.0 637.7,199.8 637.9,202.7 638.1,205.5 638.3,208.1 638.5,210.5 638.7,212.6 638.9,214.3 639.1,215.5 639.3,216.3 639.5,216.5 639.7,216.2 639.9,215.5 640.1,214.2 640.3,212.5 640.5,210.4 640.7,208.0 640.9,205.4 641.1,202.6 641.3,199.7 641.5,196.9 641.7,194.1 641.9,191.6 642.1,189.4 642.3,187.5 642.5,186.0 642.7,185.1 642.9,184.6 643.1,184.6 643.3,185.1 643.5,186.1 643.7,187.6 643.9,189.5 644.1,191.8 644.3,194.3 644.5,197.1 644.7,199.9 644.9,202.8 645.1,205.6 645.3,208.2 645.5,210.6 645.7,212.6 645.9,214.3 646.1,215.5 646.3,216.3 646.5,216.5 646.7,216.2 646.9,215.4 647.1,214.2 647.3,212.4 647.5,210.4 647.7,207.9 647.9,205.3" stroke="#d67a9c" stroke-width="0.5" stroke-opacity="0.6" stroke-linejoin="round"/><path d="M208.0 218.6H648" stroke="#a9a43c" stroke-width="0.9"/><path d="M208.0 199.4H648" stroke="#b8443e" stroke-width="0.7"/><path d="M208.0 200.6H648" stroke="#f2f2f2" stroke-width="1.0"/><path d="M208 101.2L213.4 100.6L209.4 105.2Z" fill="#2fbf3f"/></svg>
<div style="left:400px;top:630.4px;width:44.8px;height:16.4px;background:#22d83a;border:0.5px solid #9fe8a8;box-sizing:border-box;"></div>
<div class="t" style="left:417.2px;top:632.85px;height:13.1px;line-height:13.1px;font-size:10.08px;color:#0a4a14;transform:scaleX(0.940) rotate(0.03deg);transform-origin:0 50%;">Zoom3</div>
<div style="left:450.8px;top:630.4px;width:49.2px;height:16.4px;background:#f4f01c;border:0.5px solid #fbf8a0;box-sizing:border-box;"></div>
<div style="left:454px;top:633.2px;width:9.2px;height:10.8px;background:#fff;border:0.5px solid #999;box-sizing:border-box;"></div>
<div class="t" style="left:468px;top:632.85px;height:13.1px;line-height:13.1px;font-size:10.08px;color:#4a4a0a;transform:scaleX(0.940) rotate(0.03deg);transform-origin:0 50%;">Zoom4</div>
<div style="left:519.2px;top:618.8px;width:203.6px;height:42.4px;border:0.9px solid #e2e2e2;box-sizing:border-box;border-radius:2.5px;"></div>
<div style="left:526px;top:614.8px;width:33.2px;height:8.8px;background:#000;"></div>
<div class="t" style="left:527.6px;top:613.47px;height:11.47px;line-height:11.47px;font-size:8.82px;color:#e8963a;transform:scaleX(0.940) rotate(0.03deg);transform-origin:0 50%;">Cursors</div>
<div style="left:560.4px;top:625.2px;width:59.6px;height:32.8px;border:0.9px solid #e2e2e2;box-sizing:border-box;border-radius:2px;"></div>
<div style="left:567.6px;top:622px;width:16px;height:8px;background:#000;"></div>
<div class="t" style="left:569.2px;top:620.47px;height:11.47px;line-height:11.47px;font-size:8.82px;color:#e8963a;transform:scaleX(0.940) rotate(0.03deg);transform-origin:0 50%;">Ver</div>
<div style="left:588.4px;top:629.2px;width:10px;height:10.4px;background:#fff;border:0.5px solid #aaa;box-sizing:border-box;"></div>
<div class="t" style="left:603.6px;top:628.99px;height:12.01px;line-height:12.01px;font-size:9.24px;color:#e8963a;transform:scaleX(0.940) rotate(0.03deg);transform-origin:0 50%;">A</div>
<div style="left:588.4px;top:641.6px;width:10px;height:10.4px;background:#fff;border:0.5px solid #aaa;box-sizing:border-box;"></div>
<div class="t" style="left:603.6px;top:641.39px;height:12.01px;line-height:12.01px;font-size:9.24px;color:#e8963a;transform:scaleX(0.940) rotate(0.03deg);transform-origin:0 50%;">B</div>
<div style="left:636.4px;top:625.2px;width:59.6px;height:32.8px;border:0.9px solid #e2e2e2;box-sizing:border-box;border-radius:2px;"></div>
<div style="left:643.6px;top:622px;width:16px;height:8px;background:#000;"></div>
<div class="t" style="left:645.2px;top:620.47px;height:11.47px;line-height:11.47px;font-size:8.82px;color:#e8963a;transform:scaleX(0.940) rotate(0.03deg);transform-origin:0 50%;">Hor</div>
<div style="left:664.4px;top:629.2px;width:10px;height:10.4px;background:#fff;border:0.5px solid #aaa;box-sizing:border-box;"></div>
<div class="t" style="left:679.6px;top:628.99px;height:12.01px;line-height:12.01px;font-size:9.24px;color:#e8963a;transform:scaleX(0.940) rotate(0.03deg);transform-origin:0 50%;">A</div>
<div style="left:664.4px;top:641.6px;width:10px;height:10.4px;background:#fff;border:0.5px solid #aaa;box-sizing:border-box;"></div>
<div class="t" style="left:679.6px;top:641.39px;height:12.01px;line-height:12.01px;font-size:9.24px;color:#e8963a;transform:scaleX(0.940) rotate(0.03deg);transform-origin:0 50%;">B</div>
<div style="left:296px;top:669.2px;width:104.4px;height:125.2px;border:0.6px solid #5c5c5c;box-sizing:border-box;"></div>
<div style="left:296px;top:669.2px;width:104.4px;height:10.4px;background:#787878;"></div>
<div class="t" style="left:300.4px;top:669.2px;height:11.6px;line-height:11.6px;font-size:8.93px;color:#3fd23f;transform:scaleX(0.940) rotate(0.03deg);transform-origin:0 50%;opacity:0.9;">Ch #1: ics_f4_iu_ad</div>
<div class="t" style="left:302px;top:682.8px;height:11.6px;line-height:11.6px;font-size:8.93px;color:#e0409a;transform:scaleX(0.940) rotate(0.03deg);transform-origin:0 50%;">Ver/Div: 100.00</div>
<div class="t" style="left:302px;top:696.8px;height:11.6px;line-height:11.6px;font-size:8.93px;color:#e0409a;transform:scaleX(0.940) rotate(0.03deg);transform-origin:0 50%;">Offset: 0</div>
<div class="t" style="left:302px;top:710.8px;height:11.6px;line-height:11.6px;font-size:8.93px;color:#e0409a;transform:scaleX(0.940) rotate(0.03deg);transform-origin:0 50%;">Min: -6.4814256-003</div>
<div class="t" style="left:302px;top:724.8px;height:11.6px;line-height:11.6px;font-size:8.93px;color:#e0409a;transform:scaleX(0.940) rotate(0.03deg);transform-origin:0 50%;">Max: 3.2101858-003</div>
<div class="t" style="left:302px;top:738.8px;height:11.6px;line-height:11.6px;font-size:8.93px;color:#e0409a;transform:scaleX(0.940) rotate(0.03deg);transform-origin:0 50%;">Ver-A :</div>
<div class="t" style="left:302px;top:752.8px;height:11.6px;line-height:11.6px;font-size:8.93px;color:#e0409a;transform:scaleX(0.940) rotate(0.03deg);transform-origin:0 50%;">Ver-B :</div>
<div class="t" style="left:302px;top:766.8px;height:11.6px;line-height:11.6px;font-size:8.93px;color:#e0409a;transform:scaleX(0.940) rotate(0.03deg);transform-origin:0 50%;">Hor-A :</div>
<div class="t" style="left:302px;top:780.8px;height:11.6px;line-height:11.6px;font-size:8.93px;color:#e0409a;transform:scaleX(0.940) rotate(0.03deg);transform-origin:0 50%;">Hor-B :</div>
<div style="left:406px;top:669.2px;width:104.4px;height:125.2px;border:0.6px solid #5c5c5c;box-sizing:border-box;"></div>
<div style="left:406px;top:669.2px;width:104.4px;height:10.4px;background:#787878;"></div>
<div class="t" style="left:410.4px;top:669.2px;height:11.6px;line-height:11.6px;font-size:8.93px;color:#3fd23f;transform:scaleX(0.940) rotate(0.03deg);transform-origin:0 50%;opacity:0.9;">Ch #2: tune_f4_iw_ad</div>
<div class="t" style="left:412px;top:682.8px;height:11.6px;line-height:11.6px;font-size:8.93px;color:#43cfe0;transform:scaleX(0.940) rotate(0.03deg);transform-origin:0 50%;">Ver/Div: 100.00</div>
<div class="t" style="left:412px;top:696.8px;height:11.6px;line-height:11.6px;font-size:8.93px;color:#43cfe0;transform:scaleX(0.940) rotate(0.03deg);transform-origin:0 50%;">Offset: 0</div>
<div class="t" style="left:412px;top:710.8px;height:11.6px;line-height:11.6px;font-size:8.93px;color:#43cfe0;transform:scaleX(0.940) rotate(0.03deg);transform-origin:0 50%;">Min: -6.5154256-003</div>
<div class="t" style="left:412px;top:724.8px;height:11.6px;line-height:11.6px;font-size:8.93px;color:#43cfe0;transform:scaleX(0.940) rotate(0.03deg);transform-origin:0 50%;">Max: 3.2525858-003</div>
<div class="t" style="left:412px;top:738.8px;height:11.6px;line-height:11.6px;font-size:8.93px;color:#43cfe0;transform:scaleX(0.940) rotate(0.03deg);transform-origin:0 50%;">Ver-A :</div>
<div class="t" style="left:412px;top:752.8px;height:11.6px;line-height:11.6px;font-size:8.93px;color:#43cfe0;transform:scaleX(0.940) rotate(0.03deg);transform-origin:0 50%;">Ver-B :</div>
<div class="t" style="left:412px;top:766.8px;height:11.6px;line-height:11.6px;font-size:8.93px;color:#43cfe0;transform:scaleX(0.940) rotate(0.03deg);transform-origin:0 50%;">Hor-A :</div>
<div class="t" style="left:412px;top:780.8px;height:11.6px;line-height:11.6px;font-size:8.93px;color:#43cfe0;transform:scaleX(0.940) rotate(0.03deg);transform-origin:0 50%;">Hor-B :</div>
<div style="left:516px;top:669.2px;width:104.4px;height:125.2px;border:0.6px solid #5c5c5c;box-sizing:border-box;"></div>
<div style="left:516px;top:669.2px;width:104.4px;height:10.4px;background:#787878;"></div>
<div class="t" style="left:520.4px;top:669.2px;height:11.6px;line-height:11.6px;font-size:8.93px;color:#3fd23f;transform:scaleX(0.940) rotate(0.03deg);transform-origin:0 50%;opacity:0.9;">Ch #3: tune_f4_speed_...</div>
<div class="t" style="left:522px;top:682.8px;height:11.6px;line-height:11.6px;font-size:8.93px;color:#e6df5a;transform:scaleX(0.940) rotate(0.03deg);transform-origin:0 50%;">Ver/Div: 1.00m</div>
<div class="t" style="left:522px;top:696.8px;height:11.6px;line-height:11.6px;font-size:8.93px;color:#e6df5a;transform:scaleX(0.940) rotate(0.03deg);transform-origin:0 50%;">Offset: -0.001</div>
<div class="t" style="left:522px;top:710.8px;height:11.6px;line-height:11.6px;font-size:8.93px;color:#e6df5a;transform:scaleX(0.940) rotate(0.03deg);transform-origin:0 50%;">Min: 0.0000000+000</div>
<div class="t" style="left:522px;top:724.8px;height:11.6px;line-height:11.6px;font-size:8.93px;color:#e6df5a;transform:scaleX(0.940) rotate(0.03deg);transform-origin:0 50%;">Max: 0.0000000+000</div>
<div class="t" style="left:522px;top:738.8px;height:11.6px;line-height:11.6px;font-size:8.93px;color:#e6df5a;transform:scaleX(0.940) rotate(0.03deg);transform-origin:0 50%;">Ver-A :</div>
<div class="t" style="left:522px;top:752.8px;height:11.6px;line-height:11.6px;font-size:8.93px;color:#e6df5a;transform:scaleX(0.940) rotate(0.03deg);transform-origin:0 50%;">Ver-B :</div>
<div class="t" style="left:522px;top:766.8px;height:11.6px;line-height:11.6px;font-size:8.93px;color:#e6df5a;transform:scaleX(0.940) rotate(0.03deg);transform-origin:0 50%;">Hor-A :</div>
<div class="t" style="left:522px;top:780.8px;height:11.6px;line-height:11.6px;font-size:8.93px;color:#e6df5a;transform:scaleX(0.940) rotate(0.03deg);transform-origin:0 50%;">Hor-B :</div>
<div style="left:626px;top:669.2px;width:104.4px;height:125.2px;border:0.6px solid #5c5c5c;box-sizing:border-box;"></div>
<div style="left:626px;top:669.2px;width:104.4px;height:10.4px;background:#787878;"></div>
<div class="t" style="left:630.4px;top:669.2px;height:11.6px;line-height:11.6px;font-size:8.93px;color:#3fd23f;transform:scaleX(0.940) rotate(0.03deg);transform-origin:0 50%;opacity:0.9;">Ch #4: ics_f4_modu</div>
<div class="t" style="left:632px;top:682.8px;height:11.6px;line-height:11.6px;font-size:8.93px;color:#5fdc68;transform:scaleX(0.940) rotate(0.03deg);transform-origin:0 50%;">Ver/Div: 200.00m</div>
<div class="t" style="left:632px;top:696.8px;height:11.6px;line-height:11.6px;font-size:8.93px;color:#5fdc68;transform:scaleX(0.940) rotate(0.03deg);transform-origin:0 50%;">Offset: 0</div>
<div class="t" style="left:632px;top:710.8px;height:11.6px;line-height:11.6px;font-size:8.93px;color:#5fdc68;transform:scaleX(0.940) rotate(0.03deg);transform-origin:0 50%;">Min: -3.8973406-001</div>
<div class="t" style="left:632px;top:724.8px;height:11.6px;line-height:11.6px;font-size:8.93px;color:#5fdc68;transform:scaleX(0.940) rotate(0.03deg);transform-origin:0 50%;">Max: 3.8818196-001</div>
<div class="t" style="left:632px;top:738.8px;height:11.6px;line-height:11.6px;font-size:8.93px;color:#5fdc68;transform:scaleX(0.940) rotate(0.03deg);transform-origin:0 50%;">Ver-A :</div>
<div class="t" style="left:632px;top:752.8px;height:11.6px;line-height:11.6px;font-size:8.93px;color:#5fdc68;transform:scaleX(0.940) rotate(0.03deg);transform-origin:0 50%;">Ver-B :</div>
<div class="t" style="left:632px;top:766.8px;height:11.6px;line-height:11.6px;font-size:8.93px;color:#5fdc68;transform:scaleX(0.940) rotate(0.03deg);transform-origin:0 50%;">Hor-A :</div>
<div class="t" style="left:632px;top:780.8px;height:11.6px;line-height:11.6px;font-size:8.93px;color:#5fdc68;transform:scaleX(0.940) rotate(0.03deg);transform-origin:0 50%;">Hor-B :</div>
<div style="left:736px;top:669.2px;width:104.4px;height:125.2px;border:0.6px solid #5c5c5c;box-sizing:border-box;"></div>
<div style="left:736px;top:669.2px;width:104.4px;height:10.4px;background:#787878;"></div>
<div class="t" style="left:740.4px;top:669.2px;height:11.6px;line-height:11.6px;font-size:8.93px;color:#3fd23f;transform:scaleX(0.940) rotate(0.03deg);transform-origin:0 50%;opacity:0.9;">Ch #5: ics_f4_modv</div>
<div class="t" style="left:742px;top:682.8px;height:11.6px;line-height:11.6px;font-size:8.93px;color:#a36ee8;transform:scaleX(0.940) rotate(0.03deg);transform-origin:0 50%;">Ver/Div: 200.00m</div>
<div class="t" style="left:742px;top:696.8px;height:11.6px;line-height:11.6px;font-size:8.93px;color:#a36ee8;transform:scaleX(0.940) rotate(0.03deg);transform-origin:0 50%;">Offset: 0</div>
<div class="t" style="left:742px;top:710.8px;height:11.6px;line-height:11.6px;font-size:8.93px;color:#a36ee8;transform:scaleX(0.940) rotate(0.03deg);transform-origin:0 50%;">Min: -3.8893016-001</div>
<div class="t" style="left:742px;top:724.8px;height:11.6px;line-height:11.6px;font-size:8.93px;color:#a36ee8;transform:scaleX(0.940) rotate(0.03deg);transform-origin:0 50%;">Max: 3.9304625-001</div>
<div class="t" style="left:742px;top:738.8px;height:11.6px;line-height:11.6px;font-size:8.93px;color:#a36ee8;transform:scaleX(0.940) rotate(0.03deg);transform-origin:0 50%;">Ver-A :</div>
<div class="t" style="left:742px;top:752.8px;height:11.6px;line-height:11.6px;font-size:8.93px;color:#a36ee8;transform:scaleX(0.940) rotate(0.03deg);transform-origin:0 50%;">Ver-B :</div>
<div class="t" style="left:742px;top:766.8px;height:11.6px;line-height:11.6px;font-size:8.93px;color:#a36ee8;transform:scaleX(0.940) rotate(0.03deg);transform-origin:0 50%;">Hor-A :</div>
<div class="t" style="left:742px;top:780.8px;height:11.6px;line-height:11.6px;font-size:8.93px;color:#a36ee8;transform:scaleX(0.940) rotate(0.03deg);transform-origin:0 50%;">Hor-B :</div>
<div style="left:845.2px;top:669.2px;width:104.4px;height:125.2px;border:0.6px solid #5c5c5c;box-sizing:border-box;"></div>
<div style="left:845.2px;top:669.2px;width:104.4px;height:10.4px;background:#787878;"></div>
<div class="t" style="left:849.6px;top:669.2px;height:11.6px;line-height:11.6px;font-size:8.93px;color:#3fd23f;transform:scaleX(0.940) rotate(0.03deg);transform-origin:0 50%;opacity:0.9;">Ch #6: ics_f4_modw</div>
<div class="t" style="left:851.2px;top:682.8px;height:11.6px;line-height:11.6px;font-size:8.93px;color:#ee8a3c;transform:scaleX(0.940) rotate(0.03deg);transform-origin:0 50%;">Ver/Div: 200.00m</div>
<div class="t" style="left:851.2px;top:696.8px;height:11.6px;line-height:11.6px;font-size:8.93px;color:#ee8a3c;transform:scaleX(0.940) rotate(0.03deg);transform-origin:0 50%;">Offset: 0</div>
<div class="t" style="left:851.2px;top:710.8px;height:11.6px;line-height:11.6px;font-size:8.93px;color:#ee8a3c;transform:scaleX(0.940) rotate(0.03deg);transform-origin:0 50%;">Min: -3.9006786-001</div>
<div class="t" style="left:851.2px;top:724.8px;height:11.6px;line-height:11.6px;font-size:8.93px;color:#ee8a3c;transform:scaleX(0.940) rotate(0.03deg);transform-origin:0 50%;">Max: 3.8811196-001</div>
<div class="t" style="left:851.2px;top:738.8px;height:11.6px;line-height:11.6px;font-size:8.93px;color:#ee8a3c;transform:scaleX(0.940) rotate(0.03deg);transform-origin:0 50%;">Ver-A :</div>
<div class="t" style="left:851.2px;top:752.8px;height:11.6px;line-height:11.6px;font-size:8.93px;color:#ee8a3c;transform:scaleX(0.940) rotate(0.03deg);transform-origin:0 50%;">Ver-B :</div>
<div class="t" style="left:851.2px;top:766.8px;height:11.6px;line-height:11.6px;font-size:8.93px;color:#ee8a3c;transform:scaleX(0.940) rotate(0.03deg);transform-origin:0 50%;">Hor-A :</div>
<div class="t" style="left:851.2px;top:780.8px;height:11.6px;line-height:11.6px;font-size:8.93px;color:#ee8a3c;transform:scaleX(0.940) rotate(0.03deg);transform-origin:0 50%;">Hor-B :</div>
<div style="left:954px;top:669.2px;width:104.4px;height:125.2px;border:0.6px solid #5c5c5c;box-sizing:border-box;"></div>
<div style="left:954px;top:669.2px;width:104.4px;height:10.4px;background:#787878;"></div>
<div class="t" style="left:958.4px;top:669.2px;height:11.6px;line-height:11.6px;font-size:8.93px;color:#3fd23f;transform:scaleX(0.940) rotate(0.03deg);transform-origin:0 50%;opacity:0.9;">Ch #7: ics_f4_vdc_ad</div>
<div class="t" style="left:960px;top:682.8px;height:11.6px;line-height:11.6px;font-size:8.93px;color:#e8433c;transform:scaleX(0.940) rotate(0.03deg);transform-origin:0 50%;">Ver/Div: 200.00</div>
<div class="t" style="left:960px;top:696.8px;height:11.6px;line-height:11.6px;font-size:8.93px;color:#e8433c;transform:scaleX(0.940) rotate(0.03deg);transform-origin:0 50%;">Offset: 0</div>
<div class="t" style="left:960px;top:710.8px;height:11.6px;line-height:11.6px;font-size:8.93px;color:#e8433c;transform:scaleX(0.940) rotate(0.03deg);transform-origin:0 50%;">Min: 2.4178769+001</div>
<div class="t" style="left:960px;top:724.8px;height:11.6px;line-height:11.6px;font-size:8.93px;color:#e8433c;transform:scaleX(0.940) rotate(0.03deg);transform-origin:0 50%;">Max: 2.4251978+001</div>
<div class="t" style="left:960px;top:738.8px;height:11.6px;line-height:11.6px;font-size:8.93px;color:#e8433c;transform:scaleX(0.940) rotate(0.03deg);transform-origin:0 50%;">Ver-A :</div>
<div class="t" style="left:960px;top:752.8px;height:11.6px;line-height:11.6px;font-size:8.93px;color:#e8433c;transform:scaleX(0.940) rotate(0.03deg);transform-origin:0 50%;">Ver-B :</div>
<div class="t" style="left:960px;top:766.8px;height:11.6px;line-height:11.6px;font-size:8.93px;color:#e8433c;transform:scaleX(0.940) rotate(0.03deg);transform-origin:0 50%;">Hor-A :</div>
<div class="t" style="left:960px;top:780.8px;height:11.6px;line-height:11.6px;font-size:8.93px;color:#e8433c;transform:scaleX(0.940) rotate(0.03deg);transform-origin:0 50%;">Hor-B :</div>
<div style="left:1062.4px;top:669.2px;width:104.4px;height:125.2px;border:0.6px solid #5c5c5c;box-sizing:border-box;"></div>
<div style="left:1062.4px;top:669.2px;width:104.4px;height:10.4px;background:#787878;"></div>
<div class="t" style="left:1066.8px;top:669.2px;height:11.6px;line-height:11.6px;font-size:8.93px;color:#3fd23f;transform:scaleX(0.940) rotate(0.03deg);transform-origin:0 50%;opacity:0.9;">Ch #8: ics_f4_id_lpf</div>
<div class="t" style="left:1068.4px;top:682.8px;height:11.6px;line-height:11.6px;font-size:8.93px;color:#f4f4f4;transform:scaleX(0.940) rotate(0.03deg);transform-origin:0 50%;">Ver/Div: 5.00</div>
<div class="t" style="left:1068.4px;top:696.8px;height:11.6px;line-height:11.6px;font-size:8.93px;color:#f4f4f4;transform:scaleX(0.940) rotate(0.03deg);transform-origin:0 50%;">Offset: 0</div>
<div class="t" style="left:1068.4px;top:710.8px;height:11.6px;line-height:11.6px;font-size:8.93px;color:#f4f4f4;transform:scaleX(0.940) rotate(0.03deg);transform-origin:0 50%;">Min: -2.5663216-001</div>
<div class="t" style="left:1068.4px;top:724.8px;height:11.6px;line-height:11.6px;font-size:8.93px;color:#f4f4f4;transform:scaleX(0.940) rotate(0.03deg);transform-origin:0 50%;">Max: 2.1435146-001</div>
<div class="t" style="left:1068.4px;top:738.8px;height:11.6px;line-height:11.6px;font-size:8.93px;color:#f4f4f4;transform:scaleX(0.940) rotate(0.03deg);transform-origin:0 50%;">Ver-A :</div>
<div class="t" style="left:1068.4px;top:752.8px;height:11.6px;line-height:11.6px;font-size:8.93px;color:#f4f4f4;transform:scaleX(0.940) rotate(0.03deg);transform-origin:0 50%;">Ver-B :</div>
<div class="t" style="left:1068.4px;top:766.8px;height:11.6px;line-height:11.6px;font-size:8.93px;color:#f4f4f4;transform:scaleX(0.940) rotate(0.03deg);transform-origin:0 50%;">Hor-A :</div>
<div class="t" style="left:1068.4px;top:780.8px;height:11.6px;line-height:11.6px;font-size:8.93px;color:#f4f4f4;transform:scaleX(0.940) rotate(0.03deg);transform-origin:0 50%;">Hor-B :</div>
<div class="t" style="left:296px;top:799.34px;height:11.33px;line-height:11.33px;font-size:8.72px;color:#33d13f;width:176.8px;text-align:right;transform:scaleX(0.940) rotate(0.03deg);transform-origin:100% 50%;">Cursor [Area Inside Oscilloscope Graph Area]</div>
<div class="t" style="left:416.4px;top:810.14px;height:11.33px;line-height:11.33px;font-size:8.72px;color:#33d13f;transform:scaleX(0.940) rotate(0.03deg);transform-origin:0 50%;">Cursor Hor-A,Hor-B,Ver-A,Ver-B</div>
<div class="t" style="left:552px;top:799.34px;height:11.33px;line-height:11.33px;font-size:8.72px;color:#33d13f;transform:scaleX(0.940) rotate(0.03deg);transform-origin:0 50%;">Trigger Position [Area Above Oscilloscope Graph Area]</div>
<div class="t" style="left:552px;top:810.14px;height:11.33px;line-height:11.33px;font-size:8.72px;color:#33d13f;transform:scaleX(0.940) rotate(0.03deg);transform-origin:0 50%;">Mouse Left Click: Trigger Position Move (For Main Window Only)</div>
<div class="t" style="left:812px;top:799.34px;height:11.33px;line-height:11.33px;font-size:8.72px;color:#33d13f;transform:scaleX(0.940) rotate(0.03deg);transform-origin:0 50%;">Trigger Level [Area Right to Oscilloscope Graph Area]</div>
<div class="t" style="left:812px;top:810.14px;height:11.33px;line-height:11.33px;font-size:8.72px;color:#33d13f;transform:scaleX(0.940) rotate(0.03deg);transform-origin:0 50%;">Mouse Left Click: Trigger Level Move</div>
<div style="left:10.8px;top:122.4px;width:404.4px;height:739.6px;background:#dfe8f4;border:0.5px solid #8fa3bf;box-sizing:border-box;border-radius:2.5px 2.5px 0 0;"></div>
<div style="left:11.8px;top:123.4px;width:402.4px;height:25px;background:linear-gradient(#dae3ef,#e3eaf4 50%,#e6edf7);border-radius:2px 2px 0 0;"></div>
<div class="t" style="left:20px;top:131.23px;height:14.74px;line-height:14.74px;font-size:11.34px;color:#8c9bb3;transform:scaleX(0.940) rotate(0.03deg);transform-origin:0 50%;">Control Window</div>
<div style="left:328.4px;top:132px;width:23.6px;height:13.2px;border:0.5px solid #b3c0d3;background:linear-gradient(#e8eef6,#d9e2ef);box-sizing:border-box;border-radius:1px;"></div>
<div style="left:355.6px;top:132px;width:23.6px;height:13.2px;border:0.5px solid #b3c0d3;background:linear-gradient(#e8eef6,#d9e2ef);box-sizing:border-box;border-radius:1px;"></div>
<div style="left:382.4px;top:132px;width:23.6px;height:13.2px;border:0.5px solid #b3c0d3;background:linear-gradient(#e8eef6,#d9e2ef);box-sizing:border-box;border-radius:1px;"></div>
<div style="left:335.2px;top:137.6px;width:10px;height:4px;border:0.6px solid #8391a8;box-sizing:border-box;border-radius:0.8px;"></div>
<div style="left:363.6px;top:135.2px;width:7.6px;height:7.2px;border:0.6px solid #8391a8;box-sizing:border-box;background:linear-gradient(90deg,transparent 45%,#8391a8 45%,#8391a8 55%,transparent 55%);"></div>
<div style="left:389.6px;top:135.2px;width:9.6px;height:7.2px;border:0.7px solid #8391a8;box-sizing:border-box;"></div>
<div style="left:16.8px;top:148.4px;width:392.4px;height:19.6px;background:linear-gradient(#dce8f8,#cfdff4);"></div>
<div style="left:26.4px;top:152.2px;width:11.2px;height:11.2px;background:linear-gradient(135deg,#f4f6fa 35%,#8aa0c4 36%,#31457a 75%);border:0.4px solid #6d7fa6;box-sizing:border-box;"></div>
<div class="t" style="left:40.4px;top:151.78px;height:13.65px;line-height:13.65px;font-size:10.5px;color:#1e2a3c;transform:scaleX(0.940) rotate(0.03deg);transform-origin:0 50%;">Read</div>
<div style="left:76.8px;top:152.2px;width:11.2px;height:11.2px;background:linear-gradient(135deg,#f4f6fa 35%,#8aa0c4 36%,#31457a 75%);border:0.4px solid #6d7fa6;box-sizing:border-box;"></div>
<div class="t" style="left:91.6px;top:151.78px;height:13.65px;line-height:13.65px;font-size:10.5px;color:#1e2a3c;transform:scaleX(0.940) rotate(0.03deg);transform-origin:0 50%;">Write</div>
<div style="left:16.8px;top:168px;width:392.4px;height:18.4px;background:#d9d9d9;"></div>
<div style="left:17.6px;top:168px;width:72.8px;height:19.2px;background:#fff;"></div>
<div class="t" style="left:21.6px;top:170.31px;height:13.38px;line-height:13.38px;font-size:10.29px;color:#222;transform:scaleX(0.940) rotate(0.03deg);transform-origin:0 50%;">Variable Data</div>
<div style="left:91.6px;top:170.8px;width:62.8px;height:15.2px;background:#eaeaea;border:0.5px solid #8e8e8e;box-sizing:border-box;"></div>
<div class="t" style="left:95.2px;top:172.71px;height:13.38px;line-height:13.38px;font-size:10.29px;color:#222;transform:scaleX(0.940) rotate(0.03deg);transform-origin:0 50%;">Variable List</div>
<div style="left:16.8px;top:186.4px;width:392.4px;height:669.6px;background:#fff;"></div>
<div style="left:16.8px;top:856px;width:392.4px;height:5.2px;background:#e9eff8;"></div>
<div style="left:22.8px;top:189.6px;width:380.4px;height:659.2px;background:#fff;border:0.6px solid #6e6e6e;box-sizing:border-box;"></div>
<div class="t" style="left:34px;top:196.37px;height:14.06px;line-height:14.06px;font-size:10.82px;color:#333;transform:scaleX(0.940) rotate(0.03deg);transform-origin:0 50%;">Variable Name</div>
<div class="t" style="left:172px;top:196.37px;height:14.06px;line-height:14.06px;font-size:10.82px;color:#333;transform:scaleX(0.940) rotate(0.03deg);transform-origin:0 50%;">Data Type</div>
<div class="t" style="left:231.6px;top:196.37px;height:14.06px;line-height:14.06px;font-size:10.82px;color:#333;transform:scaleX(0.940) rotate(0.03deg);transform-origin:0 50%;">Scale</div>
<div class="t" style="left:270.8px;top:196.37px;height:14.06px;line-height:14.06px;font-size:10.82px;color:#333;transform:scaleX(0.940) rotate(0.03deg);transform-origin:0 50%;">R?</div>
<div class="t" style="left:296.4px;top:196.37px;height:14.06px;line-height:14.06px;font-size:10.82px;color:#333;transform:scaleX(0.940) rotate(0.03deg);transform-origin:0 50%;">Read</div>
<div class="t" style="left:342px;top:196.37px;height:14.06px;line-height:14.06px;font-size:10.82px;color:#333;transform:scaleX(0.940) rotate(0.03deg);transform-origin:0 50%;">W?</div>
<div class="t" style="left:370.4px;top:196.37px;height:14.06px;line-height:14.06px;font-size:10.82px;color:#333;transform:scaleX(0.940) rotate(0.03deg);transform-origin:0 50%;">Wri</div>
<div style="left:24px;top:213.2px;width:366.8px;height:0.8px;background:#e4e4e4;"></div>
<div style="left:22.8px;top:189.6px;width:368px;height:658.4px;overflow:hidden;"><div style="left:1.2px;top:41.68px;width:366.8px;height:0.6px;background:#f2f2f2;"></div><div style="left:338px;top:25.32px;width:29.6px;height:16.16px;background:#cfe0f7;"></div><div class="t" style="left:4px;top:27.92px;height:12.56px;line-height:12.56px;font-size:9.66px;color:#2a2a2a;transform:scaleX(0.949) rotate(0.03deg);transform-origin:0 50%;">com_s2_mode_system</div><div style="left:129px;top:32.4px;width:5.2px;height:3.2px;background:#222;clip-path:polygon(0 0,100% 0,50% 100%);"></div><div class="t" style="left:143.2px;top:27.78px;height:12.83px;line-height:12.83px;font-size:9.87px;color:#2a2a2a;transform:scaleX(0.940) rotate(0.03deg);transform-origin:0 50%;">INT16</div><div style="left:188.2px;top:32.4px;width:5.2px;height:3.2px;background:#222;clip-path:polygon(0 0,100% 0,50% 100%);"></div><div class="t" style="left:202.4px;top:27.78px;height:12.83px;line-height:12.83px;font-size:9.87px;color:#2a2a2a;transform:scaleX(0.940) rotate(0.03deg);transform-origin:0 50%;">Q0</div><div style="left:227.4px;top:32.4px;width:5.2px;height:3.2px;background:#222;clip-path:polygon(0 0,100% 0,50% 100%);"></div><div style="left:244.4px;top:28px;width:10.8px;height:10.8px;background:linear-gradient(135deg,#d9dbe8,#eeeef5);border:0.6px solid #aeaeae;box-sizing:border-box;"></div><svg style="position:absolute;left:245.6px;top:28.2px;width:9.2px;height:9.6px" viewBox="0 0 10 10" fill="none"><path d="M1.5 5.2L4 8L8.6 1.6" stroke="#6874a4" stroke-width="1.3"/></svg><div class="t" style="left:266.4px;top:27.78px;height:12.83px;line-height:12.83px;font-size:9.87px;color:#2a2a2a;transform:scaleX(0.940) rotate(0.03deg);transform-origin:0 50%;">0</div><div style="left:318px;top:28px;width:10.8px;height:10.8px;background:linear-gradient(135deg,#d9dbe8,#eeeef5);border:0.6px solid #aeaeae;box-sizing:border-box;"></div><svg style="position:absolute;left:319.2px;top:28.2px;width:9.2px;height:9.6px" viewBox="0 0 10 10" fill="none"><path d="M1.5 5.2L4 8L8.6 1.6" stroke="#6874a4" stroke-width="1.3"/></svg><div class="t" style="left:342.4px;top:27.78px;height:12.83px;line-height:12.83px;font-size:9.87px;color:#2a2a2a;transform:scaleX(0.940) rotate(0.03deg);transform-origin:0 50%;">1</div><div style="left:1.2px;top:59.04px;width:366.8px;height:0.6px;background:#f2f2f2;"></div><div class="t" style="left:4px;top:45.28px;height:12.56px;line-height:12.56px;font-size:9.66px;color:#2a2a2a;transform:scaleX(1.040) rotate(0.03deg);transform-origin:0 50%;">com_s2_ref_speed_rpm</div><div style="left:129px;top:49.76px;width:5.2px;height:3.2px;background:#222;clip-path:polygon(0 0,100% 0,50% 100%);"></div><div class="t" style="left:143.2px;top:45.14px;height:12.83px;line-height:12.83px;font-size:9.87px;color:#2a2a2a;transform:scaleX(0.940) rotate(0.03deg);transform-origin:0 50%;">INT16</div><div style="left:188.2px;top:49.76px;width:5.2px;height:3.2px;background:#222;clip-path:polygon(0 0,100% 0,50% 100%);"></div><div class="t" style="left:202.4px;top:45.14px;height:12.83px;line-height:12.83px;font-size:9.87px;color:#2a2a2a;transform:scaleX(0.940) rotate(0.03deg);transform-origin:0 50%;">Q0</div><div style="left:227.4px;top:49.76px;width:5.2px;height:3.2px;background:#222;clip-path:polygon(0 0,100% 0,50% 100%);"></div><div style="left:244.4px;top:45.36px;width:10.8px;height:10.8px;background:linear-gradient(135deg,#d9dbe8,#eeeef5);border:0.6px solid #aeaeae;box-sizing:border-box;"></div><svg style="position:absolute;left:245.6px;top:45.56px;width:9.2px;height:9.6px" viewBox="0 0 10 10" fill="none"><path d="M1.5 5.2L4 8L8.6 1.6" stroke="#6874a4" stroke-width="1.3"/></svg><div class="t" style="left:266.4px;top:45.14px;height:12.83px;line-height:12.83px;font-size:9.87px;color:#2a2a2a;transform:scaleX(0.940) rotate(0.03deg);transform-origin:0 50%;">1000</div><div style="left:318px;top:45.36px;width:10.8px;height:10.8px;background:linear-gradient(135deg,#d9dbe8,#eeeef5);border:0.6px solid #aeaeae;box-sizing:border-box;"></div><svg style="position:absolute;left:319.2px;top:45.56px;width:9.2px;height:9.6px" viewBox="0 0 10 10" fill="none"><path d="M1.5 5.2L4 8L8.6 1.6" stroke="#6874a4" stroke-width="1.3"/></svg><div class="t" style="left:342.4px;top:45.14px;height:12.83px;line-height:12.83px;font-size:9.87px;color:#2a2a2a;transform:scaleX(0.940) rotate(0.03deg);transform-origin:0 50%;">1000</div><div style="left:1.2px;top:76.4px;width:366.8px;height:0.6px;background:#f2f2f2;"></div><div class="t" style="left:4px;top:62.64px;height:12.56px;line-height:12.56px;font-size:9.66px;color:#2a2a2a;transform:scaleX(1.057) rotate(0.03deg);transform-origin:0 50%;">com_s2_enable_write</div><div style="left:129px;top:67.12px;width:5.2px;height:3.2px;background:#222;clip-path:polygon(0 0,100% 0,50% 100%);"></div><div class="t" style="left:143.2px;top:62.5px;height:12.83px;line-height:12.83px;font-size:9.87px;color:#2a2a2a;transform:scaleX(0.940) rotate(0.03deg);transform-origin:0 50%;">INT16</div><div style="left:188.2px;top:67.12px;width:5.2px;height:3.2px;background:#222;clip-path:polygon(0 0,100% 0,50% 100%);"></div><div class="t" style="left:202.4px;top:62.5px;height:12.83px;line-height:12.83px;font-size:9.87px;color:#2a2a2a;transform:scaleX(0.940) rotate(0.03deg);transform-origin:0 50%;">Q0</div><div style="left:227.4px;top:67.12px;width:5.2px;height:3.2px;background:#222;clip-path:polygon(0 0,100% 0,50% 100%);"></div><div style="left:244.4px;top:62.72px;width:10.8px;height:10.8px;background:linear-gradient(135deg,#d9dbe8,#eeeef5);border:0.6px solid #aeaeae;box-sizing:border-box;"></div><svg style="position:absolute;left:245.6px;top:62.92px;width:9.2px;height:9.6px" viewBox="0 0 10 10" fill="none"><path d="M1.5 5.2L4 8L8.6 1.6" stroke="#6874a4" stroke-width="1.3"/></svg><div class="t" style="left:266.4px;top:62.5px;height:12.83px;line-height:12.83px;font-size:9.87px;color:#2a2a2a;transform:scaleX(0.940) rotate(0.03deg);transform-origin:0 50%;">1</div><div style="left:318px;top:62.72px;width:10.8px;height:10.8px;background:linear-gradient(135deg,#d9dbe8,#eeeef5);border:0.6px solid #aeaeae;box-sizing:border-box;"></div><svg style="position:absolute;left:319.2px;top:62.92px;width:9.2px;height:9.6px" viewBox="0 0 10 10" fill="none"><path d="M1.5 5.2L4 8L8.6 1.6" stroke="#6874a4" stroke-width="1.3"/></svg><div class="t" style="left:342.4px;top:62.5px;height:12.83px;line-height:12.83px;font-size:9.87px;color:#2a2a2a;transform:scaleX(0.940) rotate(0.03deg);transform-origin:0 50%;">1</div><div style="left:1.2px;top:93.76px;width:366.8px;height:0.6px;background:#f2f2f2;"></div><div class="t" style="left:4px;top:80px;height:12.56px;line-height:12.56px;font-size:9.66px;color:#2a2a2a;transform:scaleX(1.070) rotate(0.03deg);transform-origin:0 50%;">g_s2_enable_write</div><div style="left:129px;top:84.48px;width:5.2px;height:3.2px;background:#222;clip-path:polygon(0 0,100% 0,50% 100%);"></div><div class="t" style="left:143.2px;top:79.86px;height:12.83px;line-height:12.83px;font-size:9.87px;color:#2a2a2a;transform:scaleX(0.940) rotate(0.03deg);transform-origin:0 50%;">INT16</div><div style="left:188.2px;top:84.48px;width:5.2px;height:3.2px;background:#222;clip-path:polygon(0 0,100% 0,50% 100%);"></div><div class="t" style="left:202.4px;top:79.86px;height:12.83px;line-height:12.83px;font-size:9.87px;color:#2a2a2a;transform:scaleX(0.940) rotate(0.03deg);transform-origin:0 50%;">Q0</div><div style="left:227.4px;top:84.48px;width:5.2px;height:3.2px;background:#222;clip-path:polygon(0 0,100% 0,50% 100%);"></div><div style="left:244.4px;top:80.08px;width:10.8px;height:10.8px;background:linear-gradient(135deg,#d9dbe8,#eeeef5);border:0.6px solid #aeaeae;box-sizing:border-box;"></div><svg style="position:absolute;left:245.6px;top:80.28px;width:9.2px;height:9.6px" viewBox="0 0 10 10" fill="none"><path d="M1.5 5.2L4 8L8.6 1.6" stroke="#6874a4" stroke-width="1.3"/></svg><div class="t" style="left:266.4px;top:79.86px;height:12.83px;line-height:12.83px;font-size:9.87px;color:#2a2a2a;transform:scaleX(0.940) rotate(0.03deg);transform-origin:0 50%;">0</div><div style="left:318px;top:80.08px;width:10.8px;height:10.8px;background:linear-gradient(135deg,#e6e6e6,#fafafa);border:0.6px solid #aeaeae;box-sizing:border-box;"></div><div class="t" style="left:342.4px;top:79.86px;height:12.83px;line-height:12.83px;font-size:9.87px;color:#2a2a2a;transform:scaleX(0.940) rotate(0.03deg);transform-origin:0 50%;">0</div><div style="left:1.2px;top:111.12px;width:366.8px;height:0.6px;background:#f2f2f2;"></div><div class="t" style="left:4px;top:97.36px;height:12.56px;line-height:12.56px;font-size:9.66px;color:#2a2a2a;transform:scaleX(1.085) rotate(0.03deg);transform-origin:0 50%;">ics_u2_run_mode</div><div style="left:129px;top:101.84px;width:5.2px;height:3.2px;background:#222;clip-path:polygon(0 0,100% 0,50% 100%);"></div><div class="t" style="left:143.2px;top:97.22px;height:12.83px;line-height:12.83px;font-size:9.87px;color:#2a2a2a;transform:scaleX(0.940) rotate(0.03deg);transform-origin:0 50%;">INT16</div><div style="left:188.2px;top:101.84px;width:5.2px;height:3.2px;background:#222;clip-path:polygon(0 0,100% 0,50% 100%);"></div><div class="t" style="left:202.4px;top:97.22px;height:12.83px;line-height:12.83px;font-size:9.87px;color:#2a2a2a;transform:scaleX(0.940) rotate(0.03deg);transform-origin:0 50%;">Q0</div><div style="left:227.4px;top:101.84px;width:5.2px;height:3.2px;background:#222;clip-path:polygon(0 0,100% 0,50% 100%);"></div><div style="left:244.4px;top:97.44px;width:10.8px;height:10.8px;background:linear-gradient(135deg,#d9dbe8,#eeeef5);border:0.6px solid #aeaeae;box-sizing:border-box;"></div><svg style="position:absolute;left:245.6px;top:97.64px;width:9.2px;height:9.6px" viewBox="0 0 10 10" fill="none"><path d="M1.5 5.2L4 8L8.6 1.6" stroke="#6874a4" stroke-width="1.3"/></svg><div class="t" style="left:266.4px;top:97.22px;height:12.83px;line-height:12.83px;font-size:9.87px;color:#2a2a2a;transform:scaleX(0.940) rotate(0.03deg);transform-origin:0 50%;">0</div><div style="left:318px;top:97.44px;width:10.8px;height:10.8px;background:linear-gradient(135deg,#e6e6e6,#fafafa);border:0.6px solid #aeaeae;box-sizing:border-box;"></div><div class="t" style="left:342.4px;top:97.22px;height:12.83px;line-height:12.83px;font-size:9.87px;color:#2a2a2a;transform:scaleX(0.940) rotate(0.03deg);transform-origin:0 50%;">0</div><div style="left:1.2px;top:128.48px;width:366.8px;height:0.6px;background:#f2f2f2;"></div><div class="t" style="left:4px;top:114.72px;height:12.56px;line-height:12.56px;font-size:9.66px;color:#2a2a2a;transform:scaleX(1.053) rotate(0.03deg);transform-origin:0 50%;">ics_u2_error_status</div><div style="left:129px;top:119.2px;width:5.2px;height:3.2px;background:#222;clip-path:polygon(0 0,100% 0,50% 100%);"></div><div class="t" style="left:143.2px;top:114.58px;height:12.83px;line-height:12.83px;font-size:9.87px;color:#2a2a2a;transform:scaleX(0.940) rotate(0.03deg);transform-origin:0 50%;">INT16</div><div style="left:188.2px;top:119.2px;width:5.2px;height:3.2px;background:#222;clip-path:polygon(0 0,100% 0,50% 100%);"></div><div class="t" style="left:202.4px;top:114.58px;height:12.83px;line-height:12.83px;font-size:9.87px;color:#2a2a2a;transform:scaleX(0.940) rotate(0.03deg);transform-origin:0 50%;">Q0</div><div style="left:227.4px;top:119.2px;width:5.2px;height:3.2px;background:#222;clip-path:polygon(0 0,100% 0,50% 100%);"></div><div style="left:244.4px;top:114.8px;width:10.8px;height:10.8px;background:linear-gradient(135deg,#d9dbe8,#eeeef5);border:0.6px solid #aeaeae;box-sizing:border-box;"></div><svg style="position:absolute;left:245.6px;top:115px;width:9.2px;height:9.6px" viewBox="0 0 10 10" fill="none"><path d="M1.5 5.2L4 8L8.6 1.6" stroke="#6874a4" stroke-width="1.3"/></svg><div class="t" style="left:266.4px;top:114.58px;height:12.83px;line-height:12.83px;font-size:9.87px;color:#2a2a2a;transform:scaleX(0.940) rotate(0.03deg);transform-origin:0 50%;">0</div><div style="left:318px;top:114.8px;width:10.8px;height:10.8px;background:linear-gradient(135deg,#e6e6e6,#fafafa);border:0.6px solid #aeaeae;box-sizing:border-box;"></div><div class="t" style="left:342.4px;top:114.58px;height:12.83px;line-height:12.83px;font-size:9.87px;color:#2a2a2a;transform:scaleX(0.940) rotate(0.03deg);transform-origin:0 50%;">0</div><div style="left:1.2px;top:145.84px;width:366.8px;height:0.6px;background:#f2f2f2;"></div><div class="t" style="left:4px;top:132.08px;height:12.56px;line-height:12.56px;font-size:9.66px;color:#2a2a2a;transform:scaleX(1.054) rotate(0.03deg);transform-origin:0 50%;">tune_u2_error_status</div><div style="left:129px;top:136.56px;width:5.2px;height:3.2px;background:#222;clip-path:polygon(0 0,100% 0,50% 100%);"></div><div class="t" style="left:143.2px;top:131.94px;height:12.83px;line-height:12.83px;font-size:9.87px;color:#2a2a2a;transform:scaleX(0.940) rotate(0.03deg);transform-origin:0 50%;">INT16</div><div style="left:188.2px;top:136.56px;width:5.2px;height:3.2px;background:#222;clip-path:polygon(0 0,100% 0,50% 100%);"></div><div class="t" style="left:202.4px;top:131.94px;height:12.83px;line-height:12.83px;font-size:9.87px;color:#2a2a2a;transform:scaleX(0.940) rotate(0.03deg);transform-origin:0 50%;">Q0</div><div style="left:227.4px;top:136.56px;width:5.2px;height:3.2px;background:#222;clip-path:polygon(0 0,100% 0,50% 100%);"></div><div style="left:244.4px;top:132.16px;width:10.8px;height:10.8px;background:linear-gradient(135deg,#d9dbe8,#eeeef5);border:0.6px solid #aeaeae;box-sizing:border-box;"></div><svg style="position:absolute;left:245.6px;top:132.36px;width:9.2px;height:9.6px" viewBox="0 0 10 10" fill="none"><path d="M1.5 5.2L4 8L8.6 1.6" stroke="#6874a4" stroke-width="1.3"/></svg><div class="t" style="left:266.4px;top:131.94px;height:12.83px;line-height:12.83px;font-size:9.87px;color:#2a2a2a;transform:scaleX(0.940) rotate(0.03deg);transform-origin:0 50%;">0</div><div style="left:318px;top:132.16px;width:10.8px;height:10.8px;background:linear-gradient(135deg,#e6e6e6,#fafafa);border:0.6px solid #aeaeae;box-sizing:border-box;"></div><div class="t" style="left:342.4px;top:131.94px;height:12.83px;line-height:12.83px;font-size:9.87px;color:#2a2a2a;transform:scaleX(0.940) rotate(0.03deg);transform-origin:0 50%;">0</div><div style="left:1.2px;top:163.2px;width:366.8px;height:0.6px;background:#f2f2f2;"></div><div style="left:129px;top:153.92px;width:5.2px;height:3.2px;background:#222;clip-path:polygon(0 0,100% 0,50% 100%);"></div><div class="t" style="left:143.2px;top:149.3px;height:12.83px;line-height:12.83px;font-size:9.87px;color:#2a2a2a;transform:scaleX(0.940) rotate(0.03deg);transform-origin:0 50%;">UINT8</div><div style="left:188.2px;top:153.92px;width:5.2px;height:3.2px;background:#222;clip-path:polygon(0 0,100% 0,50% 100%);"></div><div class="t" style="left:202.4px;top:149.3px;height:12.83px;line-height:12.83px;font-size:9.87px;color:#2a2a2a;transform:scaleX(0.940) rotate(0.03deg);transform-origin:0 50%;">Q0</div><div style="left:227.4px;top:153.92px;width:5.2px;height:3.2px;background:#222;clip-path:polygon(0 0,100% 0,50% 100%);"></div><div style="left:244.4px;top:149.52px;width:10.8px;height:10.8px;background:linear-gradient(135deg,#e6e6e6,#fafafa);border:0.6px solid #aeaeae;box-sizing:border-box;"></div><div style="left:318px;top:149.52px;width:10.8px;height:10.8px;background:linear-gradient(135deg,#e6e6e6,#fafafa);border:0.6px solid #aeaeae;box-sizing:border-box;"></div><div class="t" style="left:342.4px;top:149.3px;height:12.83px;line-height:12.83px;font-size:9.87px;color:#2a2a2a;transform:scaleX(0.940) rotate(0.03deg);transform-origin:0 50%;">0</div><div style="left:1.2px;top:180.56px;width:366.8px;height:0.6px;background:#f2f2f2;"></div><div class="t" style="left:4px;top:166.8px;height:12.56px;line-height:12.56px;font-size:9.66px;color:#2a2a2a;transform:scaleX(1.049) rotate(0.03deg);transform-origin:0 50%;">gui_u1_tune_mode</div><div style="left:129px;top:171.28px;width:5.2px;height:3.2px;background:#222;clip-path:polygon(0 0,100% 0,50% 100%);"></div><div class="t" style="left:143.2px;top:166.66px;height:12.83px;line-height:12.83px;font-size:9.87px;color:#2a2a2a;transform:scaleX(0.940) rotate(0.03deg);transform-origin:0 50%;">INT8</div><div style="left:188.2px;top:171.28px;width:5.2px;height:3.2px;background:#222;clip-path:polygon(0 0,100% 0,50% 100%);"></div><div class="t" style="left:202.4px;top:166.66px;height:12.83px;line-height:12.83px;font-size:9.87px;color:#2a2a2a;transform:scaleX(0.940) rotate(0.03deg);transform-origin:0 50%;">Q0</div><div style="left:227.4px;top:171.28px;width:5.2px;height:3.2px;background:#222;clip-path:polygon(0 0,100% 0,50% 100%);"></div><div style="left:244.4px;top:166.88px;width:10.8px;height:10.8px;background:linear-gradient(135deg,#d9dbe8,#eeeef5);border:0.6px solid #aeaeae;box-sizing:border-box;"></div><svg style="position:absolute;left:245.6px;top:167.08px;width:9.2px;height:9.6px" viewBox="0 0 10 10" fill="none"><path d="M1.5 5.2L4 8L8.6 1.6" stroke="#6874a4" stroke-width="1.3"/></svg><div class="t" style="left:266.4px;top:166.66px;height:12.83px;line-height:12.83px;font-size:9.87px;color:#2a2a2a;transform:scaleX(0.940) rotate(0.03deg);transform-origin:0 50%;">0</div><div style="left:318px;top:166.88px;width:10.8px;height:10.8px;background:linear-gradient(135deg,#e6e6e6,#fafafa);border:0.6px solid #aeaeae;box-sizing:border-box;"></div><div class="t" style="left:342.4px;top:166.66px;height:12.83px;line-height:12.83px;font-size:9.87px;color:#2a2a2a;transform:scaleX(0.940) rotate(0.03deg);transform-origin:0 50%;">0</div><div style="left:1.2px;top:197.92px;width:366.8px;height:0.6px;background:#f2f2f2;"></div><div class="t" style="left:4px;top:184.16px;height:12.56px;line-height:12.56px;font-size:9.66px;color:#2a2a2a;transform:scaleX(1.022) rotate(0.03deg);transform-origin:0 50%;">gui_u1_tune_mode_syst...</div><div style="left:129px;top:188.64px;width:5.2px;height:3.2px;background:#222;clip-path:polygon(0 0,100% 0,50% 100%);"></div><div class="t" style="left:143.2px;top:184.02px;height:12.83px;line-height:12.83px;font-size:9.87px;color:#2a2a2a;transform:scaleX(0.940) rotate(0.03deg);transform-origin:0 50%;">INT16</div><div style="left:188.2px;top:188.64px;width:5.2px;height:3.2px;background:#222;clip-path:polygon(0 0,100% 0,50% 100%);"></div><div class="t" style="left:202.4px;top:184.02px;height:12.83px;line-height:12.83px;font-size:9.87px;color:#2a2a2a;transform:scaleX(0.940) rotate(0.03deg);transform-origin:0 50%;">Q0</div><div style="left:227.4px;top:188.64px;width:5.2px;height:3.2px;background:#222;clip-path:polygon(0 0,100% 0,50% 100%);"></div><div style="left:244.4px;top:184.24px;width:10.8px;height:10.8px;background:linear-gradient(135deg,#d9dbe8,#eeeef5);border:0.6px solid #aeaeae;box-sizing:border-box;"></div><svg style="position:absolute;left:245.6px;top:184.44px;width:9.2px;height:9.6px" viewBox="0 0 10 10" fill="none"><path d="M1.5 5.2L4 8L8.6 1.6" stroke="#6874a4" stroke-width="1.3"/></svg><div class="t" style="left:266.4px;top:184.02px;height:12.83px;line-height:12.83px;font-size:9.87px;color:#2a2a2a;transform:scaleX(0.940) rotate(0.03deg);transform-origin:0 50%;">0</div><div style="left:318px;top:184.24px;width:10.8px;height:10.8px;background:linear-gradient(135deg,#e6e6e6,#fafafa);border:0.6px solid #aeaeae;box-sizing:border-box;"></div><div class="t" style="left:342.4px;top:184.02px;height:12.83px;line-height:12.83px;font-size:9.87px;color:#2a2a2a;transform:scaleX(0.940) rotate(0.03deg);transform-origin:0 50%;">0</div><div style="left:1.2px;top:215.28px;width:366.8px;height:0.6px;background:#f2f2f2;"></div><div class="t" style="left:4px;top:201.52px;height:12.56px;line-height:12.56px;font-size:9.66px;color:#2a2a2a;transform:scaleX(1.025) rotate(0.03deg);transform-origin:0 50%;">ics_u1_mode_system</div><div style="left:129px;top:206px;width:5.2px;height:3.2px;background:#222;clip-path:polygon(0 0,100% 0,50% 100%);"></div><div class="t" style="left:143.2px;top:201.38px;height:12.83px;line-height:12.83px;font-size:9.87px;color:#2a2a2a;transform:scaleX(0.940) rotate(0.03deg);transform-origin:0 50%;">INT8</div><div style="left:188.2px;top:206px;width:5.2px;height:3.2px;background:#222;clip-path:polygon(0 0,100% 0,50% 100%);"></div><div class="t" style="left:202.4px;top:201.38px;height:12.83px;line-height:12.83px;font-size:9.87px;color:#2a2a2a;transform:scaleX(0.940) rotate(0.03deg);transform-origin:0 50%;">Q0</div><div style="left:227.4px;top:206px;width:5.2px;height:3.2px;background:#222;clip-path:polygon(0 0,100% 0,50% 100%);"></div><div style="left:244.4px;top:201.6px;width:10.8px;height:10.8px;background:linear-gradient(135deg,#d9dbe8,#eeeef5);border:0.6px solid #aeaeae;box-sizing:border-box;"></div><svg style="position:absolute;left:245.6px;top:201.8px;width:9.2px;height:9.6px" viewBox="0 0 10 10" fill="none"><path d="M1.5 5.2L4 8L8.6 1.6" stroke="#6874a4" stroke-width="1.3"/></svg><div class="t" style="left:266.4px;top:201.38px;height:12.83px;line-height:12.83px;font-size:9.87px;color:#2a2a2a;transform:scaleX(0.940) rotate(0.03deg);transform-origin:0 50%;">0</div><div style="left:318px;top:201.6px;width:10.8px;height:10.8px;background:linear-gradient(135deg,#e6e6e6,#fafafa);border:0.6px solid #aeaeae;box-sizing:border-box;"></div><div class="t" style="left:342.4px;top:201.38px;height:12.83px;line-height:12.83px;font-size:9.87px;color:#2a2a2a;transform:scaleX(0.940) rotate(0.03deg);transform-origin:0 50%;">0</div><div style="left:1.2px;top:232.64px;width:366.8px;height:0.6px;background:#f2f2f2;"></div><div style="left:129px;top:223.36px;width:5.2px;height:3.2px;background:#222;clip-path:polygon(0 0,100% 0,50% 100%);"></div><div class="t" style="left:143.2px;top:218.74px;height:12.83px;line-height:12.83px;font-size:9.87px;color:#2a2a2a;transform:scaleX(0.940) rotate(0.03deg);transform-origin:0 50%;">UINT8</div><div style="left:188.2px;top:223.36px;width:5.2px;height:3.2px;background:#222;clip-path:polygon(0 0,100% 0,50% 100%);"></div><div class="t" style="left:202.4px;top:218.74px;height:12.83px;line-height:12.83px;font-size:9.87px;color:#2a2a2a;transform:scaleX(0.940) rotate(0.03deg);transform-origin:0 50%;">Q0</div><div style="left:227.4px;top:223.36px;width:5.2px;height:3.2px;background:#222;clip-path:polygon(0 0,100% 0,50% 100%);"></div><div style="left:244.4px;top:218.96px;width:10.8px;height:10.8px;background:linear-gradient(135deg,#e6e6e6,#fafafa);border:0.6px solid #aeaeae;box-sizing:border-box;"></div><div style="left:318px;top:218.96px;width:10.8px;height:10.8px;background:linear-gradient(135deg,#e6e6e6,#fafafa);border:0.6px solid #aeaeae;box-sizing:border-box;"></div><div class="t" style="left:342.4px;top:218.74px;height:12.83px;line-height:12.83px;font-size:9.87px;color:#2a2a2a;transform:scaleX(0.940) rotate(0.03deg);transform-origin:0 50%;">0</div><div style="left:1.2px;top:250px;width:366.8px;height:0.6px;background:#f2f2f2;"></div><div class="t" style="left:4px;top:236.24px;height:12.56px;line-height:12.56px;font-size:9.66px;color:#2a2a2a;transform:scaleX(0.953) rotate(0.03deg);transform-origin:0 50%;">com_f4_mtr_r</div><div style="left:129px;top:240.72px;width:5.2px;height:3.2px;background:#222;clip-path:polygon(0 0,100% 0,50% 100%);"></div><div class="t" style="left:143.2px;top:236.1px;height:12.83px;line-height:12.83px;font-size:9.87px;color:#2a2a2a;transform:scaleX(0.940) rotate(0.03deg);transform-origin:0 50%;">FLOAT</div><div style="left:188.2px;top:240.72px;width:5.2px;height:3.2px;background:#222;clip-path:polygon(0 0,100% 0,50% 100%);"></div><div class="t" style="left:202.4px;top:236.1px;height:12.83px;line-height:12.83px;font-size:9.87px;color:#2a2a2a;transform:scaleX(0.940) rotate(0.03deg);transform-origin:0 50%;">Q0</div><div style="left:227.4px;top:240.72px;width:5.2px;height:3.2px;background:#222;clip-path:polygon(0 0,100% 0,50% 100%);"></div><div style="left:244.4px;top:236.32px;width:10.8px;height:10.8px;background:linear-gradient(135deg,#d9dbe8,#eeeef5);border:0.6px solid #aeaeae;box-sizing:border-box;"></div><svg style="position:absolute;left:245.6px;top:236.52px;width:9.2px;height:9.6px" viewBox="0 0 10 10" fill="none"><path d="M1.5 5.2L4 8L8.6 1.6" stroke="#6874a4" stroke-width="1.3"/></svg><div class="t" style="left:266.4px;top:236.1px;height:12.83px;line-height:12.83px;font-size:9.87px;color:#2a2a2a;transform:scaleX(0.940) rotate(0.03deg);transform-origin:0 50%;">8.447</div><div style="left:318px;top:236.32px;width:10.8px;height:10.8px;background:linear-gradient(135deg,#e6e6e6,#fafafa);border:0.6px solid #aeaeae;box-sizing:border-box;"></div><div class="t" style="left:342.4px;top:236.1px;height:12.83px;line-height:12.83px;font-size:9.87px;color:#2a2a2a;transform:scaleX(0.940) rotate(0.03deg);transform-origin:0 50%;">0</div><div style="left:1.2px;top:267.36px;width:366.8px;height:0.6px;background:#f2f2f2;"></div><div class="t" style="left:4px;top:253.6px;height:12.56px;line-height:12.56px;font-size:9.66px;color:#2a2a2a;transform:scaleX(0.944) rotate(0.03deg);transform-origin:0 50%;">com_f4_mtr_ld</div><div style="left:129px;top:258.08px;width:5.2px;height:3.2px;background:#222;clip-path:polygon(0 0,100% 0,50% 100%);"></div><div class="t" style="left:143.2px;top:253.46px;height:12.83px;line-height:12.83px;font-size:9.87px;color:#2a2a2a;transform:scaleX(0.940) rotate(0.03deg);transform-origin:0 50%;">FLOAT</div><div style="left:188.2px;top:258.08px;width:5.2px;height:3.2px;background:#222;clip-path:polygon(0 0,100% 0,50% 100%);"></div><div class="t" style="left:202.4px;top:253.46px;height:12.83px;line-height:12.83px;font-size:9.87px;color:#2a2a2a;transform:scaleX(0.940) rotate(0.03deg);transform-origin:0 50%;">Q0</div><div style="left:227.4px;top:258.08px;width:5.2px;height:3.2px;background:#222;clip-path:polygon(0 0,100% 0,50% 100%);"></div><div style="left:244.4px;top:253.68px;width:10.8px;height:10.8px;background:linear-gradient(135deg,#d9dbe8,#eeeef5);border:0.6px solid #aeaeae;box-sizing:border-box;"></div><svg style="position:absolute;left:245.6px;top:253.88px;width:9.2px;height:9.6px" viewBox="0 0 10 10" fill="none"><path d="M1.5 5.2L4 8L8.6 1.6" stroke="#6874a4" stroke-width="1.3"/></svg><div class="t" style="left:266.4px;top:253.46px;height:12.83px;line-height:12.83px;font-size:9.87px;color:#2a2a2a;transform:scaleX(0.940) rotate(0.03deg);transform-origin:0 50%;">0.0045</div><div style="left:318px;top:253.68px;width:10.8px;height:10.8px;background:linear-gradient(135deg,#e6e6e6,#fafafa);border:0.6px solid #aeaeae;box-sizing:border-box;"></div><div class="t" style="left:342.4px;top:253.46px;height:12.83px;line-height:12.83px;font-size:9.87px;color:#2a2a2a;transform:scaleX(0.940) rotate(0.03deg);transform-origin:0 50%;">0</div><div style="left:1.2px;top:284.72px;width:366.8px;height:0.6px;background:#f2f2f2;"></div><div class="t" style="left:4px;top:270.96px;height:12.56px;line-height:12.56px;font-size:9.66px;color:#2a2a2a;transform:scaleX(0.944) rotate(0.03deg);transform-origin:0 50%;">com_f4_mtr_lq</div><div style="left:129px;top:275.44px;width:5.2px;height:3.2px;background:#222;clip-path:polygon(0 0,100% 0,50% 100%);"></div><div class="t" style="left:143.2px;top:270.82px;height:12.83px;line-height:12.83px;font-size:9.87px;color:#2a2a2a;transform:scaleX(0.940) rotate(0.03deg);transform-origin:0 50%;">FLOAT</div><div style="left:188.2px;top:275.44px;width:5.2px;height:3.2px;background:#222;clip-path:polygon(0 0,100% 0,50% 100%);"></div><div class="t" style="left:202.4px;top:270.82px;height:12.83px;line-height:12.83px;font-size:9.87px;color:#2a2a2a;transform:scaleX(0.940) rotate(0.03deg);transform-origin:0 50%;">Q0</div><div style="left:227.4px;top:275.44px;width:5.2px;height:3.2px;background:#222;clip-path:polygon(0 0,100% 0,50% 100%);"></div><div style="left:244.4px;top:271.04px;width:10.8px;height:10.8px;background:linear-gradient(135deg,#d9dbe8,#eeeef5);border:0.6px solid #aeaeae;box-sizing:border-box;"></div><svg style="position:absolute;left:245.6px;top:271.24px;width:9.2px;height:9.6px" viewBox="0 0 10 10" fill="none"><path d="M1.5 5.2L4 8L8.6 1.6" stroke="#6874a4" stroke-width="1.3"/></svg><div class="t" style="left:266.4px;top:270.82px;height:12.83px;line-height:12.83px;font-size:9.87px;color:#2a2a2a;transform:scaleX(0.940) rotate(0.03deg);transform-origin:0 50%;">0.0045</div><div style="left:318px;top:271.04px;width:10.8px;height:10.8px;background:linear-gradient(135deg,#e6e6e6,#fafafa);border:0.6px solid #aeaeae;box-sizing:border-box;"></div><div class="t" style="left:342.4px;top:270.82px;height:12.83px;line-height:12.83px;font-size:9.87px;color:#2a2a2a;transform:scaleX(0.940) rotate(0.03deg);transform-origin:0 50%;">0</div><div style="left:1.2px;top:302.08px;width:366.8px;height:0.6px;background:#f2f2f2;"></div><div class="t" style="left:4px;top:288.32px;height:12.56px;line-height:12.56px;font-size:9.66px;color:#2a2a2a;transform:scaleX(0.998) rotate(0.03deg);transform-origin:0 50%;">com_f4_mtr_m</div><div style="left:129px;top:292.8px;width:5.2px;height:3.2px;background:#222;clip-path:polygon(0 0,100% 0,50% 100%);"></div><div class="t" style="left:143.2px;top:288.18px;height:12.83px;line-height:12.83px;font-size:9.87px;color:#2a2a2a;transform:scaleX(0.940) rotate(0.03deg);transform-origin:0 50%;">FLOAT</div><div style="left:188.2px;top:292.8px;width:5.2px;height:3.2px;background:#222;clip-path:polygon(0 0,100% 0,50% 100%);"></div><div class="t" style="left:202.4px;top:288.18px;height:12.83px;line-height:12.83px;font-size:9.87px;color:#2a2a2a;transform:scaleX(0.940) rotate(0.03deg);transform-origin:0 50%;">Q0</div><div style="left:227.4px;top:292.8px;width:5.2px;height:3.2px;background:#222;clip-path:polygon(0 0,100% 0,50% 100%);"></div><div style="left:244.4px;top:288.4px;width:10.8px;height:10.8px;background:linear-gradient(135deg,#d9dbe8,#eeeef5);border:0.6px solid #aeaeae;box-sizing:border-box;"></div><svg style="position:absolute;left:245.6px;top:288.6px;width:9.2px;height:9.6px" viewBox="0 0 10 10" fill="none"><path d="M1.5 5.2L4 8L8.6 1.6" stroke="#6874a4" stroke-width="1.3"/></svg><div class="t" style="left:266.4px;top:288.18px;height:12.83px;line-height:12.83px;font-size:9.87px;color:#2a2a2a;transform:scaleX(0.940) rotate(0.03deg);transform-origin:0 50%;">0.02159</div><div style="left:318px;top:288.4px;width:10.8px;height:10.8px;background:linear-gradient(135deg,#e6e6e6,#fafafa);border:0.6px solid #aeaeae;box-sizing:border-box;"></div><div class="t" style="left:342.4px;top:288.18px;height:12.83px;line-height:12.83px;font-size:9.87px;color:#2a2a2a;transform:scaleX(0.940) rotate(0.03deg);transform-origin:0 50%;">0</div><div style="left:1.2px;top:319.44px;width:366.8px;height:0.6px;background:#f2f2f2;"></div><div class="t" style="left:4px;top:305.68px;height:12.56px;line-height:12.56px;font-size:9.66px;color:#2a2a2a;transform:scaleX(0.919) rotate(0.03deg);transform-origin:0 50%;">com_f4_kp_id</div><div style="left:129px;top:310.16px;width:5.2px;height:3.2px;background:#222;clip-path:polygon(0 0,100% 0,50% 100%);"></div><div class="t" style="left:143.2px;top:305.54px;height:12.83px;line-height:12.83px;font-size:9.87px;color:#2a2a2a;transform:scaleX(0.940) rotate(0.03deg);transform-origin:0 50%;">FLOAT</div><div style="left:188.2px;top:310.16px;width:5.2px;height:3.2px;background:#222;clip-path:polygon(0 0,100% 0,50% 100%);"></div><div class="t" style="left:202.4px;top:305.54px;height:12.83px;line-height:12.83px;font-size:9.87px;color:#2a2a2a;transform:scaleX(0.940) rotate(0.03deg);transform-origin:0 50%;">Q0</div><div style="left:227.4px;top:310.16px;width:5.2px;height:3.2px;background:#222;clip-path:polygon(0 0,100% 0,50% 100%);"></div><div style="left:244.4px;top:305.76px;width:10.8px;height:10.8px;background:linear-gradient(135deg,#d9dbe8,#eeeef5);border:0.6px solid #aeaeae;box-sizing:border-box;"></div><svg style="position:absolute;left:245.6px;top:305.96px;width:9.2px;height:9.6px" viewBox="0 0 10 10" fill="none"><path d="M1.5 5.2L4 8L8.6 1.6" stroke="#6874a4" stroke-width="1.3"/></svg><div class="t" style="left:266.4px;top:305.54px;height:12.83px;line-height:12.83px;font-size:9.87px;color:#2a2a2a;transform:scaleX(0.940) rotate(0.03deg);transform-origin:0 50%;">2</div><div style="left:318px;top:305.76px;width:10.8px;height:10.8px;background:linear-gradient(135deg,#e6e6e6,#fafafa);border:0.6px solid #aeaeae;box-sizing:border-box;"></div><div class="t" style="left:342.4px;top:305.54px;height:12.83px;line-height:12.83px;font-size:9.87px;color:#2a2a2a;transform:scaleX(0.940) rotate(0.03deg);transform-origin:0 50%;">0</div><div style="left:1.2px;top:336.8px;width:366.8px;height:0.6px;background:#f2f2f2;"></div><div class="t" style="left:4px;top:323.04px;height:12.56px;line-height:12.56px;font-size:9.66px;color:#2a2a2a;transform:scaleX(0.936) rotate(0.03deg);transform-origin:0 50%;">com_f4_ki_id</div><div style="left:129px;top:327.52px;width:5.2px;height:3.2px;background:#222;clip-path:polygon(0 0,100% 0,50% 100%);"></div><div class="t" style="left:143.2px;top:322.9px;height:12.83px;line-height:12.83px;font-size:9.87px;color:#2a2a2a;transform:scaleX(0.940) rotate(0.03deg);transform-origin:0 50%;">FLOAT</div><div style="left:188.2px;top:327.52px;width:5.2px;height:3.2px;background:#222;clip-path:polygon(0 0,100% 0,50% 100%);"></div><div class="t" style="left:202.4px;top:322.9px;height:12.83px;line-height:12.83px;font-size:9.87px;color:#2a2a2a;transform:scaleX(0.940) rotate(0.03deg);transform-origin:0 50%;">Q0</div><div style="left:227.4px;top:327.52px;width:5.2px;height:3.2px;background:#222;clip-path:polygon(0 0,100% 0,50% 100%);"></div><div style="left:244.4px;top:323.12px;width:10.8px;height:10.8px;background:linear-gradient(135deg,#d9dbe8,#eeeef5);border:0.6px solid #aeaeae;box-sizing:border-box;"></div><svg style="position:absolute;left:245.6px;top:323.32px;width:9.2px;height:9.6px" viewBox="0 0 10 10" fill="none"><path d="M1.5 5.2L4 8L8.6 1.6" stroke="#6874a4" stroke-width="1.3"/></svg><div class="t" style="left:266.4px;top:322.9px;height:12.83px;line-height:12.83px;font-size:9.87px;color:#2a2a2a;transform:scaleX(0.940) rotate(0.03deg);transform-origin:0 50%;">0.4</div><div style="left:318px;top:323.12px;width:10.8px;height:10.8px;background:linear-gradient(135deg,#e6e6e6,#fafafa);border:0.6px solid #aeaeae;box-sizing:border-box;"></div><div class="t" style="left:342.4px;top:322.9px;height:12.83px;line-height:12.83px;font-size:9.87px;color:#2a2a2a;transform:scaleX(0.940) rotate(0.03deg);transform-origin:0 50%;">0</div><div style="left:1.2px;top:354.16px;width:366.8px;height:0.6px;background:#f2f2f2;"></div><div class="t" style="left:4px;top:340.4px;height:12.56px;line-height:12.56px;font-size:9.66px;color:#2a2a2a;transform:scaleX(0.919) rotate(0.03deg);transform-origin:0 50%;">com_f4_kp_iq</div><div style="left:129px;top:344.88px;width:5.2px;height:3.2px;background:#222;clip-path:polygon(0 0,100% 0,50% 100%);"></div><div class="t" style="left:143.2px;top:340.26px;height:12.83px;line-height:12.83px;font-size:9.87px;color:#2a2a2a;transform:scaleX(0.940) rotate(0.03deg);transform-origin:0 50%;">FLOAT</div><div style="left:188.2px;top:344.88px;width:5.2px;height:3.2px;background:#222;clip-path:polygon(0 0,100% 0,50% 100%);"></div><div class="t" style="left:202.4px;top:340.26px;height:12.83px;line-height:12.83px;font-size:9.87px;color:#2a2a2a;transform:scaleX(0.940) rotate(0.03deg);transform-origin:0 50%;">Q0</div><div style="left:227.4px;top:344.88px;width:5.2px;height:3.2px;background:#222;clip-path:polygon(0 0,100% 0,50% 100%);"></div><div style="left:244.4px;top:340.48px;width:10.8px;height:10.8px;background:linear-gradient(135deg,#d9dbe8,#eeeef5);border:0.6px solid #aeaeae;box-sizing:border-box;"></div><svg style="position:absolute;left:245.6px;top:340.68px;width:9.2px;height:9.6px" viewBox="0 0 10 10" fill="none"><path d="M1.5 5.2L4 8L8.6 1.6" stroke="#6874a4" stroke-width="1.3"/></svg><div class="t" style="left:266.4px;top:340.26px;height:12.83px;line-height:12.83px;font-size:9.87px;color:#2a2a2a;transform:scaleX(0.940) rotate(0.03deg);transform-origin:0 50%;">2</div><div style="left:318px;top:340.48px;width:10.8px;height:10.8px;background:linear-gradient(135deg,#e6e6e6,#fafafa);border:0.6px solid #aeaeae;box-sizing:border-box;"></div><div class="t" style="left:342.4px;top:340.26px;height:12.83px;line-height:12.83px;font-size:9.87px;color:#2a2a2a;transform:scaleX(0.940) rotate(0.03deg);transform-origin:0 50%;">0</div><div style="left:1.2px;top:371.52px;width:366.8px;height:0.6px;background:#f2f2f2;"></div><div class="t" style="left:4px;top:357.76px;height:12.56px;line-height:12.56px;font-size:9.66px;color:#2a2a2a;transform:scaleX(0.936) rotate(0.03deg);transform-origin:0 50%;">com_f4_ki_iq</div><div style="left:129px;top:362.24px;width:5.2px;height:3.2px;background:#222;clip-path:polygon(0 0,100% 0,50% 100%);"></div><div class="t" style="left:143.2px;top:357.62px;height:12.83px;line-height:12.83px;font-size:9.87px;color:#2a2a2a;transform:scaleX(0.940) rotate(0.03deg);transform-origin:0 50%;">FLOAT</div><div style="left:188.2px;top:362.24px;width:5.2px;height:3.2px;background:#222;clip-path:polygon(0 0,100% 0,50% 100%);"></div><div class="t" style="left:202.4px;top:357.62px;height:12.83px;line-height:12.83px;font-size:9.87px;color:#2a2a2a;transform:scaleX(0.940) rotate(0.03deg);transform-origin:0 50%;">Q0</div><div style="left:227.4px;top:362.24px;width:5.2px;height:3.2px;background:#222;clip-path:polygon(0 0,100% 0,50% 100%);"></div><div style="left:244.4px;top:357.84px;width:10.8px;height:10.8px;background:linear-gradient(135deg,#d9dbe8,#eeeef5);border:0.6px solid #aeaeae;box-sizing:border-box;"></div><svg style="position:absolute;left:245.6px;top:358.04px;width:9.2px;height:9.6px" viewBox="0 0 10 10" fill="none"><path d="M1.5 5.2L4 8L8.6 1.6" stroke="#6874a4" stroke-width="1.3"/></svg><div class="t" style="left:266.4px;top:357.62px;height:12.83px;line-height:12.83px;font-size:9.87px;color:#2a2a2a;transform:scaleX(0.940) rotate(0.03deg);transform-origin:0 50%;">0.4</div><div style="left:318px;top:357.84px;width:10.8px;height:10.8px;background:linear-gradient(135deg,#e6e6e6,#fafafa);border:0.6px solid #aeaeae;box-sizing:border-box;"></div><div class="t" style="left:342.4px;top:357.62px;height:12.83px;line-height:12.83px;font-size:9.87px;color:#2a2a2a;transform:scaleX(0.940) rotate(0.03deg);transform-origin:0 50%;">0</div><div style="left:1.2px;top:388.88px;width:366.8px;height:0.6px;background:#f2f2f2;"></div><div class="t" style="left:4px;top:375.12px;height:12.56px;line-height:12.56px;font-size:9.66px;color:#2a2a2a;transform:scaleX(1.041) rotate(0.03deg);transform-origin:0 50%;">com_f4_speed_lpf_k</div><div style="left:129px;top:379.6px;width:5.2px;height:3.2px;background:#222;clip-path:polygon(0 0,100% 0,50% 100%);"></div><div class="t" style="left:143.2px;top:374.98px;height:12.83px;line-height:12.83px;font-size:9.87px;color:#2a2a2a;transform:scaleX(0.940) rotate(0.03deg);transform-origin:0 50%;">FLOAT</div><div style="left:188.2px;top:379.6px;width:5.2px;height:3.2px;background:#222;clip-path:polygon(0 0,100% 0,50% 100%);"></div><div class="t" style="left:202.4px;top:374.98px;height:12.83px;line-height:12.83px;font-size:9.87px;color:#2a2a2a;transform:scaleX(0.940) rotate(0.03deg);transform-origin:0 50%;">Q0</div><div style="left:227.4px;top:379.6px;width:5.2px;height:3.2px;background:#222;clip-path:polygon(0 0,100% 0,50% 100%);"></div><div style="left:244.4px;top:375.2px;width:10.8px;height:10.8px;background:linear-gradient(135deg,#d9dbe8,#eeeef5);border:0.6px solid #aeaeae;box-sizing:border-box;"></div><svg style="position:absolute;left:245.6px;top:375.4px;width:9.2px;height:9.6px" viewBox="0 0 10 10" fill="none"><path d="M1.5 5.2L4 8L8.6 1.6" stroke="#6874a4" stroke-width="1.3"/></svg><div class="t" style="left:266.4px;top:374.98px;height:12.83px;line-height:12.83px;font-size:9.87px;color:#2a2a2a;transform:scaleX(0.940) rotate(0.03deg);transform-origin:0 50%;">0.0314</div><div style="left:318px;top:375.2px;width:10.8px;height:10.8px;background:linear-gradient(135deg,#e6e6e6,#fafafa);border:0.6px solid #aeaeae;box-sizing:border-box;"></div><div class="t" style="left:342.4px;top:374.98px;height:12.83px;line-height:12.83px;font-size:9.87px;color:#2a2a2a;transform:scaleX(0.940) rotate(0.03deg);transform-origin:0 50%;">0</div><div style="left:1.2px;top:406.24px;width:366.8px;height:0.6px;background:#f2f2f2;"></div><div class="t" style="left:4px;top:392.48px;height:12.56px;line-height:12.56px;font-size:9.66px;color:#2a2a2a;transform:scaleX(1.043) rotate(0.03deg);transform-origin:0 50%;">com_f4_limit_speed_ch...</div><div style="left:129px;top:396.96px;width:5.2px;height:3.2px;background:#222;clip-path:polygon(0 0,100% 0,50% 100%);"></div><div class="t" style="left:143.2px;top:392.34px;height:12.83px;line-height:12.83px;font-size:9.87px;color:#2a2a2a;transform:scaleX(0.940) rotate(0.03deg);transform-origin:0 50%;">FLOAT</div><div style="left:188.2px;top:396.96px;width:5.2px;height:3.2px;background:#222;clip-path:polygon(0 0,100% 0,50% 100%);"></div><div class="t" style="left:202.4px;top:392.34px;height:12.83px;line-height:12.83px;font-size:9.87px;color:#2a2a2a;transform:scaleX(0.940) rotate(0.03deg);transform-origin:0 50%;">Q0</div><div style="left:227.4px;top:396.96px;width:5.2px;height:3.2px;background:#222;clip-path:polygon(0 0,100% 0,50% 100%);"></div><div style="left:244.4px;top:392.56px;width:10.8px;height:10.8px;background:linear-gradient(135deg,#d9dbe8,#eeeef5);border:0.6px solid #aeaeae;box-sizing:border-box;"></div><svg style="position:absolute;left:245.6px;top:392.76px;width:9.2px;height:9.6px" viewBox="0 0 10 10" fill="none"><path d="M1.5 5.2L4 8L8.6 1.6" stroke="#6874a4" stroke-width="1.3"/></svg><div class="t" style="left:266.4px;top:392.34px;height:12.83px;line-height:12.83px;font-size:9.87px;color:#2a2a2a;transform:scaleX(0.940) rotate(0.03deg);transform-origin:0 50%;">0.2</div><div style="left:318px;top:392.56px;width:10.8px;height:10.8px;background:linear-gradient(135deg,#e6e6e6,#fafafa);border:0.6px solid #aeaeae;box-sizing:border-box;"></div><div class="t" style="left:342.4px;top:392.34px;height:12.83px;line-height:12.83px;font-size:9.87px;color:#2a2a2a;transform:scaleX(0.940) rotate(0.03deg);transform-origin:0 50%;">0</div><div style="left:1.2px;top:423.6px;width:366.8px;height:0.6px;background:#f2f2f2;"></div><div class="t" style="left:4px;top:409.84px;height:12.56px;line-height:12.56px;font-size:9.66px;color:#2a2a2a;transform:scaleX(1.006) rotate(0.03deg);transform-origin:0 50%;">com_s2_max_speed_rpm</div><div style="left:129px;top:414.32px;width:5.2px;height:3.2px;background:#222;clip-path:polygon(0 0,100% 0,50% 100%);"></div><div class="t" style="left:143.2px;top:409.7px;height:12.83px;line-height:12.83px;font-size:9.87px;color:#2a2a2a;transform:scaleX(0.940) rotate(0.03deg);transform-origin:0 50%;">INT16</div><div style="left:188.2px;top:414.32px;width:5.2px;height:3.2px;background:#222;clip-path:polygon(0 0,100% 0,50% 100%);"></div><div class="t" style="left:202.4px;top:409.7px;height:12.83px;line-height:12.83px;font-size:9.87px;color:#2a2a2a;transform:scaleX(0.940) rotate(0.03deg);transform-origin:0 50%;">Q0</div><div style="left:227.4px;top:414.32px;width:5.2px;height:3.2px;background:#222;clip-path:polygon(0 0,100% 0,50% 100%);"></div><div style="left:244.4px;top:409.92px;width:10.8px;height:10.8px;background:linear-gradient(135deg,#d9dbe8,#eeeef5);border:0.6px solid #aeaeae;box-sizing:border-box;"></div><svg style="position:absolute;left:245.6px;top:410.12px;width:9.2px;height:9.6px" viewBox="0 0 10 10" fill="none"><path d="M1.5 5.2L4 8L8.6 1.6" stroke="#6874a4" stroke-width="1.3"/></svg><div class="t" style="left:266.4px;top:409.7px;height:12.83px;line-height:12.83px;font-size:9.87px;color:#2a2a2a;transform:scaleX(0.940) rotate(0.03deg);transform-origin:0 50%;">2650</div><div style="left:318px;top:409.92px;width:10.8px;height:10.8px;background:linear-gradient(135deg,#e6e6e6,#fafafa);border:0.6px solid #aeaeae;box-sizing:border-box;"></div><div class="t" style="left:342.4px;top:409.7px;height:12.83px;line-height:12.83px;font-size:9.87px;color:#2a2a2a;transform:scaleX(0.940) rotate(0.03deg);transform-origin:0 50%;">0</div><div style="left:1.2px;top:440.96px;width:366.8px;height:0.6px;background:#f2f2f2;"></div><div class="t" style="left:4px;top:427.2px;height:12.56px;line-height:12.56px;font-size:9.66px;color:#2a2a2a;transform:scaleX(0.941) rotate(0.03deg);transform-origin:0 50%;">com_f4_kp_speed</div><div style="left:129px;top:431.68px;width:5.2px;height:3.2px;background:#222;clip-path:polygon(0 0,100% 0,50% 100%);"></div><div class="t" style="left:143.2px;top:427.06px;height:12.83px;line-height:12.83px;font-size:9.87px;color:#2a2a2a;transform:scaleX(0.940) rotate(0.03deg);transform-origin:0 50%;">FLOAT</div><div style="left:188.2px;top:431.68px;width:5.2px;height:3.2px;background:#222;clip-path:polygon(0 0,100% 0,50% 100%);"></div><div class="t" style="left:202.4px;top:427.06px;height:12.83px;line-height:12.83px;font-size:9.87px;color:#2a2a2a;transform:scaleX(0.940) rotate(0.03deg);transform-origin:0 50%;">Q0</div><div style="left:227.4px;top:431.68px;width:5.2px;height:3.2px;background:#222;clip-path:polygon(0 0,100% 0,50% 100%);"></div><div style="left:244.4px;top:427.28px;width:10.8px;height:10.8px;background:linear-gradient(135deg,#d9dbe8,#eeeef5);border:0.6px solid #aeaeae;box-sizing:border-box;"></div><svg style="position:absolute;left:245.6px;top:427.48px;width:9.2px;height:9.6px" viewBox="0 0 10 10" fill="none"><path d="M1.5 5.2L4 8L8.6 1.6" stroke="#6874a4" stroke-width="1.3"/></svg><div class="t" style="left:266.4px;top:427.06px;height:12.83px;line-height:12.83px;font-size:9.87px;color:#2a2a2a;transform:scaleX(0.940) rotate(0.03deg);transform-origin:0 50%;">0.002</div><div style="left:318px;top:427.28px;width:10.8px;height:10.8px;background:linear-gradient(135deg,#e6e6e6,#fafafa);border:0.6px solid #aeaeae;box-sizing:border-box;"></div><div class="t" style="left:342.4px;top:427.06px;height:12.83px;line-height:12.83px;font-size:9.87px;color:#2a2a2a;transform:scaleX(0.940) rotate(0.03deg);transform-origin:0 50%;">0</div><div style="left:1.2px;top:458.32px;width:366.8px;height:0.6px;background:#f2f2f2;"></div><div class="t" style="left:4px;top:444.56px;height:12.56px;line-height:12.56px;font-size:9.66px;color:#2a2a2a;transform:scaleX(0.948) rotate(0.03deg);transform-origin:0 50%;">com_f4_ki_speed</div><div style="left:129px;top:449.04px;width:5.2px;height:3.2px;background:#222;clip-path:polygon(0 0,100% 0,50% 100%);"></div><div class="t" style="left:143.2px;top:444.42px;height:12.83px;line-height:12.83px;font-size:9.87px;color:#2a2a2a;transform:scaleX(0.940) rotate(0.03deg);transform-origin:0 50%;">FLOAT</div><div style="left:188.2px;top:449.04px;width:5.2px;height:3.2px;background:#222;clip-path:polygon(0 0,100% 0,50% 100%);"></div><div class="t" style="left:202.4px;top:444.42px;height:12.83px;line-height:12.83px;font-size:9.87px;color:#2a2a2a;transform:scaleX(0.940) rotate(0.03deg);transform-origin:0 50%;">Q0</div><div style="left:227.4px;top:449.04px;width:5.2px;height:3.2px;background:#222;clip-path:polygon(0 0,100% 0,50% 100%);"></div><div style="left:244.4px;top:444.64px;width:10.8px;height:10.8px;background:linear-gradient(135deg,#d9dbe8,#eeeef5);border:0.6px solid #aeaeae;box-sizing:border-box;"></div><svg style="position:absolute;left:245.6px;top:444.84px;width:9.2px;height:9.6px" viewBox="0 0 10 10" fill="none"><path d="M1.5 5.2L4 8L8.6 1.6" stroke="#6874a4" stroke-width="1.3"/></svg><div class="t" style="left:266.4px;top:444.42px;height:12.83px;line-height:12.83px;font-size:9.87px;color:#2a2a2a;transform:scaleX(0.940) rotate(0.03deg);transform-origin:0 50%;">0.0002</div><div style="left:318px;top:444.64px;width:10.8px;height:10.8px;background:linear-gradient(135deg,#e6e6e6,#fafafa);border:0.6px solid #aeaeae;box-sizing:border-box;"></div><div class="t" style="left:342.4px;top:444.42px;height:12.83px;line-height:12.83px;font-size:9.87px;color:#2a2a2a;transform:scaleX(0.940) rotate(0.03deg);transform-origin:0 50%;">0</div><div style="left:1.2px;top:475.68px;width:366.8px;height:0.6px;background:#f2f2f2;"></div><div class="t" style="left:4px;top:461.92px;height:12.56px;line-height:12.56px;font-size:9.66px;color:#2a2a2a;transform:scaleX(0.896) rotate(0.03deg);transform-origin:0 50%;">com_f4_k_emf</div><div style="left:129px;top:466.4px;width:5.2px;height:3.2px;background:#222;clip-path:polygon(0 0,100% 0,50% 100%);"></div><div class="t" style="left:143.2px;top:461.78px;height:12.83px;line-height:12.83px;font-size:9.87px;color:#2a2a2a;transform:scaleX(0.940) rotate(0.03deg);transform-origin:0 50%;">FLOAT</div><div style="left:188.2px;top:466.4px;width:5.2px;height:3.2px;background:#222;clip-path:polygon(0 0,100% 0,50% 100%);"></div><div class="t" style="left:202.4px;top:461.78px;height:12.83px;line-height:12.83px;font-size:9.87px;color:#2a2a2a;transform:scaleX(0.940) rotate(0.03deg);transform-origin:0 50%;">Q0</div><div style="left:227.4px;top:466.4px;width:5.2px;height:3.2px;background:#222;clip-path:polygon(0 0,100% 0,50% 100%);"></div><div style="left:244.4px;top:462px;width:10.8px;height:10.8px;background:linear-gradient(135deg,#d9dbe8,#eeeef5);border:0.6px solid #aeaeae;box-sizing:border-box;"></div><svg style="position:absolute;left:245.6px;top:462.2px;width:9.2px;height:9.6px" viewBox="0 0 10 10" fill="none"><path d="M1.5 5.2L4 8L8.6 1.6" stroke="#6874a4" stroke-width="1.3"/></svg><div class="t" style="left:266.4px;top:461.78px;height:12.83px;line-height:12.83px;font-size:9.87px;color:#2a2a2a;transform:scaleX(0.940) rotate(0.03deg);transform-origin:0 50%;">1</div><div style="left:318px;top:462px;width:10.8px;height:10.8px;background:linear-gradient(135deg,#e6e6e6,#fafafa);border:0.6px solid #aeaeae;box-sizing:border-box;"></div><div class="t" style="left:342.4px;top:461.78px;height:12.83px;line-height:12.83px;font-size:9.87px;color:#2a2a2a;transform:scaleX(0.940) rotate(0.03deg);transform-origin:0 50%;">0</div><div style="left:1.2px;top:493.04px;width:366.8px;height:0.6px;background:#f2f2f2;"></div><div class="t" style="left:4px;top:479.28px;height:12.56px;line-height:12.56px;font-size:9.66px;color:#2a2a2a;transform:scaleX(0.899) rotate(0.03deg);transform-origin:0 50%;">com_f4_k_theta</div><div style="left:129px;top:483.76px;width:5.2px;height:3.2px;background:#222;clip-path:polygon(0 0,100% 0,50% 100%);"></div><div class="t" style="left:143.2px;top:479.14px;height:12.83px;line-height:12.83px;font-size:9.87px;color:#2a2a2a;transform:scaleX(0.940) rotate(0.03deg);transform-origin:0 50%;">FLOAT</div><div style="left:188.2px;top:483.76px;width:5.2px;height:3.2px;background:#222;clip-path:polygon(0 0,100% 0,50% 100%);"></div><div class="t" style="left:202.4px;top:479.14px;height:12.83px;line-height:12.83px;font-size:9.87px;color:#2a2a2a;transform:scaleX(0.940) rotate(0.03deg);transform-origin:0 50%;">Q0</div><div style="left:227.4px;top:483.76px;width:5.2px;height:3.2px;background:#222;clip-path:polygon(0 0,100% 0,50% 100%);"></div><div style="left:244.4px;top:479.36px;width:10.8px;height:10.8px;background:linear-gradient(135deg,#d9dbe8,#eeeef5);border:0.6px solid #aeaeae;box-sizing:border-box;"></div><svg style="position:absolute;left:245.6px;top:479.56px;width:9.2px;height:9.6px" viewBox="0 0 10 10" fill="none"><path d="M1.5 5.2L4 8L8.6 1.6" stroke="#6874a4" stroke-width="1.3"/></svg><div class="t" style="left:266.4px;top:479.14px;height:12.83px;line-height:12.83px;font-size:9.87px;color:#2a2a2a;transform:scaleX(0.940) rotate(0.03deg);transform-origin:0 50%;">0.1</div><div style="left:318px;top:479.36px;width:10.8px;height:10.8px;background:linear-gradient(135deg,#e6e6e6,#fafafa);border:0.6px solid #aeaeae;box-sizing:border-box;"></div><div class="t" style="left:342.4px;top:479.14px;height:12.83px;line-height:12.83px;font-size:9.87px;color:#2a2a2a;transform:scaleX(0.940) rotate(0.03deg);transform-origin:0 50%;">0</div><div style="left:1.2px;top:510.4px;width:366.8px;height:0.6px;background:#f2f2f2;"></div><div class="t" style="left:4px;top:496.64px;height:12.56px;line-height:12.56px;font-size:9.66px;color:#2a2a2a;transform:scaleX(1.024) rotate(0.03deg);transform-origin:0 50%;">com_s2_id_up_speed_r...</div><div style="left:129px;top:501.12px;width:5.2px;height:3.2px;background:#222;clip-path:polygon(0 0,100% 0,50% 100%);"></div><div class="t" style="left:143.2px;top:496.5px;height:12.83px;line-height:12.83px;font-size:9.87px;color:#2a2a2a;transform:scaleX(0.940) rotate(0.03deg);transform-origin:0 50%;">INT16</div><div style="left:188.2px;top:501.12px;width:5.2px;height:3.2px;background:#222;clip-path:polygon(0 0,100% 0,50% 100%);"></div><div class="t" style="left:202.4px;top:496.5px;height:12.83px;line-height:12.83px;font-size:9.87px;color:#2a2a2a;transform:scaleX(0.940) rotate(0.03deg);transform-origin:0 50%;">Q0</div><div style="left:227.4px;top:501.12px;width:5.2px;height:3.2px;background:#222;clip-path:polygon(0 0,100% 0,50% 100%);"></div><div style="left:244.4px;top:496.72px;width:10.8px;height:10.8px;background:linear-gradient(135deg,#d9dbe8,#eeeef5);border:0.6px solid #aeaeae;box-sizing:border-box;"></div><svg style="position:absolute;left:245.6px;top:496.92px;width:9.2px;height:9.6px" viewBox="0 0 10 10" fill="none"><path d="M1.5 5.2L4 8L8.6 1.6" stroke="#6874a4" stroke-width="1.3"/></svg><div class="t" style="left:266.4px;top:496.5px;height:12.83px;line-height:12.83px;font-size:9.87px;color:#2a2a2a;transform:scaleX(0.940) rotate(0.03deg);transform-origin:0 50%;">350</div><div style="left:318px;top:496.72px;width:10.8px;height:10.8px;background:linear-gradient(135deg,#e6e6e6,#fafafa);border:0.6px solid #aeaeae;box-sizing:border-box;"></div><div class="t" style="left:342.4px;top:496.5px;height:12.83px;line-height:12.83px;font-size:9.87px;color:#2a2a2a;transform:scaleX(0.940) rotate(0.03deg);transform-origin:0 50%;">0</div><div style="left:1.2px;top:527.76px;width:366.8px;height:0.6px;background:#f2f2f2;"></div><div class="t" style="left:4px;top:514px;height:12.56px;line-height:12.56px;font-size:9.66px;color:#2a2a2a;transform:scaleX(0.928) rotate(0.03deg);transform-origin:0 50%;">com_f4_ref_id</div><div style="left:129px;top:518.48px;width:5.2px;height:3.2px;background:#222;clip-path:polygon(0 0,100% 0,50% 100%);"></div><div class="t" style="left:143.2px;top:513.86px;height:12.83px;line-height:12.83px;font-size:9.87px;color:#2a2a2a;transform:scaleX(0.940) rotate(0.03deg);transform-origin:0 50%;">FLOAT</div><div style="left:188.2px;top:518.48px;width:5.2px;height:3.2px;background:#222;clip-path:polygon(0 0,100% 0,50% 100%);"></div><div class="t" style="left:202.4px;top:513.86px;height:12.83px;line-height:12.83px;font-size:9.87px;color:#2a2a2a;transform:scaleX(0.940) rotate(0.03deg);transform-origin:0 50%;">Q0</div><div style="left:227.4px;top:518.48px;width:5.2px;height:3.2px;background:#222;clip-path:polygon(0 0,100% 0,50% 100%);"></div><div style="left:244.4px;top:514.08px;width:10.8px;height:10.8px;background:linear-gradient(135deg,#d9dbe8,#eeeef5);border:0.6px solid #aeaeae;box-sizing:border-box;"></div><svg style="position:absolute;left:245.6px;top:514.28px;width:9.2px;height:9.6px" viewBox="0 0 10 10" fill="none"><path d="M1.5 5.2L4 8L8.6 1.6" stroke="#6874a4" stroke-width="1.3"/></svg><div class="t" style="left:266.4px;top:513.86px;height:12.83px;line-height:12.83px;font-size:9.87px;color:#2a2a2a;transform:scaleX(0.940) rotate(0.03deg);transform-origin:0 50%;">0.2</div><div style="left:318px;top:514.08px;width:10.8px;height:10.8px;background:linear-gradient(135deg,#e6e6e6,#fafafa);border:0.6px solid #aeaeae;box-sizing:border-box;"></div><div class="t" style="left:342.4px;top:513.86px;height:12.83px;line-height:12.83px;font-size:9.87px;color:#2a2a2a;transform:scaleX(0.940) rotate(0.03deg);transform-origin:0 50%;">0</div><div style="left:1.2px;top:545.12px;width:366.8px;height:0.6px;background:#f2f2f2;"></div><div class="t" style="left:4px;top:531.36px;height:12.56px;line-height:12.56px;font-size:9.66px;color:#2a2a2a;transform:scaleX(1.007) rotate(0.03deg);transform-origin:0 50%;">com_s2_id_down_spee...</div><div style="left:129px;top:535.84px;width:5.2px;height:3.2px;background:#222;clip-path:polygon(0 0,100% 0,50% 100%);"></div><div class="t" style="left:143.2px;top:531.22px;height:12.83px;line-height:12.83px;font-size:9.87px;color:#2a2a2a;transform:scaleX(0.940) rotate(0.03deg);transform-origin:0 50%;">INT16</div><div style="left:188.2px;top:535.84px;width:5.2px;height:3.2px;background:#222;clip-path:polygon(0 0,100% 0,50% 100%);"></div><div class="t" style="left:202.4px;top:531.22px;height:12.83px;line-height:12.83px;font-size:9.87px;color:#2a2a2a;transform:scaleX(0.940) rotate(0.03deg);transform-origin:0 50%;">Q0</div><div style="left:227.4px;top:535.84px;width:5.2px;height:3.2px;background:#222;clip-path:polygon(0 0,100% 0,50% 100%);"></div><div style="left:244.4px;top:531.44px;width:10.8px;height:10.8px;background:linear-gradient(135deg,#d9dbe8,#eeeef5);border:0.6px solid #aeaeae;box-sizing:border-box;"></div><svg style="position:absolute;left:245.6px;top:531.64px;width:9.2px;height:9.6px" viewBox="0 0 10 10" fill="none"><path d="M1.5 5.2L4 8L8.6 1.6" stroke="#6874a4" stroke-width="1.3"/></svg><div class="t" style="left:266.4px;top:531.22px;height:12.83px;line-height:12.83px;font-size:9.87px;color:#2a2a2a;transform:scaleX(0.940) rotate(0.03deg);transform-origin:0 50%;">600</div><div style="left:318px;top:531.44px;width:10.8px;height:10.8px;background:linear-gradient(135deg,#e6e6e6,#fafafa);border:0.6px solid #aeaeae;box-sizing:border-box;"></div><div class="t" style="left:342.4px;top:531.22px;height:12.83px;line-height:12.83px;font-size:9.87px;color:#2a2a2a;transform:scaleX(0.940) rotate(0.03deg);transform-origin:0 50%;">0</div><div style="left:1.2px;top:562.48px;width:366.8px;height:0.6px;background:#f2f2f2;"></div><div class="t" style="left:4px;top:548.72px;height:12.56px;line-height:12.56px;font-size:9.66px;color:#2a2a2a;transform:scaleX(1.084) rotate(0.03deg);transform-origin:0 50%;">gui_f4_overcurrent_limit</div><div style="left:129px;top:553.2px;width:5.2px;height:3.2px;background:#222;clip-path:polygon(0 0,100% 0,50% 100%);"></div><div class="t" style="left:143.2px;top:548.58px;height:12.83px;line-height:12.83px;font-size:9.87px;color:#2a2a2a;transform:scaleX(0.940) rotate(0.03deg);transform-origin:0 50%;">FLOAT</div><div style="left:188.2px;top:553.2px;width:5.2px;height:3.2px;background:#222;clip-path:polygon(0 0,100% 0,50% 100%);"></div><div class="t" style="left:202.4px;top:548.58px;height:12.83px;line-height:12.83px;font-size:9.87px;color:#2a2a2a;transform:scaleX(0.940) rotate(0.03deg);transform-origin:0 50%;">Q0</div><div style="left:227.4px;top:553.2px;width:5.2px;height:3.2px;background:#222;clip-path:polygon(0 0,100% 0,50% 100%);"></div><div style="left:244.4px;top:548.8px;width:10.8px;height:10.8px;background:linear-gradient(135deg,#d9dbe8,#eeeef5);border:0.6px solid #aeaeae;box-sizing:border-box;"></div><svg style="position:absolute;left:245.6px;top:549px;width:9.2px;height:9.6px" viewBox="0 0 10 10" fill="none"><path d="M1.5 5.2L4 8L8.6 1.6" stroke="#6874a4" stroke-width="1.3"/></svg><div class="t" style="left:266.4px;top:548.58px;height:12.83px;line-height:12.83px;font-size:9.87px;color:#2a2a2a;transform:scaleX(0.940) rotate(0.03deg);transform-origin:0 50%;">0</div><div style="left:318px;top:548.8px;width:10.8px;height:10.8px;background:linear-gradient(135deg,#e6e6e6,#fafafa);border:0.6px solid #aeaeae;box-sizing:border-box;"></div><div class="t" style="left:342.4px;top:548.58px;height:12.83px;line-height:12.83px;font-size:9.87px;color:#2a2a2a;transform:scaleX(0.940) rotate(0.03deg);transform-origin:0 50%;">0</div><div style="left:1.2px;top:579.84px;width:366.8px;height:0.6px;background:#f2f2f2;"></div><div style="left:129px;top:570.56px;width:5.2px;height:3.2px;background:#222;clip-path:polygon(0 0,100% 0,50% 100%);"></div><div class="t" style="left:143.2px;top:565.94px;height:12.83px;line-height:12.83px;font-size:9.87px;color:#2a2a2a;transform:scaleX(0.940) rotate(0.03deg);transform-origin:0 50%;">UINT8</div><div style="left:188.2px;top:570.56px;width:5.2px;height:3.2px;background:#222;clip-path:polygon(0 0,100% 0,50% 100%);"></div><div class="t" style="left:202.4px;top:565.94px;height:12.83px;line-height:12.83px;font-size:9.87px;color:#2a2a2a;transform:scaleX(0.940) rotate(0.03deg);transform-origin:0 50%;">Q0</div><div style="left:227.4px;top:570.56px;width:5.2px;height:3.2px;background:#222;clip-path:polygon(0 0,100% 0,50% 100%);"></div><div style="left:244.4px;top:566.16px;width:10.8px;height:10.8px;background:linear-gradient(135deg,#e6e6e6,#fafafa);border:0.6px solid #aeaeae;box-sizing:border-box;"></div><div style="left:318px;top:566.16px;width:10.8px;height:10.8px;background:linear-gradient(135deg,#e6e6e6,#fafafa);border:0.6px solid #aeaeae;box-sizing:border-box;"></div><div class="t" style="left:342.4px;top:565.94px;height:12.83px;line-height:12.83px;font-size:9.87px;color:#2a2a2a;transform:scaleX(0.940) rotate(0.03deg);transform-origin:0 50%;">0</div><div style="left:1.2px;top:597.2px;width:366.8px;height:0.6px;background:#f2f2f2;"></div><div style="left:129px;top:587.92px;width:5.2px;height:3.2px;background:#222;clip-path:polygon(0 0,100% 0,50% 100%);"></div><div class="t" style="left:143.2px;top:583.3px;height:12.83px;line-height:12.83px;font-size:9.87px;color:#2a2a2a;transform:scaleX(0.940) rotate(0.03deg);transform-origin:0 50%;">UINT8</div><div style="left:188.2px;top:587.92px;width:5.2px;height:3.2px;background:#222;clip-path:polygon(0 0,100% 0,50% 100%);"></div><div class="t" style="left:202.4px;top:583.3px;height:12.83px;line-height:12.83px;font-size:9.87px;color:#2a2a2a;transform:scaleX(0.940) rotate(0.03deg);transform-origin:0 50%;">Q0</div><div style="left:227.4px;top:587.92px;width:5.2px;height:3.2px;background:#222;clip-path:polygon(0 0,100% 0,50% 100%);"></div><div style="left:244.4px;top:583.52px;width:10.8px;height:10.8px;background:linear-gradient(135deg,#e6e6e6,#fafafa);border:0.6px solid #aeaeae;box-sizing:border-box;"></div><div style="left:318px;top:583.52px;width:10.8px;height:10.8px;background:linear-gradient(135deg,#e6e6e6,#fafafa);border:0.6px solid #aeaeae;box-sizing:border-box;"></div><div class="t" style="left:342.4px;top:583.3px;height:12.83px;line-height:12.83px;font-size:9.87px;color:#2a2a2a;transform:scaleX(0.940) rotate(0.03deg);transform-origin:0 50%;">0</div><div style="left:1.2px;top:614.56px;width:366.8px;height:0.6px;background:#f2f2f2;"></div><div style="left:129px;top:605.28px;width:5.2px;height:3.2px;background:#222;clip-path:polygon(0 0,100% 0,50% 100%);"></div><div class="t" style="left:143.2px;top:600.66px;height:12.83px;line-height:12.83px;font-size:9.87px;color:#2a2a2a;transform:scaleX(0.940) rotate(0.03deg);transform-origin:0 50%;">UINT8</div><div style="left:188.2px;top:605.28px;width:5.2px;height:3.2px;background:#222;clip-path:polygon(0 0,100% 0,50% 100%);"></div><div class="t" style="left:202.4px;top:600.66px;height:12.83px;line-height:12.83px;font-size:9.87px;color:#2a2a2a;transform:scaleX(0.940) rotate(0.03deg);transform-origin:0 50%;">Q0</div><div style="left:227.4px;top:605.28px;width:5.2px;height:3.2px;background:#222;clip-path:polygon(0 0,100% 0,50% 100%);"></div><div style="left:244.4px;top:600.88px;width:10.8px;height:10.8px;background:linear-gradient(135deg,#e6e6e6,#fafafa);border:0.6px solid #aeaeae;box-sizing:border-box;"></div><div style="left:318px;top:600.88px;width:10.8px;height:10.8px;background:linear-gradient(135deg,#e6e6e6,#fafafa);border:0.6px solid #aeaeae;box-sizing:border-box;"></div><div class="t" style="left:342.4px;top:600.66px;height:12.83px;line-height:12.83px;font-size:9.87px;color:#2a2a2a;transform:scaleX(0.940) rotate(0.03deg);transform-origin:0 50%;">0</div><div style="left:1.2px;top:631.92px;width:366.8px;height:0.6px;background:#f2f2f2;"></div><div style="left:129px;top:622.64px;width:5.2px;height:3.2px;background:#222;clip-path:polygon(0 0,100% 0,50% 100%);"></div><div class="t" style="left:143.2px;top:618.02px;height:12.83px;line-height:12.83px;font-size:9.87px;color:#2a2a2a;transform:scaleX(0.940) rotate(0.03deg);transform-origin:0 50%;">UINT8</div><div style="left:188.2px;top:622.64px;width:5.2px;height:3.2px;background:#222;clip-path:polygon(0 0,100% 0,50% 100%);"></div><div class="t" style="left:202.4px;top:618.02px;height:12.83px;line-height:12.83px;font-size:9.87px;color:#2a2a2a;transform:scaleX(0.940) rotate(0.03deg);transform-origin:0 50%;">Q0</div><div style="left:227.4px;top:622.64px;width:5.2px;height:3.2px;background:#222;clip-path:polygon(0 0,100% 0,50% 100%);"></div><div style="left:244.4px;top:618.24px;width:10.8px;height:10.8px;background:linear-gradient(135deg,#e6e6e6,#fafafa);border:0.6px solid #aeaeae;box-sizing:border-box;"></div><div style="left:318px;top:618.24px;width:10.8px;height:10.8px;background:linear-gradient(135deg,#e6e6e6,#fafafa);border:0.6px solid #aeaeae;box-sizing:border-box;"></div><div class="t" style="left:342.4px;top:618.02px;height:12.83px;line-height:12.83px;font-size:9.87px;color:#2a2a2a;transform:scaleX(0.940) rotate(0.03deg);transform-origin:0 50%;">0</div><div style="left:1.2px;top:649.28px;width:366.8px;height:0.6px;background:#f2f2f2;"></div><div style="left:129px;top:640px;width:5.2px;height:3.2px;background:#222;clip-path:polygon(0 0,100% 0,50% 100%);"></div><div class="t" style="left:143.2px;top:635.38px;height:12.83px;line-height:12.83px;font-size:9.87px;color:#2a2a2a;transform:scaleX(0.940) rotate(0.03deg);transform-origin:0 50%;">UINT8</div><div style="left:188.2px;top:640px;width:5.2px;height:3.2px;background:#222;clip-path:polygon(0 0,100% 0,50% 100%);"></div><div class="t" style="left:202.4px;top:635.38px;height:12.83px;line-height:12.83px;font-size:9.87px;color:#2a2a2a;transform:scaleX(0.940) rotate(0.03deg);transform-origin:0 50%;">Q0</div><div style="left:227.4px;top:640px;width:5.2px;height:3.2px;background:#222;clip-path:polygon(0 0,100% 0,50% 100%);"></div><div style="left:244.4px;top:635.6px;width:10.8px;height:10.8px;background:linear-gradient(135deg,#e6e6e6,#fafafa);border:0.6px solid #aeaeae;box-sizing:border-box;"></div><div style="left:318px;top:635.6px;width:10.8px;height:10.8px;background:linear-gradient(135deg,#e6e6e6,#fafafa);border:0.6px solid #aeaeae;box-sizing:border-box;"></div><div class="t" style="left:342.4px;top:635.38px;height:12.83px;line-height:12.83px;font-size:9.87px;color:#2a2a2a;transform:scaleX(0.940) rotate(0.03deg);transform-origin:0 50%;">0</div><div style="left:1.2px;top:666.64px;width:366.8px;height:0.6px;background:#f2f2f2;"></div><div style="left:129px;top:657.36px;width:5.2px;height:3.2px;background:#222;clip-path:polygon(0 0,100% 0,50% 100%);"></div><div class="t" style="left:143.2px;top:652.74px;height:12.83px;line-height:12.83px;font-size:9.87px;color:#2a2a2a;transform:scaleX(0.940) rotate(0.03deg);transform-origin:0 50%;">UINT8</div><div style="left:188.2px;top:657.36px;width:5.2px;height:3.2px;background:#222;clip-path:polygon(0 0,100% 0,50% 100%);"></div><div class="t" style="left:202.4px;top:652.74px;height:12.83px;line-height:12.83px;font-size:9.87px;color:#2a2a2a;transform:scaleX(0.940) rotate(0.03deg);transform-origin:0 50%;">Q0</div><div style="left:227.4px;top:657.36px;width:5.2px;height:3.2px;background:#222;clip-path:polygon(0 0,100% 0,50% 100%);"></div><div style="left:244.4px;top:652.96px;width:10.8px;height:10.8px;background:linear-gradient(135deg,#e6e6e6,#fafafa);border:0.6px solid #aeaeae;box-sizing:border-box;"></div><div style="left:318px;top:652.96px;width:10.8px;height:10.8px;background:linear-gradient(135deg,#e6e6e6,#fafafa);border:0.6px solid #aeaeae;box-sizing:border-box;"></div><div class="t" style="left:342.4px;top:652.74px;height:12.83px;line-height:12.83px;font-size:9.87px;color:#2a2a2a;transform:scaleX(0.940) rotate(0.03deg);transform-origin:0 50%;">0</div><div style="left:122.4px;top:24.8px;width:0.6px;height:633.2px;background:#f1f1f1;"></div><div style="left:140px;top:24.8px;width:0.6px;height:633.2px;background:#f1f1f1;"></div><div style="left:182px;top:24.8px;width:0.6px;height:633.2px;background:#f1f1f1;"></div><div style="left:198px;top:24.8px;width:0.6px;height:633.2px;background:#f1f1f1;"></div><div style="left:221.2px;top:24.8px;width:0.6px;height:633.2px;background:#f1f1f1;"></div><div style="left:238.4px;top:24.8px;width:0.6px;height:633.2px;background:#f1f1f1;"></div><div style="left:261.2px;top:24.8px;width:0.6px;height:633.2px;background:#f1f1f1;"></div><div style="left:310.4px;top:24.8px;width:0.6px;height:633.2px;background:#f1f1f1;"></div><div style="left:336.4px;top:24.8px;width:0.6px;height:633.2px;background:#f1f1f1;"></div></div>
<div style="left:390.8px;top:190.8px;width:11.2px;height:656.8px;background:#f7f7f7;border-left:0.4px solid #e2e2e2;box-sizing:border-box;"></div>
<div style="left:391.8px;top:208.4px;width:9.6px;height:80px;background:linear-gradient(90deg,#f2f2f2,#d9d9d9);border:0.5px solid #a9a9a9;box-sizing:border-box;border-radius:1px;"></div>
<div class="t" style="left:392.8px;top:194.07px;height:11.47px;line-height:11.47px;font-size:8.82px;color:#444;transform:scaleX(0.940) rotate(0.03deg);transform-origin:0 50%;">▴</div>
<div class="t" style="left:392.8px;top:835.27px;height:11.47px;line-height:11.47px;font-size:8.82px;color:#444;transform:scaleX(0.940) rotate(0.03deg);transform-origin:0 50%;">▾</div>
<div style="left:1247.2px;top:128.8px;width:331.4px;height:656.4px;overflow:hidden;"><div style="left:0px;top:0px;width:352.8px;height:656px;background:#e3ebf6;border:0.5px solid #8fa3bf;box-sizing:border-box;border-radius:2.5px 0 0 0;"></div><div style="left:1px;top:1px;width:351.8px;height:25.4px;background:linear-gradient(#d6dfec,#e0e8f3 50%,#e5ecf6);border-radius:2px 0 0 0;"></div><div class="t" style="left:10px;top:8.29px;height:15.02px;line-height:15.02px;font-size:11.55px;color:#8c9bb3;transform:scaleX(0.940) rotate(0.03deg);transform-origin:0 50%;">Window-Channel Settings</div><div style="left:285.2px;top:9.2px;width:25.6px;height:12.4px;border:0.5px solid #b3c0d3;background:linear-gradient(#e8eef6,#d9e2ef);box-sizing:border-box;border-radius:1px;"></div><div style="left:293.2px;top:14.4px;width:10px;height:4px;border:0.6px solid #8391a8;box-sizing:border-box;border-radius:0.8px;"></div><div style="left:315.6px;top:9.2px;width:25.2px;height:12.4px;border:0.5px solid #b3c0d3;background:linear-gradient(#e8eef6,#d9e2ef);box-sizing:border-box;border-radius:1px;"></div><div style="left:322.8px;top:12px;width:8.8px;height:6.8px;border:0.6px solid #8391a8;box-sizing:border-box;background:linear-gradient(90deg,transparent 45%,#8391a8 45%,#8391a8 55%,transparent 55%);"></div><div style="left:9.6px;top:26.4px;width:343.2px;height:17.6px;background:#d8d8d8;"></div><div style="left:9.6px;top:26.4px;width:82px;height:18.8px;background:#fff;"></div><div class="t" style="left:12px;top:28.71px;height:13.38px;line-height:13.38px;font-size:10.29px;color:#222;transform:scaleX(0.940) rotate(0.03deg);transform-origin:0 50%;">Window Settings</div><div style="left:93.2px;top:29.2px;width:80.8px;height:14.8px;background:#eaeaea;border:0.5px solid #8e8e8e;box-sizing:border-box;"></div><div class="t" style="left:96.8px;top:31.11px;height:13.38px;line-height:13.38px;font-size:10.29px;color:#222;transform:scaleX(0.940) rotate(0.03deg);transform-origin:0 50%;">Channel Settings</div><div style="left:9.6px;top:44px;width:343.2px;height:606.4px;background:#fff;"></div><div style="left:14px;top:47.2px;width:37.6px;height:18px;background:#fff;border:0.5px solid #a0a0a0;border-bottom:none;box-sizing:border-box;"></div><div class="t" style="left:18.8px;top:49.51px;height:13.38px;line-height:13.38px;font-size:10.29px;color:#222;transform:scaleX(0.940) rotate(0.03deg);transform-origin:0 50%;">Main</div><div style="left:54px;top:49.6px;width:41.2px;height:14.8px;background:#ececec;border:0.5px solid #8e8e8e;box-sizing:border-box;"></div><div class="t" style="left:58.4px;top:51.51px;height:13.38px;line-height:13.38px;font-size:10.29px;color:#222;transform:scaleX(0.940) rotate(0.03deg);transform-origin:0 50%;">Zoom 1</div><div style="left:96px;top:49.6px;width:41.2px;height:14.8px;background:#ececec;border:0.5px solid #8e8e8e;box-sizing:border-box;"></div><div class="t" style="left:100.4px;top:51.51px;height:13.38px;line-height:13.38px;font-size:10.29px;color:#222;transform:scaleX(0.940) rotate(0.03deg);transform-origin:0 50%;">Zoom 2</div><div style="left:138px;top:49.6px;width:41.2px;height:14.8px;background:#ececec;border:0.5px solid #8e8e8e;box-sizing:border-box;"></div><div class="t" style="left:142.4px;top:51.51px;height:13.38px;line-height:13.38px;font-size:10.29px;color:#222;transform:scaleX(0.940) rotate(0.03deg);transform-origin:0 50%;">Zoom 3</div><div style="left:180px;top:49.6px;width:41.2px;height:14.8px;background:#ececec;border:0.5px solid #8e8e8e;box-sizing:border-box;"></div><div class="t" style="left:184.4px;top:51.51px;height:13.38px;line-height:13.38px;font-size:10.29px;color:#222;transform:scaleX(0.940) rotate(0.03deg);transform-origin:0 50%;">Zoom 4</div><div style="left:12px;top:64.4px;width:340.8px;height:0.6px;background:#c4c4c4;"></div><div style="left:12px;top:64.4px;width:0.6px;height:558.8px;background:#dadada;"></div><div style="left:22.4px;top:88px;width:143.6px;height:104px;border:0.5px solid #f0f0f0;box-sizing:border-box;border-radius:1.5px;"></div><div style="left:28.8px;top:81.2px;width:34px;height:12px;background:#fff;"></div><div class="t" style="left:30.4px;top:80.71px;height:13.38px;line-height:13.38px;font-size:10.29px;color:#222;transform:scaleX(0.940) rotate(0.03deg);transform-origin:0 50%;">Trigger</div><div class="t" style="left:23.6px;top:101.91px;height:13.38px;line-height:13.38px;font-size:10.29px;color:#222;transform:scaleX(0.940) rotate(0.03deg);transform-origin:0 50%;">Position</div><div style="left:60px;top:98.4px;width:63.6px;height:17.6px;background:#fff;border-top:0.5px solid #c6cad1;box-sizing:border-box;"></div><div class="t" style="left:63.2px;top:100.05px;height:13.1px;line-height:13.1px;font-size:10.08px;color:#222;transform:scaleX(0.940) rotate(0.03deg);transform-origin:0 50%;">200.00m</div><div style="left:125.6px;top:98.8px;width:15.6px;height:16px;background:linear-gradient(#f6f6f6,#dcdcdc);border:0.5px solid #8c8c8c;box-sizing:border-box;border-radius:1px;"></div><div class="t" style="left:125.6px;top:99.01px;height:16.38px;line-height:16.38px;font-size:12.6px;color:#000;width:15.6px;text-align:center;transform:scaleX(0.940) rotate(0.03deg);transform-origin:50% 50%;font-weight:bold;"><</div><div style="left:142.4px;top:98.8px;width:15.6px;height:16px;background:linear-gradient(#f6f6f6,#dcdcdc);border:0.5px solid #8c8c8c;box-sizing:border-box;border-radius:1px;"></div><div class="t" style="left:142.4px;top:99.01px;height:16.38px;line-height:16.38px;font-size:12.6px;color:#000;width:15.6px;text-align:center;transform:scaleX(0.940) rotate(0.03deg);transform-origin:50% 50%;font-weight:bold;">></div><div class="t" style="left:24.4px;top:134.31px;height:13.38px;line-height:13.38px;font-size:10.29px;color:#222;transform:scaleX(0.940) rotate(0.03deg);transform-origin:0 50%;">Level</div><div style="left:60px;top:129.6px;width:63.6px;height:17.6px;background:#fff;border-top:0.5px solid #c6cad1;box-sizing:border-box;"></div><div class="t" style="left:63.2px;top:131.25px;height:13.1px;line-height:13.1px;font-size:10.08px;color:#222;transform:scaleX(0.940) rotate(0.03deg);transform-origin:0 50%;">0.00</div><div style="left:125.6px;top:130.4px;width:15.6px;height:16px;background:linear-gradient(#f6f6f6,#dcdcdc);border:0.5px solid #8c8c8c;box-sizing:border-box;border-radius:1px;"></div><div class="t" style="left:125.6px;top:130.61px;height:16.38px;line-height:16.38px;font-size:12.6px;color:#000;width:15.6px;text-align:center;transform:scaleX(0.940) rotate(0.03deg);transform-origin:50% 50%;font-weight:bold;"><</div><div style="left:142.4px;top:130.4px;width:15.6px;height:16px;background:linear-gradient(#f6f6f6,#dcdcdc);border:0.5px solid #8c8c8c;box-sizing:border-box;border-radius:1px;"></div><div class="t" style="left:142.4px;top:130.61px;height:16.38px;line-height:16.38px;font-size:12.6px;color:#000;width:15.6px;text-align:center;transform:scaleX(0.940) rotate(0.03deg);transform-origin:50% 50%;font-weight:bold;">></div><div class="t" style="left:23.6px;top:166.71px;height:13.38px;line-height:13.38px;font-size:10.29px;color:#222;transform:scaleX(0.940) rotate(0.03deg);transform-origin:0 50%;">Source</div><div style="left:57.2px;top:163.6px;width:102px;height:18.4px;background:linear-gradient(#fbfbfb,#ebebeb);border:0.5px solid #a6a6a6;box-sizing:border-box;border-radius:1px;"></div><div class="t" style="left:61.6px;top:166.85px;height:13.1px;line-height:13.1px;font-size:10.08px;color:#222;transform:scaleX(0.940) rotate(0.03deg);transform-origin:0 50%;">CH 8</div><div style="left:148.2px;top:171.4px;width:6px;height:3.6px;background:#222;clip-path:polygon(0 0,100% 0,50% 100%);"></div><div style="left:176px;top:88px;width:75.6px;height:104px;border:0.5px solid #f0f0f0;box-sizing:border-box;border-radius:1.5px;"></div><div style="left:180.4px;top:81.2px;width:31.2px;height:12px;background:#fff;"></div><div class="t" style="left:182.4px;top:81.51px;height:13.38px;line-height:13.38px;font-size:10.29px;color:#222;transform:scaleX(0.940) rotate(0.03deg);transform-origin:0 50%;">Mode</div><div style="left:180.2px;top:110.2px;width:10px;height:10px;border-radius:50%;border:0.6px solid #8c8c8c;background:radial-gradient(#fff,#e4e4e4);box-sizing:border-box;"></div><div class="t" style="left:196.4px;top:109.11px;height:13.38px;line-height:13.38px;font-size:10.29px;color:#222;transform:scaleX(0.940) rotate(0.03deg);transform-origin:0 50%;">Auto</div><div style="left:180.2px;top:134.2px;width:10px;height:10px;border-radius:50%;border:0.6px solid #8c8c8c;background:radial-gradient(#fff,#e4e4e4);box-sizing:border-box;"></div><div style="left:182.3px;top:136.3px;width:5.8px;height:5.8px;border-radius:50%;background:#3c3c3c;"></div><div class="t" style="left:196.4px;top:133.11px;height:13.38px;line-height:13.38px;font-size:10.29px;color:#222;transform:scaleX(0.940) rotate(0.03deg);transform-origin:0 50%;">Single</div><div style="left:180.2px;top:157px;width:10px;height:10px;border-radius:50%;border:0.6px solid #8c8c8c;background:radial-gradient(#fff,#e4e4e4);box-sizing:border-box;"></div><div class="t" style="left:196.4px;top:155.91px;height:13.38px;line-height:13.38px;font-size:10.29px;color:#222;transform:scaleX(0.940) rotate(0.03deg);transform-origin:0 50%;">Normal</div><div style="left:256.8px;top:88px;width:62.4px;height:104px;border:0.5px solid #f0f0f0;box-sizing:border-box;border-radius:1.5px;"></div><div style="left:262.8px;top:83.2px;width:24.8px;height:12px;background:#fff;"></div><div class="t" style="left:264.4px;top:83.51px;height:13.38px;line-height:13.38px;font-size:10.29px;color:#222;transform:scaleX(0.940) rotate(0.03deg);transform-origin:0 50%;">Edge</div><div style="left:262.2px;top:110.2px;width:10px;height:10px;border-radius:50%;border:0.6px solid #8c8c8c;background:radial-gradient(#fff,#e4e4e4);box-sizing:border-box;"></div><div style="left:264.3px;top:112.3px;width:5.8px;height:5.8px;border-radius:50%;background:#3c3c3c;"></div><div class="t" style="left:278.4px;top:109.11px;height:13.38px;line-height:13.38px;font-size:10.29px;color:#222;transform:scaleX(0.940) rotate(0.03deg);transform-origin:0 50%;">Rise</div><div style="left:262.2px;top:134.6px;width:10px;height:10px;border-radius:50%;border:0.6px solid #8c8c8c;background:radial-gradient(#fff,#e4e4e4);box-sizing:border-box;"></div><div class="t" style="left:278.4px;top:133.51px;height:13.38px;line-height:13.38px;font-size:10.29px;color:#222;transform:scaleX(0.940) rotate(0.03deg);transform-origin:0 50%;">Fall</div><div style="left:262.2px;top:157px;width:10px;height:10px;border-radius:50%;border:0.6px solid #8c8c8c;background:radial-gradient(#fff,#e4e4e4);box-sizing:border-box;"></div><div class="t" style="left:278.4px;top:155.91px;height:13.38px;line-height:13.38px;font-size:10.29px;color:#222;transform:scaleX(0.940) rotate(0.03deg);transform-origin:0 50%;">Both</div><div style="left:24px;top:208px;width:137.6px;height:74.4px;background:linear-gradient(#f4f4f4,#e9e9e9 48%,#dadada 52%,#d2d2d2);border:0.6px solid #8f8f8f;box-sizing:border-box;border-radius:1.5px;"></div><div class="t" style="left:24px;top:238.28px;height:15.83px;line-height:15.83px;font-size:12.18px;color:#1d7a2a;width:137.6px;text-align:center;transform:scaleX(0.940) rotate(0.03deg);transform-origin:50% 50%;font-weight:bold;">RUN</div><div style="left:168px;top:206.4px;width:153.6px;height:79.6px;border:0.5px solid #f0f0f0;box-sizing:border-box;border-radius:1.5px;"></div><div style="left:171.6px;top:200px;width:54px;height:12px;background:#fff;"></div><div class="t" style="left:173.2px;top:199.51px;height:13.38px;line-height:13.38px;font-size:10.29px;color:#222;transform:scaleX(0.940) rotate(0.03deg);transform-origin:0 50%;">Acquisition</div><div class="t" style="left:173.2px;top:217.51px;height:13.38px;line-height:13.38px;font-size:10.29px;color:#222;transform:scaleX(0.940) rotate(0.03deg);transform-origin:0 50%;">Length</div><div style="left:214.8px;top:214px;width:100.8px;height:17.6px;background:#ededed;border-top:0.5px solid #c6cad1;box-sizing:border-box;"></div><div class="t" style="left:214.8px;top:216.85px;height:13.1px;line-height:13.1px;font-size:10.08px;color:#a8a8a8;width:89.6px;text-align:right;transform:scaleX(0.940) rotate(0.03deg);transform-origin:100% 50%;">1000</div><div style="left:305.6px;top:214.4px;width:9.6px;height:16.8px;background:#e2e2e2;border-left:0.4px solid #c8c8c8;box-sizing:border-box;"></div><div class="t" style="left:173.2px;top:241.91px;height:13.38px;line-height:13.38px;font-size:10.29px;color:#222;transform:scaleX(0.940) rotate(0.03deg);transform-origin:0 50%;">Sample</div><div style="left:214.8px;top:238px;width:64.4px;height:17.6px;background:#fff;border-top:0.5px solid #c6cad1;box-sizing:border-box;"></div><div class="t" style="left:218px;top:239.65px;height:13.1px;line-height:13.1px;font-size:10.08px;color:#222;transform:scaleX(0.940) rotate(0.03deg);transform-origin:0 50%;">2.00m</div><div style="left:281.2px;top:238.8px;width:15.6px;height:16px;background:linear-gradient(#f6f6f6,#dcdcdc);border:0.5px solid #8c8c8c;box-sizing:border-box;border-radius:1px;"></div><div class="t" style="left:281.2px;top:239.01px;height:16.38px;line-height:16.38px;font-size:12.6px;color:#000;width:15.6px;text-align:center;transform:scaleX(0.940) rotate(0.03deg);transform-origin:50% 50%;font-weight:bold;"><</div><div style="left:298px;top:238.8px;width:15.6px;height:16px;background:linear-gradient(#f6f6f6,#dcdcdc);border:0.5px solid #8c8c8c;box-sizing:border-box;border-radius:1px;"></div><div class="t" style="left:298px;top:239.01px;height:16.38px;line-height:16.38px;font-size:12.6px;color:#000;width:15.6px;text-align:center;transform:scaleX(0.940) rotate(0.03deg);transform-origin:50% 50%;font-weight:bold;">></div><div class="t" style="left:169.2px;top:264.31px;height:13.38px;line-height:13.38px;font-size:10.29px;color:#222;transform:scaleX(0.940) rotate(0.03deg);transform-origin:0 50%;">Time/Div</div><div style="left:214.8px;top:260.4px;width:64.4px;height:17.6px;background:#fff;border-top:0.5px solid #c6cad1;box-sizing:border-box;"></div><div class="t" style="left:218px;top:262.05px;height:13.1px;line-height:13.1px;font-size:10.08px;color:#222;transform:scaleX(0.940) rotate(0.03deg);transform-origin:0 50%;">200.00m</div><div style="left:281.2px;top:261.2px;width:15.6px;height:16px;background:linear-gradient(#f6f6f6,#dcdcdc);border:0.5px solid #8c8c8c;box-sizing:border-box;border-radius:1px;"></div><div class="t" style="left:281.2px;top:261.41px;height:16.38px;line-height:16.38px;font-size:12.6px;color:#000;width:15.6px;text-align:center;transform:scaleX(0.940) rotate(0.03deg);transform-origin:50% 50%;font-weight:bold;"><</div><div style="left:298px;top:261.2px;width:15.6px;height:16px;background:linear-gradient(#f6f6f6,#dcdcdc);border:0.5px solid #8c8c8c;box-sizing:border-box;border-radius:1px;"></div><div class="t" style="left:298px;top:261.41px;height:16.38px;line-height:16.38px;font-size:12.6px;color:#000;width:15.6px;text-align:center;transform:scaleX(0.940) rotate(0.03deg);transform-origin:50% 50%;font-weight:bold;">></div><div class="t" style="left:25.2px;top:293.38px;height:12.83px;line-height:12.83px;font-size:9.87px;color:#222;transform:scaleX(0.940) rotate(0.03deg);transform-origin:0 50%;font-weight:bold;">Channel</div><div class="t" style="left:68.8px;top:293.38px;height:12.83px;line-height:12.83px;font-size:9.87px;color:#222;transform:scaleX(0.940) rotate(0.03deg);transform-origin:0 50%;font-weight:bold;">Channel Variable</div><div class="t" style="left:203.2px;top:296.58px;height:12.83px;line-height:12.83px;font-size:9.87px;color:#222;transform:scaleX(0.940) rotate(0.03deg);transform-origin:0 50%;font-weight:bold;">Data Type</div><div class="t" style="left:273.2px;top:296.58px;height:12.83px;line-height:12.83px;font-size:9.87px;color:#222;transform:scaleX(0.940) rotate(0.03deg);transform-origin:0 50%;font-weight:bold;">Scale</div><div class="t" style="left:327.6px;top:296.58px;height:12.83px;line-height:12.83px;font-size:9.87px;color:#222;transform:scaleX(0.940) rotate(0.03deg);transform-origin:0 50%;font-weight:bold;">C</div><div class="t" style="left:28.4px;top:316.98px;height:12.83px;line-height:12.83px;font-size:9.87px;color:#222;transform:scaleX(0.940) rotate(0.03deg);transform-origin:0 50%;">Ch #1</div><div style="left:67.2px;top:313.6px;width:130.8px;height:17.6px;background:#fff;border:0.5px solid #e8e8e8;border-top-color:#cfcfcf;box-sizing:border-box;"></div><div class="t" style="left:71.6px;top:314.98px;height:12.83px;line-height:12.83px;font-size:9.87px;color:#222;transform:scaleX(0.940) rotate(0.03deg);transform-origin:0 50%;">ics_f4_iu_ad</div><div style="left:188.2px;top:321.4px;width:6px;height:3.6px;background:#222;clip-path:polygon(0 0,100% 0,50% 100%);"></div><div style="left:202.8px;top:313.6px;width:65.6px;height:18px;background:linear-gradient(#f6f6f6,#e2e2e2);border:0.5px solid #9c9c9c;box-sizing:border-box;border-radius:1px;"></div><div class="t" style="left:207.2px;top:316.98px;height:12.83px;line-height:12.83px;font-size:9.87px;color:#222;transform:scaleX(0.940) rotate(0.03deg);transform-origin:0 50%;">FLOAT</div><div style="left:257.4px;top:321.4px;width:6px;height:3.6px;background:#222;clip-path:polygon(0 0,100% 0,50% 100%);"></div><div style="left:272.8px;top:313.6px;width:48px;height:18px;background:linear-gradient(#f6f6f6,#e2e2e2);border:0.5px solid #9c9c9c;box-sizing:border-box;border-radius:1px;"></div><div class="t" style="left:277.2px;top:316.98px;height:12.83px;line-height:12.83px;font-size:9.87px;color:#222;transform:scaleX(0.940) rotate(0.03deg);transform-origin:0 50%;">Q0</div><div style="left:309.8px;top:321.4px;width:6px;height:3.6px;background:#222;clip-path:polygon(0 0,100% 0,50% 100%);"></div><div style="left:328.4px;top:313.6px;width:3.2px;height:18px;background:#e23f9c;"></div><div class="t" style="left:28.4px;top:344.02px;height:12.83px;line-height:12.83px;font-size:9.87px;color:#222;transform:scaleX(0.940) rotate(0.03deg);transform-origin:0 50%;">Ch #2</div><div style="left:67.2px;top:340.64px;width:130.8px;height:17.6px;background:#fff;border:0.5px solid #e8e8e8;border-top-color:#cfcfcf;box-sizing:border-box;"></div><div class="t" style="left:71.6px;top:342.02px;height:12.83px;line-height:12.83px;font-size:9.87px;color:#222;transform:scaleX(0.940) rotate(0.03deg);transform-origin:0 50%;">tune_f4_iw_ad</div><div style="left:188.2px;top:348.44px;width:6px;height:3.6px;background:#222;clip-path:polygon(0 0,100% 0,50% 100%);"></div><div style="left:202.8px;top:340.64px;width:65.6px;height:18px;background:linear-gradient(#f6f6f6,#e2e2e2);border:0.5px solid #9c9c9c;box-sizing:border-box;border-radius:1px;"></div><div class="t" style="left:207.2px;top:344.02px;height:12.83px;line-height:12.83px;font-size:9.87px;color:#222;transform:scaleX(0.940) rotate(0.03deg);transform-origin:0 50%;">FLOAT</div><div style="left:257.4px;top:348.44px;width:6px;height:3.6px;background:#222;clip-path:polygon(0 0,100% 0,50% 100%);"></div><div style="left:272.8px;top:340.64px;width:48px;height:18px;background:linear-gradient(#f6f6f6,#e2e2e2);border:0.5px solid #9c9c9c;box-sizing:border-box;border-radius:1px;"></div><div class="t" style="left:277.2px;top:344.02px;height:12.83px;line-height:12.83px;font-size:9.87px;color:#222;transform:scaleX(0.940) rotate(0.03deg);transform-origin:0 50%;">Q0</div><div style="left:309.8px;top:348.44px;width:6px;height:3.6px;background:#222;clip-path:polygon(0 0,100% 0,50% 100%);"></div><div style="left:328.4px;top:340.64px;width:3.2px;height:18px;background:#42d2e2;"></div><div class="t" style="left:28.4px;top:371.06px;height:12.83px;line-height:12.83px;font-size:9.87px;color:#222;transform:scaleX(0.940) rotate(0.03deg);transform-origin:0 50%;">Ch #3</div><div style="left:67.2px;top:367.68px;width:130.8px;height:17.6px;background:#fff;border:0.5px solid #e8e8e8;border-top-color:#cfcfcf;box-sizing:border-box;"></div><div class="t" style="left:71.6px;top:369.06px;height:12.83px;line-height:12.83px;font-size:9.87px;color:#222;transform:scaleX(0.940) rotate(0.03deg);transform-origin:0 50%;">tune_f4_speed_rad</div><div style="left:188.2px;top:375.48px;width:6px;height:3.6px;background:#222;clip-path:polygon(0 0,100% 0,50% 100%);"></div><div style="left:202.8px;top:367.68px;width:65.6px;height:18px;background:linear-gradient(#f6f6f6,#e2e2e2);border:0.5px solid #9c9c9c;box-sizing:border-box;border-radius:1px;"></div><div class="t" style="left:207.2px;top:371.06px;height:12.83px;line-height:12.83px;font-size:9.87px;color:#222;transform:scaleX(0.940) rotate(0.03deg);transform-origin:0 50%;">FLOAT</div><div style="left:257.4px;top:375.48px;width:6px;height:3.6px;background:#222;clip-path:polygon(0 0,100% 0,50% 100%);"></div><div style="left:272.8px;top:367.68px;width:48px;height:18px;background:linear-gradient(#f6f6f6,#e2e2e2);border:0.5px solid #9c9c9c;box-sizing:border-box;border-radius:1px;"></div><div class="t" style="left:277.2px;top:371.06px;height:12.83px;line-height:12.83px;font-size:9.87px;color:#222;transform:scaleX(0.940) rotate(0.03deg);transform-origin:0 50%;">Q0</div><div style="left:309.8px;top:375.48px;width:6px;height:3.6px;background:#222;clip-path:polygon(0 0,100% 0,50% 100%);"></div><div style="left:328.4px;top:367.68px;width:3.2px;height:18px;background:#ecec5a;"></div><div class="t" style="left:28.4px;top:398.1px;height:12.83px;line-height:12.83px;font-size:9.87px;color:#222;transform:scaleX(0.940) rotate(0.03deg);transform-origin:0 50%;">Ch #4</div><div style="left:67.2px;top:394.72px;width:130.8px;height:17.6px;background:#fff;border:0.5px solid #e8e8e8;border-top-color:#cfcfcf;box-sizing:border-box;"></div><div class="t" style="left:71.6px;top:396.1px;height:12.83px;line-height:12.83px;font-size:9.87px;color:#222;transform:scaleX(0.940) rotate(0.03deg);transform-origin:0 50%;">ics_f4_modu</div><div style="left:188.2px;top:402.52px;width:6px;height:3.6px;background:#222;clip-path:polygon(0 0,100% 0,50% 100%);"></div><div style="left:202.8px;top:394.72px;width:65.6px;height:18px;background:linear-gradient(#f6f6f6,#e2e2e2);border:0.5px solid #9c9c9c;box-sizing:border-box;border-radius:1px;"></div><div class="t" style="left:207.2px;top:398.1px;height:12.83px;line-height:12.83px;font-size:9.87px;color:#222;transform:scaleX(0.940) rotate(0.03deg);transform-origin:0 50%;">FLOAT</div><div style="left:257.4px;top:402.52px;width:6px;height:3.6px;background:#222;clip-path:polygon(0 0,100% 0,50% 100%);"></div><div style="left:272.8px;top:394.72px;width:48px;height:18px;background:linear-gradient(#f6f6f6,#e2e2e2);border:0.5px solid #9c9c9c;box-sizing:border-box;border-radius:1px;"></div><div class="t" style="left:277.2px;top:398.1px;height:12.83px;line-height:12.83px;font-size:9.87px;color:#222;transform:scaleX(0.940) rotate(0.03deg);transform-origin:0 50%;">Q0</div><div style="left:309.8px;top:402.52px;width:6px;height:3.6px;background:#222;clip-path:polygon(0 0,100% 0,50% 100%);"></div><div style="left:328.4px;top:394.72px;width:3.2px;height:18px;background:#62dc62;"></div><div class="t" style="left:28.4px;top:425.14px;height:12.83px;line-height:12.83px;font-size:9.87px;color:#222;transform:scaleX(0.940) rotate(0.03deg);transform-origin:0 50%;">Ch #5</div><div style="left:67.2px;top:421.76px;width:130.8px;height:17.6px;background:#fff;border:0.5px solid #e8e8e8;border-top-color:#cfcfcf;box-sizing:border-box;"></div><div class="t" style="left:71.6px;top:423.14px;height:12.83px;line-height:12.83px;font-size:9.87px;color:#222;transform:scaleX(0.940) rotate(0.03deg);transform-origin:0 50%;">ics_f4_modv</div><div style="left:188.2px;top:429.56px;width:6px;height:3.6px;background:#222;clip-path:polygon(0 0,100% 0,50% 100%);"></div><div style="left:202.8px;top:421.76px;width:65.6px;height:18px;background:linear-gradient(#f6f6f6,#e2e2e2);border:0.5px solid #9c9c9c;box-sizing:border-box;border-radius:1px;"></div><div class="t" style="left:207.2px;top:425.14px;height:12.83px;line-height:12.83px;font-size:9.87px;color:#222;transform:scaleX(0.940) rotate(0.03deg);transform-origin:0 50%;">FLOAT</div><div style="left:257.4px;top:429.56px;width:6px;height:3.6px;background:#222;clip-path:polygon(0 0,100% 0,50% 100%);"></div><div style="left:272.8px;top:421.76px;width:48px;height:18px;background:linear-gradient(#f6f6f6,#e2e2e2);border:0.5px solid #9c9c9c;box-sizing:border-box;border-radius:1px;"></div><div class="t" style="left:277.2px;top:425.14px;height:12.83px;line-height:12.83px;font-size:9.87px;color:#222;transform:scaleX(0.940) rotate(0.03deg);transform-origin:0 50%;">Q0</div><div style="left:309.8px;top:429.56px;width:6px;height:3.6px;background:#222;clip-path:polygon(0 0,100% 0,50% 100%);"></div><div style="left:328.4px;top:421.76px;width:3.2px;height:18px;background:#9a62ea;"></div><div class="t" style="left:28.4px;top:452.18px;height:12.83px;line-height:12.83px;font-size:9.87px;color:#222;transform:scaleX(0.940) rotate(0.03deg);transform-origin:0 50%;">Ch #6</div><div style="left:67.2px;top:448.8px;width:130.8px;height:17.6px;background:#fff;border:0.5px solid #e8e8e8;border-top-color:#cfcfcf;box-sizing:border-box;"></div><div class="t" style="left:71.6px;top:450.18px;height:12.83px;line-height:12.83px;font-size:9.87px;color:#222;transform:scaleX(0.940) rotate(0.03deg);transform-origin:0 50%;">ics_f4_modw</div><div style="left:188.2px;top:456.6px;width:6px;height:3.6px;background:#222;clip-path:polygon(0 0,100% 0,50% 100%);"></div><div style="left:202.8px;top:448.8px;width:65.6px;height:18px;background:linear-gradient(#f6f6f6,#e2e2e2);border:0.5px solid #9c9c9c;box-sizing:border-box;border-radius:1px;"></div><div class="t" style="left:207.2px;top:452.18px;height:12.83px;line-height:12.83px;font-size:9.87px;color:#222;transform:scaleX(0.940) rotate(0.03deg);transform-origin:0 50%;">FLOAT</div><div style="left:257.4px;top:456.6px;width:6px;height:3.6px;background:#222;clip-path:polygon(0 0,100% 0,50% 100%);"></div><div style="left:272.8px;top:448.8px;width:48px;height:18px;background:linear-gradient(#f6f6f6,#e2e2e2);border:0.5px solid #9c9c9c;box-sizing:border-box;border-radius:1px;"></div><div class="t" style="left:277.2px;top:452.18px;height:12.83px;line-height:12.83px;font-size:9.87px;color:#222;transform:scaleX(0.940) rotate(0.03deg);transform-origin:0 50%;">Q0</div><div style="left:309.8px;top:456.6px;width:6px;height:3.6px;background:#222;clip-path:polygon(0 0,100% 0,50% 100%);"></div><div style="left:328.4px;top:448.8px;width:3.2px;height:18px;background:#f07a3c;"></div><div class="t" style="left:28.4px;top:479.22px;height:12.83px;line-height:12.83px;font-size:9.87px;color:#222;transform:scaleX(0.940) rotate(0.03deg);transform-origin:0 50%;">Ch #7</div><div style="left:67.2px;top:475.84px;width:130.8px;height:17.6px;background:#fff;border:0.5px solid #e8e8e8;border-top-color:#cfcfcf;box-sizing:border-box;"></div><div class="t" style="left:71.6px;top:477.22px;height:12.83px;line-height:12.83px;font-size:9.87px;color:#222;transform:scaleX(0.940) rotate(0.03deg);transform-origin:0 50%;">ics_f4_vdc_ad</div><div style="left:188.2px;top:483.64px;width:6px;height:3.6px;background:#222;clip-path:polygon(0 0,100% 0,50% 100%);"></div><div style="left:202.8px;top:475.84px;width:65.6px;height:18px;background:linear-gradient(#f6f6f6,#e2e2e2);border:0.5px solid #9c9c9c;box-sizing:border-box;border-radius:1px;"></div><div class="t" style="left:207.2px;top:479.22px;height:12.83px;line-height:12.83px;font-size:9.87px;color:#222;transform:scaleX(0.940) rotate(0.03deg);transform-origin:0 50%;">FLOAT</div><div style="left:257.4px;top:483.64px;width:6px;height:3.6px;background:#222;clip-path:polygon(0 0,100% 0,50% 100%);"></div><div style="left:272.8px;top:475.84px;width:48px;height:18px;background:linear-gradient(#f6f6f6,#e2e2e2);border:0.5px solid #9c9c9c;box-sizing:border-box;border-radius:1px;"></div><div class="t" style="left:277.2px;top:479.22px;height:12.83px;line-height:12.83px;font-size:9.87px;color:#222;transform:scaleX(0.940) rotate(0.03deg);transform-origin:0 50%;">Q0</div><div style="left:309.8px;top:483.64px;width:6px;height:3.6px;background:#222;clip-path:polygon(0 0,100% 0,50% 100%);"></div><div style="left:328.4px;top:475.84px;width:3.2px;height:18px;background:#e83c3c;"></div><div class="t" style="left:28.4px;top:506.26px;height:12.83px;line-height:12.83px;font-size:9.87px;color:#222;transform:scaleX(0.940) rotate(0.03deg);transform-origin:0 50%;">Ch #8</div><div style="left:67.2px;top:502.88px;width:130.8px;height:17.6px;background:#fff;border:0.5px solid #e8e8e8;border-top-color:#cfcfcf;box-sizing:border-box;"></div><div class="t" style="left:71.6px;top:504.26px;height:12.83px;line-height:12.83px;font-size:9.87px;color:#222;transform:scaleX(0.940) rotate(0.03deg);transform-origin:0 50%;">ics_f4_id_lpf</div><div style="left:188.2px;top:510.68px;width:6px;height:3.6px;background:#222;clip-path:polygon(0 0,100% 0,50% 100%);"></div><div style="left:202.8px;top:502.88px;width:65.6px;height:18px;background:linear-gradient(#f6f6f6,#e2e2e2);border:0.5px solid #9c9c9c;box-sizing:border-box;border-radius:1px;"></div><div class="t" style="left:207.2px;top:506.26px;height:12.83px;line-height:12.83px;font-size:9.87px;color:#222;transform:scaleX(0.940) rotate(0.03deg);transform-origin:0 50%;">FLOAT</div><div style="left:257.4px;top:510.68px;width:6px;height:3.6px;background:#222;clip-path:polygon(0 0,100% 0,50% 100%);"></div><div style="left:272.8px;top:502.88px;width:48px;height:18px;background:linear-gradient(#f6f6f6,#e2e2e2);border:0.5px solid #9c9c9c;box-sizing:border-box;border-radius:1px;"></div><div class="t" style="left:277.2px;top:506.26px;height:12.83px;line-height:12.83px;font-size:9.87px;color:#222;transform:scaleX(0.940) rotate(0.03deg);transform-origin:0 50%;">Q0</div><div style="left:309.8px;top:510.68px;width:6px;height:3.6px;background:#222;clip-path:polygon(0 0,100% 0,50% 100%);"></div><div style="left:328.4px;top:502.88px;width:3.2px;height:18px;background:#f2f2f2;"></div><div style="left:13.6px;top:627.6px;width:317.8px;height:14.8px;background:#efefef;"></div><div style="left:28px;top:628.4px;width:276px;height:13.2px;background:linear-gradient(#f3f3f3,#dadada 50%,#cdcdcd);border:0.5px solid #a9a9a9;box-sizing:border-box;border-radius:1px;"></div><div class="t" style="left:18px;top:629.79px;height:12.01px;line-height:12.01px;font-size:9.24px;color:#444;transform:scaleX(0.940) rotate(0.03deg);transform-origin:0 50%;">◂</div><div class="t" style="left:162.8px;top:630.49px;height:9.83px;line-height:9.83px;font-size:7.56px;color:#777;transform:scaleX(0.940) rotate(0.03deg);transform-origin:0 50%;">⦀</div></div>
</div></body></html>
